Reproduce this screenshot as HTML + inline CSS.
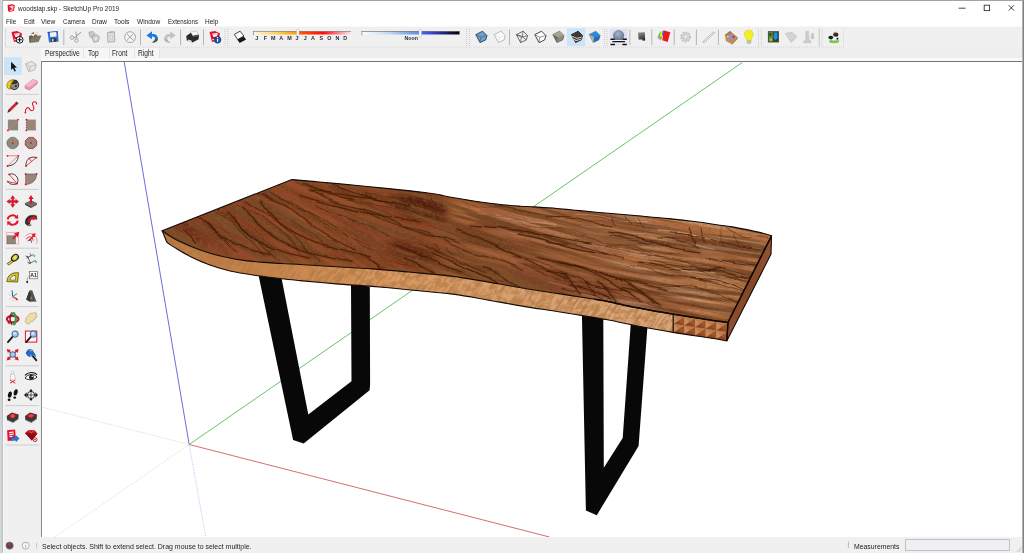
<!DOCTYPE html>
<html lang="en">
<head>
<meta charset="utf-8">
<title>woodslap.skp - SketchUp Pro 2019</title>
<style>
html,body{margin:0;padding:0;}
body{width:1024px;height:553px;overflow:hidden;background:#fff;position:relative;font-family:"Liberation Sans",sans-serif;color:#222;}
.abs{position:absolute;}
#win{position:absolute;left:0;top:0;width:1024px;height:553px;overflow:hidden;background:#fff;}
.t{position:absolute;display:inline-block;white-space:nowrap;font-size:7.7px;line-height:10px;color:#1e1e1e;transform-origin:0 50%;}
#toolbar{left:0;top:26px;width:1024px;height:22px;background:#f0f0f0;border-top:1px solid #f8f8f8;box-sizing:border-box;}
#tabrow{left:0;top:48px;width:1024px;height:13px;background:#eeeeee;}
#tabline{left:41px;top:58px;width:983px;height:3px;background:#fafafa;}
#tabs{left:41px;top:48px;width:119px;height:10px;background:#f6f6f6;}
.tsep{position:absolute;top:49px;width:1px;height:9px;background:#e2e2e2;}
#lefttb{left:0;top:48px;width:41px;height:489px;background:#f0f0f0;}
#vp{left:41px;top:61px;width:981px;height:476px;background:#fff;border-top:1px solid #767676;border-left:1px solid #8a8a8a;box-sizing:border-box;}
#status{left:0;top:537px;width:1024px;height:16px;background:#f0f0f0;}
#mbox{left:905px;top:539px;width:105px;height:12px;box-sizing:border-box;border:1px solid #b4c4d6;background:#f0f0f0;}
svg{position:absolute;left:0;top:0;}
</style>
</head>
<body>
<div id="win">
  <div id="toolbar" class="abs"></div>
  <div id="tabrow" class="abs"></div>
  <div id="tabs" class="abs"></div>
  <div id="tabline" class="abs"></div>
  <div class="tsep" style="left:83px"></div>
  <div class="tsep" style="left:109px"></div>
  <div class="tsep" style="left:134px"></div>
  <div class="tsep" style="left:159px"></div>
  <div id="lefttb" class="abs"></div>
  <div id="vp" class="abs"></div>
  <div id="status" class="abs"></div>
  <div id="mbox" class="abs"></div>
  <span class="t" style="left:18.3px;top:4.0px;transform:scaleX(0.843)">woodslap.skp - SketchUp Pro 2019</span>
  <span class="t" style="left:6.3px;top:17.0px;transform:scaleX(0.823)">File</span>
  <span class="t" style="left:23.6px;top:17.0px;transform:scaleX(0.808)">Edit</span>
  <span class="t" style="left:41.3px;top:17.0px;transform:scaleX(0.865)">View</span>
  <span class="t" style="left:62.6px;top:17.0px;transform:scaleX(0.797)">Camera</span>
  <span class="t" style="left:92px;top:17.0px;transform:scaleX(0.836)">Draw</span>
  <span class="t" style="left:114.2px;top:17.0px;transform:scaleX(0.858)">Tools</span>
  <span class="t" style="left:136.8px;top:17.0px;transform:scaleX(0.848)">Window</span>
  <span class="t" style="left:167.6px;top:17.0px;transform:scaleX(0.798)">Extensions</span>
  <span class="t" style="left:205px;top:17.0px;transform:scaleX(0.847)">Help</span>
  <span class="t" style="left:45.3px;top:47.8px;font-size:8.5px;transform:scaleX(0.781)">Perspective</span>
  <span class="t" style="left:87.6px;top:47.8px;font-size:8.5px;transform:scaleX(0.780)">Top</span>
  <span class="t" style="left:112.3px;top:47.8px;font-size:8.5px;transform:scaleX(0.776)">Front</span>
  <span class="t" style="left:137.9px;top:47.8px;font-size:8.5px;transform:scaleX(0.781)">Right</span>
  <span class="t" style="left:41.6px;top:542.1px;font-size:8.0px;transform:scaleX(0.871)">Select objects. Shift to extend select. Drag mouse to select multiple.</span>
  <span class="t" style="left:854.4px;top:542.1px;font-size:8.0px;transform:scaleX(0.858)">Measurements</span>
<svg id="scene" width="1024" height="553" viewBox="0 0 1024 553">
<defs>
  <clipPath id="vpclip"><rect x="42" y="62" width="980" height="475"/></clipPath>
  <linearGradient id="gTop" gradientUnits="userSpaceOnUse" x1="165" y1="225" x2="770" y2="290">
    <stop offset="0" stop-color="#7e381c"/>
    <stop offset="0.12" stop-color="#914827"/>
    <stop offset="0.3" stop-color="#9a4f29"/>
    <stop offset="0.42" stop-color="#8c4525"/>
    <stop offset="0.55" stop-color="#a5633c"/>
    <stop offset="0.65" stop-color="#ab6a42"/>
    <stop offset="0.8" stop-color="#b36e3e"/>
    <stop offset="1" stop-color="#b47242"/>
  </linearGradient>
  <linearGradient id="gSide" gradientUnits="userSpaceOnUse" x1="165" y1="240" x2="672" y2="325">
    <stop offset="0" stop-color="#b87440"/>
    <stop offset="0.22" stop-color="#c6844a"/>
    <stop offset="0.45" stop-color="#d99a62"/>
    <stop offset="0.7" stop-color="#d8a070"/>
    <stop offset="1" stop-color="#d8a67c"/>
  </linearGradient>
  <linearGradient id="gEnd" gradientUnits="userSpaceOnUse" x1="772" y1="240" x2="727" y2="338"><stop offset="0" stop-color="#935331"/><stop offset="0.5" stop-color="#824727"/><stop offset="1" stop-color="#8e5030"/></linearGradient>
  <filter id="blur6" x="-50%" y="-50%" width="200%" height="200%"><feGaussianBlur stdDeviation="4.5"/></filter>
  <filter id="blur04" x="-5%" y="-5%" width="110%" height="110%"><feGaussianBlur stdDeviation="0.45"/></filter>
  <filter id="wob" x="-5%" y="-5%" width="110%" height="110%"><feTurbulence type="fractalNoise" baseFrequency="0.035 0.07" numOctaves="2" seed="2" result="t"/><feDisplacementMap in="SourceGraphic" in2="t" scale="5" xChannelSelector="R" yChannelSelector="G"/><feGaussianBlur stdDeviation="0.4"/></filter>
  <filter id="blur1" x="-5%" y="-5%" width="110%" height="110%"><feGaussianBlur stdDeviation="0.9"/></filter>
  <filter id="mottle" x="0" y="0" width="100%" height="100%">
    <feTurbulence type="fractalNoise" baseFrequency="0.25 0.5" numOctaves="2" seed="4" result="n"/>
    <feColorMatrix in="n" type="matrix" values="0 0 0 0 0.25  0 0 0 0 0.1  0 0 0 0 0.04  3 0 0 0 -1.35"/>
  </filter>
  <filter id="mottle2" x="0" y="0" width="100%" height="100%">
    <feTurbulence type="fractalNoise" baseFrequency="0.12 0.2" numOctaves="3" seed="9" result="n"/>
    <feColorMatrix in="n" type="matrix" values="0 0 0 0 0.52  0 0 0 0 0.24  0 0 0 0 0.08  6 0 0 0 -2.75"/>
  </filter>
  <filter id="blur3" x="-50%" y="-50%" width="200%" height="200%"><feGaussianBlur stdDeviation="3"/></filter>
  <filter id="fine" x="0" y="0" width="100%" height="100%">
    <feTurbulence type="fractalNoise" baseFrequency="0.009 0.16" numOctaves="4" seed="7" result="n"/>
    <feColorMatrix in="n" type="matrix" values="0 0 0 0 0.2  0 0 0 0 0.07  0 0 0 0 0.02  7 0 0 0 -3.05"/>
  </filter>
  <filter id="fineL" x="0" y="0" width="100%" height="100%">
    <feTurbulence type="fractalNoise" baseFrequency="0.015 0.3" numOctaves="2" seed="21" result="n"/>
    <feColorMatrix in="n" type="matrix" values="0 0 0 0 0.92  0 0 0 0 0.8  0 0 0 0 0.68  0 3.2 0 0 -1.5"/>
  </filter>
  <linearGradient id="lgL" gradientUnits="userSpaceOnUse" x1="330" y1="0" x2="420" y2="0"><stop offset="0" stop-color="#fff"/><stop offset="1" stop-color="#000"/></linearGradient>
  <linearGradient id="lgM" gradientUnits="userSpaceOnUse" x1="330" y1="0" x2="640" y2="0"><stop offset="0" stop-color="#000"/><stop offset="0.29" stop-color="#fff"/><stop offset="0.75" stop-color="#fff"/><stop offset="1" stop-color="#000"/></linearGradient>
  <linearGradient id="lgR" gradientUnits="userSpaceOnUse" x1="560" y1="0" x2="640" y2="0"><stop offset="0" stop-color="#000"/><stop offset="1" stop-color="#fff"/></linearGradient>
  <mask id="mL" maskUnits="userSpaceOnUse" x="0" y="0" width="1024" height="553"><rect width="1024" height="553" fill="url(#lgL)"/></mask>
  <mask id="mM" maskUnits="userSpaceOnUse" x="0" y="0" width="1024" height="553"><rect width="1024" height="553" fill="url(#lgM)"/></mask>
  <mask id="mR" maskUnits="userSpaceOnUse" x="0" y="0" width="1024" height="553"><rect width="1024" height="553" fill="url(#lgR)"/></mask>
  <filter id="sgrain" x="0" y="0" width="100%" height="100%">
    <feTurbulence type="fractalNoise" baseFrequency="0.06 0.4" numOctaves="3" seed="11" result="n"/>
    <feColorMatrix in="n" type="matrix" values="0 0 0 0 0.42  0 0 0 0 0.18  0 0 0 0 0.06  3.2 0 0 0 -1.4"/>
  </filter>
  <path id="pTop" d="M162.2,230.7 L291.8,179.6 C295.9,179.9 306.1,180.8 316.2,181.7 C326.3,182.6 340.2,183.8 352.3,185.0 C364.4,186.2 376.4,187.3 388.5,188.6 C400.6,189.8 416.1,191.4 424.7,192.5 C433.3,193.6 436.1,194.2 440.0,194.9 C443.9,195.6 443.7,196.0 448.1,196.8 C452.5,197.6 460.2,198.9 466.2,199.8 C472.2,200.8 478.2,201.7 484.2,202.5 C490.2,203.3 496.3,204.1 502.3,204.7 C508.3,205.3 515.1,205.8 520.4,206.2 C525.7,206.6 528.0,206.5 534.0,206.9 C540.0,207.3 549.8,207.9 556.6,208.5 C563.4,209.1 568.4,209.6 575.0,210.2 C581.6,210.8 586.7,211.3 596.2,212.2 C605.8,213.0 620.2,214.2 632.3,215.3 C644.3,216.4 657.9,217.5 668.5,218.6 C679.1,219.7 687.6,220.7 696.2,221.8 C704.8,222.9 714.0,224.3 720.0,225.2 C726.0,226.0 725.7,225.7 732.3,226.9 C738.9,228.1 753.0,230.9 759.5,232.4 C766.0,233.9 769.5,235.3 771.5,235.9 L728.0,322.4 C724.8,321.9 717.8,321.1 708.5,319.7 C699.2,318.3 684.3,316.0 672.3,314.0 C660.2,312.0 646.6,309.6 636.2,307.6 C625.8,305.6 616.9,303.3 610.0,301.9 C603.1,300.5 603.3,300.7 594.7,299.3 C586.1,297.9 570.6,295.5 558.5,293.6 C546.4,291.7 534.3,290.0 522.3,288.0 C510.2,286.0 496.6,283.4 486.2,281.6 C475.8,279.8 466.9,278.4 460.0,277.4 C453.1,276.4 453.3,276.3 444.7,275.4 C436.1,274.5 420.6,273.1 408.5,272.0 C396.4,270.9 384.4,269.8 372.3,268.9 C360.2,268.0 348.2,267.4 336.2,266.7 C324.1,266.0 309.1,265.0 300.0,264.5 C290.9,264.0 287.7,263.9 281.6,263.5 C275.5,263.1 269.5,262.9 263.5,262.4 C257.5,261.9 251.4,261.4 245.4,260.6 C239.4,259.8 233.3,258.8 227.3,257.5 C221.3,256.2 215.2,254.8 209.2,253.0 C203.2,251.2 197.2,249.1 191.2,246.6 C185.2,244.1 177.9,240.8 173.1,238.1 C168.3,235.4 164.0,231.9 162.2,230.7 Z"/>
  <path id="pSide" d="M162.2,230.7 C164.0,231.9 168.3,235.4 173.1,238.1 C177.9,240.8 185.2,244.1 191.2,246.6 C197.2,249.1 203.2,251.2 209.2,253.0 C215.2,254.8 221.3,256.2 227.3,257.5 C233.3,258.8 239.4,259.8 245.4,260.6 C251.4,261.4 257.5,261.9 263.5,262.4 C269.5,262.9 275.5,263.1 281.6,263.5 C287.7,263.9 290.9,264.0 300.0,264.5 C309.1,265.0 324.1,266.0 336.2,266.7 C348.2,267.4 360.2,268.0 372.3,268.9 C384.4,269.8 396.4,270.9 408.5,272.0 C420.6,273.1 436.1,274.5 444.7,275.4 C453.3,276.3 453.1,276.4 460.0,277.4 C466.9,278.4 475.8,279.8 486.2,281.6 C496.6,283.4 510.2,286.0 522.3,288.0 C534.3,290.0 546.4,291.7 558.5,293.6 C570.6,295.5 586.1,297.9 594.7,299.3 C603.3,300.7 603.1,300.5 610.0,301.9 C616.9,303.3 625.8,305.6 636.2,307.6 C646.6,309.6 666.3,312.9 672.3,314.0 L673.2,332.4 C667.0,331.3 646.7,327.7 636.2,325.7 C625.7,323.7 616.9,321.6 610.0,320.3 C603.1,319.0 603.3,319.0 594.7,317.6 C586.1,316.2 570.6,313.6 558.5,311.7 C546.4,309.8 534.3,308.1 522.3,306.1 C510.2,304.1 496.6,301.5 486.2,299.7 C475.8,297.9 466.9,296.2 460.0,295.1 C453.1,294.0 453.3,294.2 444.7,293.3 C436.1,292.4 420.6,290.9 408.5,289.7 C396.4,288.5 384.4,287.4 372.3,286.4 C360.2,285.4 348.2,284.9 336.2,283.9 C324.1,282.9 309.1,281.5 300.0,280.6 C290.9,279.7 287.7,279.4 281.6,278.7 C275.5,278.0 269.5,277.3 263.5,276.5 C257.5,275.7 251.4,274.9 245.4,273.8 C239.4,272.8 233.3,271.7 227.3,270.2 C221.3,268.7 215.2,266.9 209.2,264.7 C203.2,262.5 197.2,260.0 191.2,257.0 C185.2,254.0 177.2,249.0 173.1,246.6 C169.0,244.2 167.9,243.0 166.8,242.3 Z"/>
  <clipPath id="cTop"><use href="#pTop"/></clipPath>
  <clipPath id="cSide"><use href="#pSide"/></clipPath>
</defs>
<g clip-path="url(#vpclip)">
  <line x1="124.2" y1="61.9" x2="189.2" y2="444.5" stroke="#5a5ae0" stroke-width="0.9"/>
  <line x1="189.2" y1="444.5" x2="205.8" y2="537" stroke="#a4a4ee" stroke-width="0.8" stroke-dasharray="0.8 1.2"/>
  <line x1="189.2" y1="444.5" x2="742.4" y2="62.4" stroke="#56bc56" stroke-width="0.9"/>
  <line x1="189.2" y1="444.5" x2="55" y2="537" stroke="#aadfaa" stroke-width="0.8" stroke-dasharray="0.8 1.2"/>
  <line x1="189.2" y1="444.5" x2="549.5" y2="537" stroke="#d05c5c" stroke-width="0.9"/>
  <line x1="189.2" y1="444.5" x2="40" y2="406.6" stroke="#efb4b4" stroke-width="0.8" stroke-dasharray="0.8 1.2"/>
  <path d="M351,284 L369.8,286.5 L370.1,384.4 L369.6,390.3 L303.7,443.4 L293.1,439.9 L258.6,275.5 L281.4,277.5 L308.3,414.5 L351.5,381.2 Z" fill="#080808"/>
  <path d="M581.9,314 L603.3,317.5 L603.8,467.8 L622.7,437.9 L630.9,322 L647.5,326 L638.6,445.9 L596.8,515.2 L585.9,510.6 Z" fill="#080808"/>
  <use href="#pTop" fill="url(#gTop)"/>
  <g clip-path="url(#cTop)">
    <g filter="url(#blur6)">
      <ellipse cx="420" cy="207" rx="30" ry="12" fill="#55220e" opacity="0.95" transform="rotate(14 420 207)"/>
      <ellipse cx="467" cy="213" rx="17" ry="7" fill="#c8844a" opacity="0.95" transform="rotate(10 467 213)"/>
      <ellipse cx="416" cy="254" rx="32" ry="10" fill="#5e230c" opacity="0.85" transform="rotate(16 416 254)"/>
      <ellipse cx="455" cy="268" rx="26" ry="5" fill="#b46c34" opacity="0.7" transform="rotate(16 455 268)"/>
      <ellipse cx="335" cy="236" rx="45" ry="9" fill="#a4562c" opacity="0.6" transform="rotate(22 335 236)"/>
      <ellipse cx="300" cy="205" rx="40" ry="7" fill="#9e5228" opacity="0.5" transform="rotate(8 300 205)"/>
      <ellipse cx="215" cy="233" rx="45" ry="8" fill="#74341a" opacity="0.6" transform="rotate(8 215 233)"/>
      <ellipse cx="610" cy="240" rx="120" ry="11" fill="#c08c64" opacity="0.5" transform="rotate(9 610 240)"/>
      <ellipse cx="555" cy="281" rx="75" ry="8" fill="#70321a" opacity="0.65" transform="rotate(12 555 281)"/>
      <ellipse cx="700" cy="285" rx="50" ry="14" fill="#b88656" opacity="0.5" transform="rotate(9 700 285)"/>
      <ellipse cx="640" cy="302" rx="50" ry="6" fill="#6e3820" opacity="0.5" transform="rotate(10 640 302)"/>
    </g>
    <g mask="url(#mL)"><g transform="rotate(30 280 225)"><rect x="60" y="60" width="520" height="360" filter="url(#fine)"/></g></g>
    <g mask="url(#mM)"><g transform="rotate(15 480 245)"><rect x="250" y="80" width="480" height="360" filter="url(#fine)"/></g></g>
    <g mask="url(#mR)"><g transform="rotate(8.5 650 270)"><rect x="440" y="100" width="420" height="340" filter="url(#fine)"/></g>
      <g transform="rotate(8.5 650 270)" opacity="0.3"><rect x="440" y="100" width="420" height="340" filter="url(#fineL)"/></g></g>
    <g fill="none" stroke="#4a1c0a" stroke-linecap="round" filter="url(#blur1)">
<path d="M574.8,224.8 C576.5,225.1 581.5,226.1 584.8,226.5 C588.1,227.0 591.5,227.4 594.8,227.7 C598.1,228.0 601.5,228.2 604.8,228.5 C608.1,228.7 611.5,228.9 614.8,229.2 C618.1,229.5 621.5,229.9 624.8,230.4 C628.1,230.9 631.5,231.5 634.8,232.1 C638.1,232.8 641.5,233.6 644.8,234.3 C648.1,235.1 651.5,235.9 654.8,236.6 C658.1,237.4 661.5,238.1 664.8,238.7 C668.1,239.3 671.5,239.9 674.8,240.4 C678.1,240.8 681.5,241.2 684.8,241.5 C688.1,241.9 691.5,242.0 694.8,242.4 C698.1,242.7 701.5,243.1 704.8,243.5 C708.1,244.0 711.5,244.5 714.8,245.1 C718.1,245.8 721.5,246.5 724.8,247.3 C728.1,248.1 731.5,249.1 734.8,250.0 C738.1,251.0 741.5,252.2 744.8,253.2 C748.1,254.2 751.5,255.2 754.8,256.1 C758.1,257.0 763.1,258.3 764.8,258.7" stroke-width="2.7" opacity="0.16"/>
<path d="M294.6,194.1 C296.2,194.9 301.2,197.2 304.6,198.8 C307.9,200.4 311.2,202.0 314.6,203.6 C317.9,205.2 321.2,206.8 324.6,208.4 C327.9,210.0 331.2,211.5 334.6,213.1 C337.9,214.6 341.2,216.2 344.6,217.7 C347.9,219.2 352.9,221.5 354.6,222.3" stroke-width="2.7" opacity="0.10"/>
<path d="M624.1,216.0 C625.7,216.3 630.7,217.2 634.1,217.9 C637.4,218.6 640.7,219.5 644.1,220.2 C647.4,221.0 650.7,221.7 654.1,222.4 C657.4,223.1 660.7,223.6 664.1,224.1 C667.4,224.6 670.7,225.1 674.1,225.4 C677.4,225.7 680.7,225.9 684.1,226.1 C687.4,226.3 690.7,226.4 694.1,226.6 C697.4,226.7 700.7,226.9 704.1,227.2 C707.4,227.5 710.7,227.9 714.1,228.4 C717.4,228.8 720.7,229.4 724.1,230.1 C727.4,230.8 730.7,231.6 734.1,232.6 C737.4,233.5 742.4,235.4 744.1,235.9" stroke-width="2.0" opacity="0.06"/>
<path d="M244.4,227.8 C246.1,229.2 251.1,233.3 254.4,236.2 C257.7,239.2 261.1,242.4 264.4,245.6 C267.7,248.9 272.7,254.0 274.4,255.7" stroke-width="2.3" opacity="0.22"/>
<path d="M277.2,189.0 C278.9,189.6 283.9,191.4 287.2,192.7 C290.5,193.9 293.9,195.2 297.2,196.6 C300.5,198.0 303.9,199.5 307.2,201.0 C310.5,202.6 313.9,204.2 317.2,206.0 C320.5,207.7 323.9,209.5 327.2,211.3 C330.5,213.1 333.9,215.0 337.2,216.9 C340.5,218.8 343.9,220.7 347.2,222.6 C350.5,224.5 353.9,226.4 357.2,228.2 C360.5,230.0 363.9,231.8 367.2,233.5 C370.5,235.2 373.9,236.8 377.2,238.3 C380.5,239.8 383.9,241.2 387.2,242.5 C390.5,243.9 393.9,245.1 397.2,246.4 C400.5,247.6 403.9,248.8 407.2,250.1 C410.5,251.3 413.9,252.5 417.2,253.7 C420.5,255.0 425.5,256.9 427.2,257.6" stroke-width="2.8" opacity="0.10"/>
<path d="M631.2,230.8 C632.9,231.1 637.9,232.2 641.2,232.9 C644.6,233.6 647.9,234.4 651.2,235.1 C654.6,235.7 657.9,236.3 661.2,236.8 C664.6,237.2 667.9,237.5 671.2,237.9 C674.6,238.2 677.9,238.4 681.2,238.8 C684.6,239.1 687.9,239.5 691.2,240.0 C694.6,240.6 697.9,241.3 701.2,242.1 C704.6,242.8 707.9,243.8 711.2,244.7 C714.6,245.5 717.9,246.4 721.2,247.2 C724.6,247.9 729.6,248.7 731.2,249.0" stroke-width="1.3" opacity="0.10"/>
<path d="M603.9,278.7 C605.5,278.9 610.5,279.2 613.9,279.7 C617.2,280.2 620.5,280.8 623.9,281.8 C627.2,282.8 630.5,284.3 633.9,285.6 C637.2,286.9 640.5,288.5 643.9,289.6 C647.2,290.6 650.5,291.4 653.9,292.0 C657.2,292.6 662.2,292.9 663.9,293.1" stroke-width="1.5" opacity="0.14"/>
<path d="M590.9,254.7 C592.6,255.2 597.6,256.6 600.9,257.3 C604.3,258.1 607.6,258.7 610.9,259.3 C614.3,259.9 617.6,260.6 620.9,261.1 C624.3,261.7 627.6,262.1 630.9,262.7 C634.3,263.2 637.6,263.6 640.9,264.2 C644.3,264.7 647.6,265.2 650.9,265.9 C654.3,266.5 657.6,267.3 660.9,268.1 C664.3,268.9 667.6,269.9 670.9,270.8 C674.3,271.7 679.3,273.2 680.9,273.6" stroke-width="1.9" opacity="0.13"/>
<path d="M158.5,211.5 C160.1,213.1 165.1,217.4 168.5,221.0 C171.8,224.5 176.8,230.9 178.5,232.8" stroke-width="1.6" opacity="0.16"/>
<path d="M678.8,302.9 C680.5,303.2 685.5,304.0 688.8,304.6 C692.1,305.2 695.5,305.8 698.8,306.7 C702.1,307.5 705.5,308.6 708.8,309.6 C712.1,310.6 715.5,311.8 718.8,312.8 C722.1,313.9 725.5,314.9 728.8,315.7 C732.1,316.6 735.5,317.3 738.8,317.9 C742.1,318.5 745.5,319.0 748.8,319.6 C752.1,320.3 755.5,320.9 758.8,321.7 C762.1,322.6 767.1,324.2 768.8,324.7" stroke-width="1.7" opacity="0.17"/>
<path d="M473.1,235.7 C474.7,236.5 479.7,239.0 483.1,240.3 C486.4,241.5 489.7,242.6 493.1,243.4 C496.4,244.3 499.7,244.8 503.1,245.4 C506.4,246.0 509.7,246.3 513.1,247.0 C516.4,247.8 519.7,248.7 523.1,249.8 C526.4,250.9 529.7,252.4 533.1,253.7 C536.4,255.1 539.7,256.7 543.1,257.9 C546.4,259.2 549.7,260.2 553.1,261.0 C556.4,261.8 559.7,262.1 563.1,262.6 C566.4,263.0 569.7,263.2 573.1,263.7 C576.4,264.2 579.7,264.8 583.1,265.7 C586.4,266.6 589.7,267.9 593.1,269.2 C596.4,270.4 599.7,272.1 603.1,273.3 C606.4,274.5 609.7,275.5 613.1,276.4 C616.4,277.2 619.7,277.7 623.1,278.1 C626.4,278.6 629.7,278.6 633.1,279.0 C636.4,279.4 639.7,279.7 643.1,280.4 C646.4,281.2 651.4,282.9 653.1,283.4" stroke-width="1.2" opacity="0.18"/>
<path d="M290.1,220.2 C291.8,221.3 296.8,224.7 300.1,227.0 C303.5,229.4 306.8,231.8 310.1,234.3 C313.5,236.7 316.8,239.2 320.1,241.7 C323.5,244.2 326.8,246.8 330.1,249.3 C333.5,251.9 338.5,255.9 340.1,257.2" stroke-width="2.5" opacity="0.15"/>
<path d="M331.0,238.7 C332.6,239.9 337.6,243.4 341.0,245.8 C344.3,248.2 347.6,250.6 351.0,253.0 C354.3,255.4 357.6,257.8 361.0,260.1 C364.3,262.5 369.3,265.8 371.0,266.9" stroke-width="2.2" opacity="0.19"/>
<path d="M320.5,183.0 C322.2,183.6 327.2,185.6 330.5,186.7 C333.8,187.9 337.2,188.9 340.5,189.8 C343.8,190.7 347.2,191.4 350.5,192.2 C353.8,192.9 357.2,193.5 360.5,194.3 C363.8,195.1 367.2,195.8 370.5,196.7 C373.8,197.6 377.2,198.7 380.5,199.7 C383.8,200.8 388.8,202.6 390.5,203.2" stroke-width="2.3" opacity="0.18"/>
<path d="M372.9,248.5 C374.6,249.4 379.6,252.3 382.9,254.1 C386.2,255.9 389.6,257.6 392.9,259.2 C396.2,260.8 399.6,262.4 402.9,263.9 C406.2,265.4 411.2,267.6 412.9,268.3" stroke-width="1.6" opacity="0.22"/>
<path d="M208.1,192.4 C209.8,193.3 214.8,195.8 218.1,197.7 C221.4,199.5 224.8,201.5 228.1,203.6 C231.4,205.7 234.8,207.9 238.1,210.2 C241.4,212.6 244.8,215.2 248.1,217.8 C251.4,220.4 254.8,223.1 258.1,225.9 C261.4,228.7 264.8,231.6 268.1,234.4 C271.4,237.3 274.8,240.2 278.1,243.1 C281.4,246.0 284.8,249.0 288.1,252.0 C291.4,255.0 296.4,259.7 298.1,261.3" stroke-width="1.3" opacity="0.10"/>
<path d="M483.2,245.5 C484.8,246.3 489.8,248.7 493.2,250.2 C496.5,251.7 499.8,253.3 503.2,254.5 C506.5,255.8 509.8,256.7 513.2,257.5 C516.5,258.3 519.8,258.8 523.2,259.5 C526.5,260.2 531.5,261.2 533.2,261.6" stroke-width="1.9" opacity="0.17"/>
<path d="M630.9,259.1 C632.6,259.5 637.6,260.8 640.9,261.5 C644.3,262.3 647.6,262.9 650.9,263.6 C654.3,264.2 657.6,264.7 660.9,265.3 C664.3,265.8 667.6,266.3 670.9,266.8 C674.3,267.4 677.6,268.0 680.9,268.6 C684.3,269.3 687.6,270.0 690.9,270.8 C694.3,271.6 699.3,272.9 700.9,273.4" stroke-width="1.7" opacity="0.08"/>
<path d="M615.6,273.8 C617.3,274.3 622.3,275.8 625.6,276.9 C629.0,277.9 632.3,279.1 635.6,280.2 C639.0,281.3 642.3,282.3 645.6,283.4 C649.0,284.4 652.3,285.4 655.6,286.4 C659.0,287.3 662.3,288.3 665.6,289.1 C669.0,290.0 672.3,290.8 675.6,291.6 C679.0,292.3 682.3,292.9 685.6,293.6 C689.0,294.2 692.3,294.7 695.6,295.3 C699.0,295.8 702.3,296.4 705.6,296.9 C709.0,297.5 712.3,297.9 715.6,298.5 C719.0,299.1 722.3,299.6 725.6,300.3 C729.0,300.9 732.3,301.6 735.6,302.4 C739.0,303.3 744.0,304.7 745.6,305.1" stroke-width="2.3" opacity="0.13"/>
<path d="M682.0,253.5 C683.7,253.8 688.7,254.5 692.0,255.1 C695.3,255.7 698.7,256.3 702.0,257.0 C705.3,257.8 708.7,258.6 712.0,259.4 C715.3,260.2 718.7,261.0 722.0,261.9 C725.3,262.7 728.7,263.6 732.0,264.5 C735.3,265.4 740.3,266.9 742.0,267.3" stroke-width="2.4" opacity="0.14"/>
<path d="M165.3,173.9 C167.0,174.6 172.0,176.4 175.3,177.8 C178.7,179.2 182.0,180.8 185.3,182.5 C188.7,184.2 192.0,186.1 195.3,188.1 C198.7,190.1 202.0,192.3 205.3,194.5 C208.7,196.7 212.0,199.0 215.3,201.3 C218.7,203.5 222.0,205.9 225.3,208.2 C228.7,210.5 232.0,212.7 235.3,215.0 C238.7,217.3 242.0,219.7 245.3,222.1 C248.7,224.4 252.0,226.7 255.3,229.2 C258.7,231.8 262.0,234.4 265.3,237.2 C268.7,240.0 273.7,244.7 275.3,246.1" stroke-width="2.2" opacity="0.24"/>
<path d="M566.4,269.9 C568.1,270.3 573.1,271.7 576.4,272.5 C579.7,273.4 583.1,274.2 586.4,275.0 C589.7,275.9 593.1,276.6 596.4,277.4 C599.7,278.2 603.1,279.0 606.4,279.8 C609.7,280.7 613.1,281.5 616.4,282.3 C619.7,283.2 623.1,284.2 626.4,285.1 C629.7,286.1 633.1,287.1 636.4,288.1 C639.7,289.0 643.1,289.9 646.4,290.8 C649.7,291.7 653.1,292.6 656.4,293.5 C659.7,294.4 663.1,295.4 666.4,296.2 C669.7,297.1 673.1,298.0 676.4,298.8 C679.7,299.6 683.1,300.4 686.4,301.2 C689.7,302.0 694.7,303.1 696.4,303.5" stroke-width="2.1" opacity="0.12"/>
<path d="M645.1,303.3 C646.7,303.7 651.7,304.9 655.1,305.7 C658.4,306.4 661.7,307.1 665.1,307.9 C668.4,308.6 671.7,309.4 675.1,310.2 C678.4,310.9 681.7,311.7 685.1,312.6 C688.4,313.5 693.4,315.1 695.1,315.6" stroke-width="2.0" opacity="0.10"/>
<path d="M668.5,248.6 C670.2,248.9 675.2,249.6 678.5,250.3 C681.8,250.9 685.2,251.7 688.5,252.5 C691.8,253.4 695.2,254.3 698.5,255.2 C701.8,256.1 705.2,257.2 708.5,258.0 C711.8,258.9 715.2,259.6 718.5,260.3 C721.8,261.0 725.2,261.4 728.5,262.0 C731.8,262.5 735.2,262.9 738.5,263.4 C741.8,264.0 745.2,264.4 748.5,265.0 C751.8,265.6 755.2,266.2 758.5,267.0 C761.8,267.8 766.8,269.6 768.5,270.1" stroke-width="2.9" opacity="0.10"/>
<path d="M510.9,242.7 C512.6,243.0 517.6,243.9 520.9,244.5 C524.2,245.1 527.6,245.6 530.9,246.2 C534.2,246.8 537.6,247.5 540.9,248.3 C544.2,249.0 547.6,249.9 550.9,250.8 C554.2,251.8 557.6,252.9 560.9,253.9 C564.2,255.0 567.6,256.2 570.9,257.4 C574.2,258.5 579.2,260.2 580.9,260.8" stroke-width="2.1" opacity="0.18"/>
<path d="M160.1,176.5 C161.7,177.2 166.7,179.4 170.1,181.0 C173.4,182.6 176.7,184.3 180.1,186.0 C183.4,187.7 186.7,189.5 190.1,191.4 C193.4,193.2 196.7,195.1 200.1,197.1 C203.4,199.1 206.7,201.2 210.1,203.4 C213.4,205.6 216.7,207.8 220.1,210.2 C223.4,212.5 226.7,215.1 230.1,217.7 C233.4,220.3 236.7,223.0 240.1,225.9 C243.4,228.7 246.7,231.7 250.1,234.8 C253.4,237.9 256.7,241.1 260.1,244.4 C263.4,247.6 268.4,252.8 270.1,254.5" stroke-width="1.6" opacity="0.13"/>
<path d="M475.8,222.1 C477.5,222.4 482.5,223.3 485.8,224.0 C489.2,224.6 492.5,225.2 495.8,226.1 C499.2,226.9 502.5,227.9 505.8,228.9 C509.2,229.9 512.5,231.2 515.8,232.2 C519.2,233.3 522.5,234.5 525.8,235.3 C529.2,236.2 532.5,236.9 535.8,237.5 C539.2,238.1 542.5,238.5 545.8,238.9 C549.2,239.3 552.5,239.5 555.8,240.0 C559.2,240.5 564.2,241.5 565.8,241.8" stroke-width="2.7" opacity="0.20"/>
<path d="M437.1,251.0 C438.8,251.8 443.8,254.1 447.1,255.6 C450.5,257.1 453.8,258.5 457.1,259.8 C460.5,261.2 463.8,262.5 467.1,263.8 C470.5,265.0 473.8,266.2 477.1,267.4 C480.5,268.6 483.8,269.7 487.1,271.0 C490.5,272.2 495.5,274.1 497.1,274.7" stroke-width="1.4" opacity="0.27"/>
<path d="M317.9,234.2 C319.6,235.4 324.6,239.2 327.9,241.5 C331.2,243.8 334.6,246.0 337.9,248.2 C341.2,250.3 344.6,252.4 347.9,254.4 C351.2,256.4 354.6,258.3 357.9,260.3 C361.2,262.3 366.2,265.2 367.9,266.2" stroke-width="1.8" opacity="0.25"/>
<path d="M208.9,234.1 C210.6,235.8 215.6,240.6 218.9,244.1 C222.2,247.6 227.2,253.2 228.9,255.0" stroke-width="3.0" opacity="0.18"/>
<path d="M389.9,203.1 C391.6,203.5 396.6,204.7 399.9,205.5 C403.2,206.4 406.6,207.2 409.9,208.1 C413.2,208.9 416.6,209.8 419.9,210.8 C423.2,211.7 426.6,212.8 429.9,213.9 C433.2,214.9 436.6,216.0 439.9,217.3 C443.2,218.5 448.2,220.6 449.9,221.2" stroke-width="2.4" opacity="0.24"/>
<path d="M340.7,187.5 C342.4,187.9 347.4,189.2 350.7,190.0 C354.1,190.8 357.4,191.4 360.7,192.1 C364.1,192.9 367.4,193.5 370.7,194.4 C374.1,195.2 377.4,196.2 380.7,197.2 C384.1,198.2 387.4,199.4 390.7,200.5 C394.1,201.6 399.1,203.2 400.7,203.8" stroke-width="2.3" opacity="0.12"/>
<path d="M536.3,261.3 C537.9,261.7 542.9,262.9 546.3,263.8 C549.6,264.7 552.9,265.5 556.3,266.4 C559.6,267.4 562.9,268.4 566.3,269.4 C569.6,270.4 572.9,271.5 576.3,272.5 C579.6,273.5 582.9,274.6 586.3,275.6 C589.6,276.6 592.9,277.6 596.3,278.4 C599.6,279.3 602.9,280.1 606.3,280.9 C609.6,281.7 612.9,282.4 616.3,283.2 C619.6,283.9 622.9,284.7 626.3,285.5 C629.6,286.3 634.6,287.7 636.3,288.1" stroke-width="2.7" opacity="0.06"/>
<path d="M670.3,310.4 C672.0,310.8 677.0,312.3 680.3,312.9 C683.7,313.6 687.0,314.0 690.3,314.5 C693.7,315.0 697.0,315.3 700.3,316.0 C703.7,316.6 708.7,318.0 710.3,318.4" stroke-width="2.8" opacity="0.15"/>
<path d="M222.0,175.8 C223.7,176.6 228.7,179.0 232.0,180.6 C235.3,182.2 238.7,183.8 242.0,185.4 C245.3,186.9 248.7,188.3 252.0,189.7 C255.3,191.1 258.7,192.4 262.0,193.7 C265.3,195.0 268.7,196.3 272.0,197.7 C275.3,199.2 278.7,200.7 282.0,202.5 C285.3,204.2 288.7,206.2 292.0,208.3 C295.3,210.4 298.7,212.8 302.0,215.1 C305.3,217.5 308.7,220.1 312.0,222.5 C315.3,224.9 318.7,227.3 322.0,229.5 C325.3,231.7 328.7,233.8 332.0,235.7 C335.3,237.7 338.7,239.5 342.0,241.4 C345.3,243.2 348.7,245.0 352.0,246.8 C355.3,248.7 360.3,251.6 362.0,252.6" stroke-width="2.6" opacity="0.23"/>
<path d="M208.0,202.6 C209.7,203.6 214.7,206.5 218.0,208.7 C221.4,210.9 224.7,213.1 228.0,215.5 C231.4,217.9 234.7,220.3 238.0,223.0 C241.4,225.6 244.7,228.5 248.0,231.4 C251.4,234.4 254.7,237.5 258.0,240.7 C261.4,244.0 264.7,247.4 268.0,250.9 C271.4,254.5 276.4,260.1 278.0,261.9" stroke-width="1.6" opacity="0.15"/>
<path d="M529.1,263.7 C530.8,264.3 535.8,266.0 539.1,267.1 C542.5,268.3 545.8,269.5 549.1,270.7 C552.5,271.9 555.8,273.1 559.1,274.3 C562.5,275.4 565.8,276.6 569.1,277.7 C572.5,278.8 575.8,279.8 579.1,280.8 C582.5,281.7 585.8,282.6 589.1,283.4 C592.5,284.3 595.8,285.0 599.1,285.8 C602.5,286.5 607.5,287.6 609.1,287.9" stroke-width="2.1" opacity="0.10"/>
<path d="M672.2,278.7 C673.8,279.1 678.8,280.2 682.2,280.9 C685.5,281.5 688.8,282.1 692.2,282.6 C695.5,283.2 698.8,283.7 702.2,284.2 C705.5,284.7 708.8,285.2 712.2,285.8 C715.5,286.3 718.8,286.9 722.2,287.6 C725.5,288.2 728.8,289.0 732.2,289.8 C735.5,290.7 738.8,291.8 742.2,292.8 C745.5,293.8 748.8,294.9 752.2,296.0 C755.5,297.0 760.5,298.7 762.2,299.2" stroke-width="1.2" opacity="0.13"/>
<path d="M433.9,259.3 C435.6,260.0 440.6,261.9 443.9,263.4 C447.3,264.8 450.6,266.3 453.9,267.9 C457.3,269.5 460.6,271.2 463.9,272.9 C467.3,274.6 472.3,277.2 473.9,278.1" stroke-width="1.3" opacity="0.16"/>
<path d="M459.1,223.4 C460.8,223.9 465.8,225.6 469.1,226.5 C472.4,227.4 475.8,228.1 479.1,228.8 C482.4,229.5 485.8,230.0 489.1,230.7 C492.4,231.4 495.8,232.1 499.1,233.0 C502.4,233.9 505.8,234.9 509.1,236.0 C512.4,237.0 515.8,238.3 519.1,239.5 C522.4,240.7 525.8,241.9 529.1,242.9 C532.4,244.0 535.8,245.0 539.1,245.8 C542.4,246.6 545.8,247.2 549.1,247.7 C552.4,248.3 557.4,248.8 559.1,249.1" stroke-width="2.9" opacity="0.11"/>
<path d="M437.6,207.5 C439.3,208.2 444.3,210.1 447.6,211.4 C450.9,212.6 454.3,213.9 457.6,215.0 C460.9,216.2 464.3,217.4 467.6,218.4 C470.9,219.4 474.3,220.3 477.6,221.1 C480.9,221.9 484.3,222.5 487.6,223.2 C490.9,223.9 494.3,224.5 497.6,225.2 C500.9,225.9 504.3,226.6 507.6,227.4 C510.9,228.2 514.3,229.1 517.6,230.0 C520.9,230.9 524.3,231.8 527.6,232.7 C530.9,233.7 534.3,234.6 537.6,235.4 C540.9,236.2 544.3,237.0 547.6,237.7 C550.9,238.3 554.3,238.8 557.6,239.4 C560.9,239.9 564.3,240.3 567.6,240.8 C570.9,241.3 574.3,241.7 577.6,242.3 C580.9,242.9 584.3,243.6 587.6,244.3 C590.9,245.1 594.3,246.0 597.6,246.9 C600.9,247.7 604.3,248.7 607.6,249.5 C610.9,250.4 614.3,251.2 617.6,251.9 C620.9,252.7 625.9,253.5 627.6,253.8" stroke-width="2.3" opacity="0.19"/>
<path d="M689.6,270.7 C691.3,271.2 696.3,272.6 699.6,273.6 C702.9,274.5 706.3,275.4 709.6,276.2 C712.9,277.1 716.3,277.8 719.6,278.5 C722.9,279.2 726.3,279.8 729.6,280.4 C732.9,281.0 736.3,281.6 739.6,282.2 C742.9,282.8 746.3,283.3 749.6,283.9 C752.9,284.5 756.3,285.0 759.6,285.7 C762.9,286.3 767.9,287.6 769.6,288.0" stroke-width="2.2" opacity="0.14"/>
<path d="M468.0,237.7 C469.7,238.4 474.7,240.5 478.0,241.8 C481.4,243.1 484.7,244.3 488.0,245.4 C491.4,246.4 494.7,247.4 498.0,248.3 C501.4,249.2 504.7,250.0 508.0,250.9 C511.4,251.8 514.7,252.6 518.0,253.6 C521.4,254.6 524.7,255.6 528.0,256.7 C531.4,257.8 534.7,259.0 538.0,260.2 C541.4,261.4 544.7,262.7 548.0,263.8 C551.4,264.8 554.7,265.9 558.0,266.8 C561.4,267.7 564.7,268.4 568.0,269.2 C571.4,269.9 576.4,270.9 578.0,271.2" stroke-width="2.9" opacity="0.25"/>
<path d="M339.7,185.4 C341.4,185.9 346.4,187.5 349.7,188.4 C353.0,189.3 356.4,190.1 359.7,190.8 C363.0,191.5 368.0,192.4 369.7,192.7" stroke-width="2.0" opacity="0.27"/>
<path d="M530.9,280.3 C532.6,281.0 537.6,283.3 540.9,284.6 C544.2,286.0 547.6,287.3 550.9,288.4 C554.2,289.5 557.6,290.4 560.9,291.4 C564.2,292.3 569.2,293.7 570.9,294.1" stroke-width="1.9" opacity="0.13"/>
<path d="M578.7,285.4 C580.4,285.9 585.4,287.2 588.7,288.1 C592.0,289.0 595.4,289.9 598.7,290.8 C602.0,291.8 605.4,292.7 608.7,293.6 C612.0,294.6 615.4,295.7 618.7,296.8 C622.0,297.9 625.4,299.0 628.7,300.1 C632.0,301.2 635.4,302.3 638.7,303.3 C642.0,304.3 645.4,305.3 648.7,306.2 C652.0,307.1 655.4,308.0 658.7,308.9 C662.0,309.7 665.4,310.6 668.7,311.5 C672.0,312.3 677.0,313.5 678.7,313.9" stroke-width="1.5" opacity="0.08"/>
<path d="M603.9,272.4 C605.5,272.8 610.5,273.7 613.9,274.4 C617.2,275.2 620.5,276.1 623.9,277.0 C627.2,277.9 630.5,278.9 633.9,279.9 C637.2,280.9 640.5,281.9 643.9,282.9 C647.2,283.9 650.5,284.9 653.9,285.9 C657.2,286.9 660.5,287.9 663.9,288.8 C667.2,289.7 670.5,290.6 673.9,291.3 C677.2,292.1 680.5,292.8 683.9,293.5 C687.2,294.1 690.5,294.7 693.9,295.3 C697.2,295.9 700.5,296.5 703.9,297.1 C707.2,297.7 710.5,298.3 713.9,299.0 C717.2,299.6 720.5,300.3 723.9,301.1 C727.2,301.8 730.5,302.7 733.9,303.6 C737.2,304.5 742.2,306.1 743.9,306.6" stroke-width="2.8" opacity="0.16"/>
<path d="M270.6,215.6 C272.2,216.8 277.2,220.1 280.6,222.5 C283.9,224.9 287.2,227.5 290.6,230.1 C293.9,232.8 297.2,235.5 300.6,238.4 C303.9,241.3 307.2,244.5 310.6,247.5 C313.9,250.5 318.9,255.1 320.6,256.7" stroke-width="1.6" opacity="0.21"/>
<path d="M673.7,237.0 C675.4,237.3 680.4,238.1 683.7,238.6 C687.0,239.1 690.4,239.4 693.7,239.8 C697.0,240.3 700.4,240.8 703.7,241.4 C707.0,242.0 710.4,242.7 713.7,243.4 C717.0,244.2 720.4,245.0 723.7,245.7 C727.0,246.5 730.4,247.2 733.7,247.8 C737.0,248.5 740.4,249.2 743.7,249.9 C747.0,250.5 750.4,251.0 753.7,251.8 C757.0,252.5 762.0,253.9 763.7,254.4" stroke-width="2.8" opacity="0.11"/>
<path d="M605.4,224.0 C607.1,224.3 612.1,225.3 615.4,225.9 C618.7,226.5 622.1,227.2 625.4,227.7 C628.7,228.2 632.1,228.6 635.4,228.9 C638.7,229.3 642.1,229.4 645.4,229.7 C648.7,230.0 652.1,230.3 655.4,230.7 C658.7,231.1 662.1,231.6 665.4,232.3 C668.7,232.9 672.1,233.7 675.4,234.5 C678.7,235.2 682.1,236.0 685.4,236.6 C688.7,237.2 692.1,237.6 695.4,238.1 C698.7,238.6 703.7,239.1 705.4,239.4" stroke-width="1.5" opacity="0.18"/>
<path d="M311.6,205.3 C313.3,206.1 318.3,208.6 321.6,210.2 C324.9,211.8 328.3,213.3 331.6,214.8 C334.9,216.3 338.3,217.8 341.6,219.2 C344.9,220.7 348.3,222.1 351.6,223.6 C354.9,225.1 358.3,226.5 361.6,228.0 C364.9,229.5 368.3,230.9 371.6,232.5 C374.9,234.0 378.3,235.5 381.6,237.1 C384.9,238.6 389.9,240.9 391.6,241.7" stroke-width="1.4" opacity="0.15"/>
<path d="M399.3,245.0 C401.0,245.8 406.0,248.2 409.3,249.9 C412.6,251.7 416.0,253.5 419.3,255.2 C422.6,257.0 426.0,258.8 429.3,260.4 C432.6,262.1 436.0,263.7 439.3,265.2 C442.6,266.8 446.0,268.2 449.3,269.6 C452.6,271.0 456.0,272.2 459.3,273.6 C462.6,274.9 467.6,276.8 469.3,277.4" stroke-width="2.5" opacity="0.25"/>
<path d="M269.5,206.4 C271.2,207.7 276.2,211.4 279.5,214.0 C282.9,216.6 286.2,219.6 289.5,222.0 C292.9,224.5 296.2,226.6 299.5,228.7 C302.9,230.9 306.2,232.6 309.5,234.7 C312.9,236.9 316.2,239.0 319.5,241.6 C322.9,244.1 326.2,247.2 329.5,250.2 C332.9,253.2 337.9,258.0 339.5,259.6" stroke-width="2.9" opacity="0.13"/>
<path d="M523.6,264.4 C525.3,264.9 530.3,266.6 533.6,267.6 C537.0,268.6 540.3,269.5 543.6,270.4 C547.0,271.2 550.3,272.0 553.6,272.7 C557.0,273.5 560.3,274.2 563.6,274.9 C567.0,275.7 570.3,276.4 573.6,277.2 C577.0,278.0 580.3,278.9 583.6,279.8 C587.0,280.8 590.3,281.7 593.6,282.8 C597.0,283.9 600.3,285.1 603.6,286.2 C607.0,287.4 610.3,288.5 613.6,289.7 C617.0,290.9 620.3,292.2 623.6,293.4 C627.0,294.6 632.0,296.3 633.6,296.8" stroke-width="2.2" opacity="0.14"/>
<path d="M709.4,292.8 C711.1,293.3 716.1,294.6 719.4,295.6 C722.7,296.5 726.1,297.5 729.4,298.4 C732.7,299.4 736.1,300.4 739.4,301.3 C742.7,302.2 746.1,303.2 749.4,304.0 C752.7,304.9 756.1,305.7 759.4,306.5 C762.7,307.3 767.7,308.5 769.4,308.9" stroke-width="2.5" opacity="0.17"/>
<path d="M437.8,223.3 C439.5,224.1 444.5,226.4 447.8,227.9 C451.1,229.3 454.5,230.8 457.8,232.1 C461.1,233.5 464.5,234.8 467.8,236.0 C471.1,237.1 474.5,238.1 477.8,239.0 C481.1,240.0 484.5,240.7 487.8,241.6 C491.1,242.4 494.5,243.1 497.8,244.0 C501.1,244.8 504.5,245.6 507.8,246.6 C511.1,247.6 514.5,248.7 517.8,249.9 C521.1,251.0 524.5,252.3 527.8,253.5 C531.1,254.7 534.5,256.0 537.8,257.2 C541.1,258.4 544.5,259.5 547.8,260.5 C551.1,261.5 554.5,262.4 557.8,263.2 C561.1,263.9 564.5,264.6 567.8,265.2 C571.1,265.8 574.5,266.3 577.8,266.9 C581.1,267.4 584.5,268.0 587.8,268.7 C591.1,269.4 594.5,270.3 597.8,271.2 C601.1,272.1 604.5,273.2 607.8,274.3 C611.1,275.4 614.5,276.7 617.8,277.8 C621.1,279.0 626.1,280.7 627.8,281.3" stroke-width="1.7" opacity="0.21"/>
<path d="M672.8,250.3 C674.5,250.6 679.5,251.1 682.8,251.6 C686.1,252.2 689.5,252.7 692.8,253.4 C696.1,254.1 699.5,255.0 702.8,255.8 C706.1,256.7 709.5,257.7 712.8,258.6 C716.1,259.4 719.5,260.4 722.8,261.2 C726.1,262.0 729.5,262.7 732.8,263.4 C736.1,264.1 739.5,264.8 742.8,265.5 C746.1,266.1 749.5,266.6 752.8,267.2 C756.1,267.8 761.1,268.7 762.8,269.1" stroke-width="3.0" opacity="0.06"/>
<path d="M433.4,204.5 C435.1,205.1 440.1,206.9 443.4,208.0 C446.8,209.1 450.1,210.3 453.4,211.2 C456.8,212.1 460.1,212.8 463.4,213.5 C466.8,214.2 470.1,214.8 473.4,215.5 C476.8,216.1 480.1,216.7 483.4,217.4 C486.8,218.1 490.1,218.7 493.4,219.5 C496.8,220.3 500.1,221.2 503.4,222.1 C506.8,223.0 510.1,223.9 513.4,224.9 C516.8,225.9 520.1,226.9 523.4,227.9 C526.8,228.8 530.1,229.7 533.4,230.5 C536.8,231.3 540.1,232.0 543.4,232.7 C546.8,233.3 551.8,234.0 553.4,234.3" stroke-width="2.4" opacity="0.16"/>
<path d="M207.8,172.7 C209.5,173.4 214.5,175.2 217.8,176.4 C221.1,177.7 224.5,179.0 227.8,180.3 C231.1,181.6 234.5,182.8 237.8,184.2 C241.1,185.5 244.5,186.8 247.8,188.2 C251.1,189.6 254.5,191.0 257.8,192.5 C261.1,194.0 266.1,196.4 267.8,197.1" stroke-width="2.3" opacity="0.26"/>
<path d="M696.9,305.9 C698.6,306.4 703.6,308.1 706.9,309.1 C710.2,310.1 713.6,310.9 716.9,311.7 C720.2,312.5 723.6,313.1 726.9,313.7 C730.2,314.4 733.6,314.9 736.9,315.5 C740.2,316.0 743.6,316.5 746.9,317.1 C750.2,317.6 753.6,318.1 756.9,318.8 C760.2,319.4 765.2,320.5 766.9,320.9" stroke-width="2.1" opacity="0.17"/>
<path d="M297.7,181.6 C299.4,182.2 304.4,184.1 307.7,185.2 C311.0,186.3 314.4,187.4 317.7,188.4 C321.0,189.4 324.4,190.4 327.7,191.4 C331.0,192.3 334.4,193.2 337.7,194.2 C341.0,195.2 344.4,196.1 347.7,197.1 C351.0,198.2 354.4,199.3 357.7,200.4 C361.0,201.5 364.4,202.8 367.7,204.0 C371.0,205.2 374.4,206.5 377.7,207.8 C381.0,209.1 386.0,210.9 387.7,211.6" stroke-width="2.1" opacity="0.28"/>
<path d="M640.6,270.4 C642.2,270.8 647.2,272.0 650.6,272.7 C653.9,273.4 657.2,274.0 660.6,274.6 C663.9,275.1 667.2,275.6 670.6,276.1 C673.9,276.7 677.2,277.1 680.6,277.7 C683.9,278.3 687.2,278.9 690.6,279.6 C693.9,280.3 698.9,281.6 700.6,282.0" stroke-width="2.3" opacity="0.11"/>
<path d="M733.1,308.0 C734.8,308.5 739.8,309.9 743.1,310.9 C746.4,311.8 749.8,312.8 753.1,313.8 C756.4,314.7 761.4,316.1 763.1,316.6" stroke-width="2.1" opacity="0.06"/>
<path d="M719.8,292.2 C721.4,292.5 726.4,293.5 729.8,294.1 C733.1,294.7 736.4,295.4 739.8,296.0 C743.1,296.6 746.4,297.2 749.8,297.9 C753.1,298.5 756.4,299.1 759.8,299.8 C763.1,300.5 768.1,301.8 769.8,302.2" stroke-width="2.0" opacity="0.17"/>
<path d="M460.3,239.2 C462.0,239.8 467.0,241.4 470.3,242.5 C473.7,243.5 477.0,244.6 480.3,245.6 C483.7,246.7 487.0,247.7 490.3,248.8 C493.7,249.9 497.0,251.0 500.3,252.1 C503.7,253.2 507.0,254.3 510.3,255.5 C513.7,256.7 518.7,258.5 520.3,259.1" stroke-width="1.6" opacity="0.25"/>
<path d="M701.1,234.9 C702.8,235.3 707.8,236.5 711.1,237.4 C714.5,238.3 717.8,239.4 721.1,240.1 C724.5,240.9 727.8,241.4 731.1,241.9 C734.5,242.4 737.8,242.7 741.1,243.2 C744.5,243.7 749.5,244.6 751.1,244.9" stroke-width="2.0" opacity="0.17"/>
<path d="M562.9,215.0 C564.6,215.1 569.6,215.5 572.9,215.9 C576.2,216.2 579.6,216.5 582.9,217.0 C586.2,217.4 589.6,217.9 592.9,218.4 C596.2,219.0 599.6,219.7 602.9,220.3 C606.2,220.9 609.6,221.6 612.9,222.2 C616.2,222.8 619.6,223.4 622.9,223.8 C626.2,224.3 629.6,224.7 632.9,225.0 C636.2,225.4 639.6,225.6 642.9,225.8 C646.2,226.1 649.6,226.3 652.9,226.6 C656.2,226.9 659.6,227.2 662.9,227.6 C666.2,228.1 669.6,228.7 672.9,229.3 C676.2,229.9 679.6,230.7 682.9,231.5 C686.2,232.2 689.6,233.0 692.9,233.7 C696.2,234.3 699.6,235.0 702.9,235.6 C706.2,236.2 709.6,236.6 712.9,237.1 C716.2,237.5 719.6,237.8 722.9,238.2 C726.2,238.6 729.6,238.9 732.9,239.5 C736.2,240.0 741.2,241.3 742.9,241.7" stroke-width="1.6" opacity="0.11"/>
<path d="M325.0,227.1 C326.6,227.9 331.6,230.6 335.0,232.3 C338.3,234.0 341.6,235.7 345.0,237.4 C348.3,239.2 351.6,241.0 355.0,242.8 C358.3,244.7 361.6,246.6 365.0,248.5 C368.3,250.5 371.6,252.6 375.0,254.6 C378.3,256.7 381.6,258.8 385.0,260.9 C388.3,262.9 393.3,266.0 395.0,267.0" stroke-width="2.0" opacity="0.19"/>
<path d="M172.8,171.3 C174.5,171.6 179.5,172.5 182.8,173.5 C186.2,174.5 189.5,175.5 192.8,177.0 C196.2,178.5 199.5,180.4 202.8,182.4 C206.2,184.3 209.5,186.6 212.8,188.6 C216.2,190.6 219.5,192.5 222.8,194.2 C226.2,195.9 229.5,197.2 232.8,198.7 C236.2,200.2 239.5,201.5 242.8,203.2 C246.2,205.0 249.5,207.0 252.8,209.4 C256.2,211.8 259.5,214.7 262.8,217.5 C266.2,220.2 269.5,223.3 272.8,226.0 C276.2,228.7 279.5,231.2 282.8,233.6 C286.2,236.1 289.5,238.1 292.8,240.5 C296.2,242.9 299.5,245.2 302.8,248.0 C306.2,250.9 311.2,256.0 312.8,257.6" stroke-width="1.7" opacity="0.28"/>
<path d="M350.6,220.7 C352.3,221.4 357.3,223.7 360.6,225.0 C363.9,226.4 367.3,227.7 370.6,228.9 C373.9,230.2 377.3,231.4 380.6,232.7 C383.9,233.9 387.3,235.1 390.6,236.4 C393.9,237.7 397.3,239.1 400.6,240.5 C403.9,242.0 408.9,244.3 410.6,245.0" stroke-width="1.5" opacity="0.26"/>
<path d="M469.9,227.2 C471.6,227.8 476.6,229.3 479.9,230.7 C483.3,232.1 486.6,234.1 489.9,235.6 C493.3,237.0 496.6,238.5 499.9,239.4 C503.3,240.3 506.6,240.6 509.9,241.0 C513.3,241.4 516.6,241.4 519.9,242.1 C523.3,242.7 526.6,243.5 529.9,244.7 C533.3,245.9 538.3,248.3 539.9,249.0" stroke-width="1.8" opacity="0.14"/>
<path d="M264.2,185.5 C265.9,186.3 270.9,188.8 274.2,190.5 C277.5,192.1 280.9,193.8 284.2,195.4 C287.5,197.0 290.9,198.6 294.2,200.2 C297.5,201.7 300.9,203.2 304.2,204.7 C307.5,206.3 310.9,207.8 314.2,209.3 C317.5,210.8 320.9,212.3 324.2,213.8 C327.5,215.4 330.9,216.9 334.2,218.6 C337.5,220.2 340.9,221.9 344.2,223.7 C347.5,225.4 350.9,227.3 354.2,229.1 C357.5,231.0 360.9,232.9 364.2,234.8 C367.5,236.7 370.9,238.6 374.2,240.5 C377.5,242.3 380.9,244.2 384.2,245.9 C387.5,247.6 390.9,249.3 394.2,250.8 C397.5,252.4 400.9,253.9 404.2,255.3 C407.5,256.8 412.5,258.7 414.2,259.4" stroke-width="1.4" opacity="0.21"/>
<path d="M208.5,172.6 C210.2,173.1 215.2,174.7 218.5,175.5 C221.9,176.4 225.2,176.7 228.5,177.6 C231.9,178.4 235.2,179.4 238.5,180.8 C241.9,182.3 245.2,184.4 248.5,186.4 C251.9,188.3 255.2,190.7 258.5,192.5 C261.9,194.3 265.2,195.7 268.5,197.1 C271.9,198.4 275.2,199.2 278.5,200.5 C281.9,201.9 285.2,203.2 288.5,205.1 C291.9,207.1 295.2,209.6 298.5,212.0 C301.9,214.5 306.9,218.6 308.5,219.9" stroke-width="1.3" opacity="0.20"/>
<path d="M160.0,200.8 C161.6,202.3 166.6,206.4 170.0,209.5 C173.3,212.7 176.6,216.0 180.0,219.4 C183.3,222.9 186.6,226.5 190.0,230.1 C193.3,233.7 198.3,239.3 200.0,241.1" stroke-width="2.8" opacity="0.23"/>
<path d="M605.6,291.1 C607.3,291.4 612.3,292.3 615.6,292.9 C618.9,293.5 622.3,294.0 625.6,294.6 C628.9,295.3 632.3,296.0 635.6,296.8 C638.9,297.7 642.3,298.6 645.6,299.6 C648.9,300.7 652.3,302.1 655.6,303.4 C658.9,304.6 662.3,306.1 665.6,307.4 C668.9,308.7 672.3,310.0 675.6,311.0 C678.9,312.1 682.3,312.9 685.6,313.6 C688.9,314.3 692.3,314.8 695.6,315.3 C698.9,315.8 702.3,316.1 705.6,316.6 C708.9,317.1 712.3,317.5 715.6,318.1 C718.9,318.8 723.9,320.2 725.6,320.6" stroke-width="1.9" opacity="0.15"/>
<path d="M330.7,187.7 C332.4,188.3 337.4,190.0 340.7,191.3 C344.0,192.5 347.4,193.9 350.7,195.2 C354.0,196.5 357.4,197.9 360.7,199.2 C364.0,200.5 367.4,201.8 370.7,203.1 C374.0,204.3 377.4,205.5 380.7,206.7 C384.0,207.8 387.4,208.8 390.7,209.8 C394.0,210.7 397.4,211.7 400.7,212.5 C404.0,213.4 409.0,214.5 410.7,215.0" stroke-width="2.0" opacity="0.15"/>
<path d="M182.6,211.8 C184.3,213.4 189.3,217.9 192.6,221.3 C195.9,224.8 199.3,228.5 202.6,232.4 C205.9,236.3 210.9,242.8 212.6,244.8" stroke-width="1.4" opacity="0.20"/>
<path d="M555.7,211.6 C557.4,211.8 562.4,212.4 565.7,212.7 C569.0,213.0 572.4,213.3 575.7,213.5 C579.0,213.8 582.4,214.0 585.7,214.3 C589.0,214.6 592.4,214.8 595.7,215.1 C599.0,215.4 602.4,215.7 605.7,216.0 C609.0,216.4 612.4,216.7 615.7,217.1 C619.0,217.6 624.0,218.3 625.7,218.6" stroke-width="1.6" opacity="0.13"/>
<path d="M153.9,201.1 C155.6,202.0 160.6,204.0 163.9,206.6 C167.2,209.1 170.6,212.9 173.9,216.2 C177.2,219.4 180.6,222.4 183.9,225.9 C187.2,229.4 190.6,233.3 193.9,237.3 C197.2,241.3 202.2,247.8 203.9,249.9" stroke-width="1.7" opacity="0.14"/>
<path d="M646.0,271.2 C647.7,271.6 652.7,272.7 656.0,273.4 C659.4,274.0 662.7,274.6 666.0,275.1 C669.4,275.6 672.7,276.0 676.0,276.5 C679.4,277.0 682.7,277.4 686.0,277.8 C689.4,278.3 692.7,278.8 696.0,279.5 C699.4,280.1 702.7,280.9 706.0,281.7 C709.4,282.5 712.7,283.4 716.0,284.3 C719.4,285.2 722.7,286.2 726.0,287.3 C729.4,288.3 732.7,289.4 736.0,290.4 C739.4,291.5 742.7,292.6 746.0,293.5 C749.4,294.5 754.4,295.7 756.0,296.2" stroke-width="2.8" opacity="0.13"/>
<path d="M262.6,177.9 C264.3,178.6 269.3,180.3 272.6,181.8 C275.9,183.2 279.3,185.0 282.6,186.6 C285.9,188.3 289.3,190.2 292.6,191.8 C295.9,193.4 300.9,195.7 302.6,196.4" stroke-width="1.4" opacity="0.25"/>
<path d="M249.9,210.4 C251.5,211.5 256.5,214.8 259.9,217.0 C263.2,219.1 266.5,221.2 269.9,223.4 C273.2,225.6 276.5,227.8 279.9,230.1 C283.2,232.4 286.5,234.7 289.9,237.3 C293.2,239.8 296.5,242.5 299.9,245.4 C303.2,248.3 306.5,251.6 309.9,254.8 C313.2,258.0 318.2,263.1 319.9,264.8" stroke-width="2.0" opacity="0.16"/>
<path d="M299.9,210.8 C301.5,211.8 306.5,214.8 309.9,216.9 C313.2,219.0 316.5,221.2 319.9,223.5 C323.2,225.8 326.5,228.2 329.9,230.5 C333.2,232.9 336.5,235.3 339.9,237.7 C343.2,240.0 346.5,242.3 349.9,244.5 C353.2,246.7 356.5,248.9 359.9,250.9 C363.2,252.8 366.5,254.7 369.9,256.5 C373.2,258.3 376.5,259.9 379.9,261.5 C383.2,263.1 388.2,265.2 389.9,266.0" stroke-width="2.4" opacity="0.21"/>
<path d="M707.5,316.2 C709.2,316.7 714.2,318.0 717.5,318.8 C720.8,319.5 725.8,320.6 727.5,320.9" stroke-width="2.6" opacity="0.11"/>
<path d="M644.5,293.0 C646.2,293.3 651.2,294.2 654.5,295.0 C657.8,295.8 661.2,296.7 664.5,297.7 C667.8,298.7 671.2,299.9 674.5,301.0 C677.8,302.1 681.2,303.2 684.5,304.2 C687.8,305.2 691.2,306.1 694.5,306.9 C697.8,307.7 701.2,308.4 704.5,309.0 C707.8,309.6 711.2,310.0 714.5,310.6 C717.8,311.3 721.2,311.8 724.5,312.6 C727.8,313.4 731.2,314.4 734.5,315.4 C737.8,316.4 741.2,317.6 744.5,318.7 C747.8,319.8 751.2,320.9 754.5,321.9 C757.8,322.9 762.8,324.0 764.5,324.4" stroke-width="2.3" opacity="0.15"/>
<path d="M510.3,271.9 C512.0,272.6 517.0,274.6 520.3,275.8 C523.6,277.0 527.0,278.1 530.3,279.2 C533.6,280.4 537.0,281.4 540.3,282.5 C543.6,283.5 547.0,284.6 550.3,285.6 C553.6,286.7 557.0,287.8 560.3,288.9 C563.6,290.0 567.0,291.1 570.3,292.3 C573.6,293.4 578.6,295.2 580.3,295.7" stroke-width="2.5" opacity="0.16"/>
<path d="M637.8,242.1 C639.5,242.3 644.5,243.1 647.8,243.4 C651.1,243.7 654.5,243.9 657.8,244.2 C661.1,244.5 664.5,244.8 667.8,245.4 C671.1,246.0 674.5,246.8 677.8,247.6 C681.1,248.4 684.5,249.4 687.8,250.2 C691.1,251.1 694.5,251.9 697.8,252.6 C701.1,253.2 704.5,253.7 707.8,254.2 C711.1,254.6 714.5,254.9 717.8,255.3 C721.1,255.7 724.5,256.1 727.8,256.7 C731.1,257.4 734.5,258.3 737.8,259.3 C741.1,260.3 744.5,261.5 747.8,262.5 C751.1,263.5 754.5,264.5 757.8,265.4 C761.1,266.3 766.1,267.5 767.8,267.9" stroke-width="2.3" opacity="0.17"/>
<path d="M625.6,249.1 C627.3,249.4 632.3,250.6 635.6,251.3 C639.0,252.0 642.3,252.7 645.6,253.3 C649.0,254.0 652.3,254.6 655.6,255.1 C659.0,255.7 662.3,256.2 665.6,256.7 C669.0,257.3 672.3,257.8 675.6,258.3 C679.0,258.9 682.3,259.4 685.6,260.0 C689.0,260.6 692.3,261.2 695.6,261.9 C699.0,262.6 702.3,263.5 705.6,264.3 C709.0,265.1 712.3,265.9 715.6,266.7 C719.0,267.5 722.3,268.2 725.6,269.0 C729.0,269.8 732.3,270.5 735.6,271.3 C739.0,272.0 742.3,272.8 745.6,273.5 C749.0,274.3 752.3,274.9 755.6,275.6 C759.0,276.4 764.0,277.6 765.6,278.0" stroke-width="1.9" opacity="0.17"/>
<path d="M732.0,313.4 C733.7,313.7 738.7,314.4 742.0,315.2 C745.3,316.0 748.7,316.9 752.0,317.9 C755.3,319.0 760.3,320.9 762.0,321.5" stroke-width="1.6" opacity="0.15"/>
<path d="M302.3,199.8 C304.0,200.7 309.0,203.1 312.3,204.8 C315.7,206.6 319.0,208.4 322.3,210.2 C325.7,212.0 329.0,213.9 332.3,215.7 C335.7,217.6 339.0,219.5 342.3,221.3 C345.7,223.1 349.0,225.0 352.3,226.8 C355.7,228.6 359.0,230.3 362.3,232.0 C365.7,233.7 370.7,236.0 372.3,236.8" stroke-width="1.5" opacity="0.18"/>
<path d="M637.3,291.4 C638.9,291.8 643.9,293.0 647.3,293.8 C650.6,294.7 653.9,295.6 657.3,296.5 C660.6,297.5 663.9,298.5 667.3,299.6 C670.6,300.6 673.9,301.7 677.3,302.8 C680.6,303.8 683.9,304.9 687.3,305.9 C690.6,307.0 693.9,308.0 697.3,309.0 C700.6,309.9 703.9,310.9 707.3,311.8 C710.6,312.6 713.9,313.4 717.3,314.1 C720.6,314.8 723.9,315.4 727.3,316.1 C730.6,316.7 733.9,317.4 737.3,318.0 C740.6,318.6 743.9,319.2 747.3,319.9 C750.6,320.6 753.9,321.2 757.3,322.0 C760.6,322.7 765.6,323.9 767.3,324.3" stroke-width="1.7" opacity="0.18"/>
<path d="M396.0,206.2 C397.7,206.6 402.7,207.9 406.0,208.7 C409.4,209.6 412.7,210.4 416.0,211.3 C419.4,212.2 422.7,213.1 426.0,214.0 C429.4,215.0 432.7,216.1 436.0,217.2 C439.4,218.4 442.7,219.6 446.0,220.8 C449.4,222.0 452.7,223.2 456.0,224.4 C459.4,225.6 462.7,226.8 466.0,228.0 C469.4,229.1 472.7,230.3 476.0,231.4 C479.4,232.5 482.7,233.6 486.0,234.7 C489.4,235.7 492.7,236.7 496.0,237.7 C499.4,238.7 502.7,239.6 506.0,240.5 C509.4,241.4 512.7,242.2 516.0,243.0 C519.4,243.9 522.7,244.6 526.0,245.4 C529.4,246.1 532.7,246.8 536.0,247.6 C539.4,248.4 542.7,249.2 546.0,250.0 C549.4,250.8 552.7,251.6 556.0,252.4 C559.4,253.3 564.4,254.6 566.0,255.1" stroke-width="2.1" opacity="0.23"/>
<path d="M360.8,188.6 C362.5,189.0 367.5,190.2 370.8,190.9 C374.1,191.6 377.5,192.2 380.8,192.8 C384.1,193.4 387.5,194.0 390.8,194.8 C394.1,195.5 397.5,196.4 400.8,197.3 C404.1,198.2 407.5,199.3 410.8,200.3 C414.1,201.3 417.5,202.3 420.8,203.2 C424.1,204.1 427.5,205.0 430.8,205.9 C434.1,206.7 439.1,207.8 440.8,208.2" stroke-width="2.0" opacity="0.19"/>
<path d="M533.9,209.1 C535.6,209.4 540.6,210.0 543.9,210.4 C547.2,210.9 550.6,211.3 553.9,211.8 C557.2,212.3 560.6,212.9 563.9,213.5 C567.2,214.0 570.6,214.6 573.9,215.1 C577.2,215.7 580.6,216.2 583.9,216.8 C587.2,217.3 590.6,217.8 593.9,218.3 C597.2,218.8 600.6,219.2 603.9,219.6 C607.2,220.1 610.6,220.4 613.9,220.8 C617.2,221.1 620.6,221.5 623.9,221.9 C627.2,222.2 630.6,222.6 633.9,222.9 C637.2,223.3 640.6,223.7 643.9,224.1 C647.2,224.5 650.6,224.9 653.9,225.3 C657.2,225.8 660.6,226.2 663.9,226.7 C667.2,227.2 670.6,227.8 673.9,228.3 C677.2,228.9 682.2,229.8 683.9,230.1" stroke-width="1.5" opacity="0.07"/>
<path d="M177.6,213.5 C179.3,215.2 184.3,220.3 187.6,223.7 C191.0,227.1 194.3,230.4 197.6,233.9 C201.0,237.4 206.0,242.8 207.6,244.6" stroke-width="1.2" opacity="0.26"/>
<path d="M246.6,195.3 C248.3,196.4 253.3,199.3 256.6,201.5 C260.0,203.7 263.3,206.2 266.6,208.6 C270.0,211.0 273.3,213.5 276.6,215.9 C280.0,218.2 283.3,220.6 286.6,222.8 C290.0,225.1 293.3,227.2 296.6,229.4 C300.0,231.6 303.3,233.7 306.6,235.9 C310.0,238.2 313.3,240.5 316.6,242.9 C320.0,245.4 323.3,248.0 326.6,250.8 C330.0,253.5 335.0,258.0 336.6,259.5" stroke-width="2.3" opacity="0.10"/>
<path d="M733.5,248.4 C735.2,248.8 740.2,250.0 743.5,250.7 C746.9,251.5 750.2,252.1 753.5,252.9 C756.9,253.6 761.9,254.8 763.5,255.2" stroke-width="2.4" opacity="0.11"/>
<path d="M189.3,187.8 C190.9,188.7 195.9,191.4 199.3,193.4 C202.6,195.3 205.9,197.3 209.3,199.3 C212.6,201.3 215.9,203.2 219.3,205.4 C222.6,207.5 225.9,209.8 229.3,212.2 C232.6,214.6 235.9,217.0 239.3,219.7 C242.6,222.3 245.9,225.1 249.3,228.0 C252.6,230.8 255.9,233.8 259.3,236.9 C262.6,239.9 265.9,243.1 269.3,246.3 C272.6,249.5 277.6,254.4 279.3,256.0" stroke-width="2.0" opacity="0.16"/>
<path d="M616.9,235.2 C618.5,235.5 623.5,236.4 626.9,237.0 C630.2,237.6 633.5,238.2 636.9,238.9 C640.2,239.5 643.5,240.1 646.9,240.8 C650.2,241.4 653.5,242.1 656.9,242.7 C660.2,243.4 663.5,244.0 666.9,244.6 C670.2,245.3 673.5,245.9 676.9,246.5 C680.2,247.2 683.5,247.7 686.9,248.3 C690.2,248.9 693.5,249.4 696.9,249.9 C700.2,250.5 705.2,251.3 706.9,251.6" stroke-width="3.0" opacity="0.07"/>
<path d="M479.7,221.4 C481.4,221.8 486.4,223.1 489.7,224.2 C493.1,225.3 496.4,226.8 499.7,228.0 C503.1,229.2 506.4,230.5 509.7,231.3 C513.1,232.2 516.4,232.8 519.7,233.2 C523.1,233.7 526.4,233.6 529.7,234.1 C533.1,234.5 536.4,234.9 539.7,235.7 C543.1,236.4 546.4,237.6 549.7,238.7 C553.1,239.8 556.4,241.1 559.7,242.1 C563.1,243.0 566.4,243.8 569.7,244.3 C573.1,244.9 576.4,244.9 579.7,245.3 C583.1,245.6 586.4,245.7 589.7,246.3 C593.1,246.9 598.1,248.3 599.7,248.7" stroke-width="2.8" opacity="0.12"/>
<path d="M404.4,227.4 C406.1,228.0 411.1,229.6 414.4,230.7 C417.7,231.9 421.1,232.9 424.4,234.1 C427.7,235.3 431.1,236.6 434.4,237.9 C437.7,239.1 441.1,240.4 444.4,241.8 C447.7,243.1 451.1,244.6 454.4,246.0 C457.7,247.3 461.1,248.7 464.4,250.1 C467.7,251.5 471.1,252.9 474.4,254.3 C477.7,255.6 481.1,257.0 484.4,258.3 C487.7,259.7 491.1,261.0 494.4,262.3 C497.7,263.6 502.7,265.5 504.4,266.1" stroke-width="1.9" opacity="0.12"/>
<path d="M226.8,174.6 C228.4,175.3 233.4,177.1 236.8,178.5 C240.1,179.8 243.4,181.2 246.8,182.7 C250.1,184.1 253.4,185.6 256.8,187.2 C260.1,188.7 263.4,190.3 266.8,191.9 C270.1,193.5 273.4,195.1 276.8,196.7 C280.1,198.4 283.4,200.0 286.8,201.8 C290.1,203.5 293.4,205.2 296.8,206.9 C300.1,208.7 303.4,210.6 306.8,212.4 C310.1,214.3 313.4,216.2 316.8,218.1 C320.1,220.0 323.4,222.0 326.8,223.9 C330.1,225.9 335.1,228.9 336.8,229.9" stroke-width="1.9" opacity="0.29"/>
<path d="M660.9,244.9 C662.6,244.8 667.6,244.4 670.9,244.7 C674.2,245.0 677.6,245.8 680.9,246.8 C684.2,247.8 687.6,249.6 690.9,250.7 C694.2,251.9 697.6,253.1 700.9,253.7 C704.2,254.2 707.6,254.1 710.9,254.2 C714.2,254.3 717.6,253.8 720.9,254.2 C724.2,254.5 727.6,255.2 730.9,256.2 C734.2,257.3 737.6,259.3 740.9,260.7 C744.2,262.0 747.6,263.4 750.9,264.2 C754.2,265.0 757.6,265.0 760.9,265.4 C764.2,265.7 769.2,266.2 770.9,266.3" stroke-width="2.5" opacity="0.18"/>
<path d="M208.3,192.3 C210.0,193.1 215.0,195.3 218.3,197.3 C221.6,199.4 225.0,202.0 228.3,204.6 C231.6,207.2 235.0,210.3 238.3,213.1 C241.6,215.8 245.0,218.7 248.3,221.2 C251.6,223.7 255.0,225.8 258.3,228.0 C261.6,230.2 266.6,233.4 268.3,234.5" stroke-width="2.4" opacity="0.20"/>
<path d="M569.3,213.5 C571.0,213.7 576.0,214.2 579.3,214.5 C582.7,214.9 586.0,215.2 589.3,215.6 C592.7,216.0 596.0,216.3 599.3,216.7 C602.7,217.1 606.0,217.5 609.3,217.9 C612.7,218.3 616.0,218.8 619.3,219.3 C622.7,219.7 626.0,220.3 629.3,220.8 C632.7,221.4 636.0,221.9 639.3,222.5 C642.7,223.1 646.0,223.7 649.3,224.3 C652.7,224.8 656.0,225.4 659.3,225.9 C662.7,226.5 666.0,227.0 669.3,227.5 C672.7,228.0 676.0,228.6 679.3,229.1 C682.7,229.6 686.0,230.0 689.3,230.5 C692.7,230.9 696.0,231.3 699.3,231.7 C702.7,232.2 707.7,232.8 709.3,233.1" stroke-width="2.2" opacity="0.17"/>
<path d="M684.6,247.0 C686.3,247.2 691.3,247.9 694.6,248.2 C697.9,248.6 701.3,248.9 704.6,249.2 C707.9,249.6 711.3,249.9 714.6,250.5 C717.9,251.0 721.3,251.6 724.6,252.3 C727.9,253.1 731.3,254.1 734.6,255.1 C737.9,256.1 741.3,257.3 744.6,258.4 C747.9,259.4 751.3,260.4 754.6,261.2 C757.9,262.1 762.9,263.2 764.6,263.7" stroke-width="2.3" opacity="0.18"/>
<path d="M312.2,184.5 C313.9,184.9 318.9,186.1 322.2,186.8 C325.5,187.5 328.9,188.0 332.2,188.7 C335.5,189.5 338.9,190.4 342.2,191.5 C345.5,192.7 348.9,194.1 352.2,195.6 C355.5,197.0 358.9,198.8 362.2,200.2 C365.5,201.6 370.5,203.4 372.2,204.1" stroke-width="2.4" opacity="0.26"/>
<path d="M659.6,259.5 C661.3,259.7 666.3,260.1 669.6,260.6 C673.0,261.1 676.3,261.7 679.6,262.4 C683.0,263.2 686.3,264.2 689.6,265.1 C693.0,266.1 696.3,267.2 699.6,268.1 C703.0,269.0 706.3,269.8 709.6,270.4 C713.0,271.1 716.3,271.4 719.6,271.8 C723.0,272.3 728.0,272.8 729.6,273.0" stroke-width="1.3" opacity="0.12"/>
<path d="M544.2,237.8 C545.9,237.9 550.9,238.2 554.2,238.7 C557.6,239.2 560.9,239.8 564.2,240.6 C567.6,241.5 570.9,242.6 574.2,243.7 C577.6,244.8 580.9,246.2 584.2,247.3 C587.6,248.4 590.9,249.5 594.2,250.3 C597.6,251.1 600.9,251.6 604.2,252.0 C607.6,252.4 610.9,252.4 614.2,252.6 C617.6,252.8 620.9,252.9 624.2,253.2 C627.6,253.6 630.9,254.1 634.2,254.8 C637.6,255.5 640.9,256.5 644.2,257.5 C647.6,258.5 650.9,259.9 654.2,261.0 C657.6,262.1 660.9,263.3 664.2,264.1 C667.6,265.0 670.9,265.7 674.2,266.1 C677.6,266.6 682.6,266.8 684.2,267.0" stroke-width="2.4" opacity="0.10"/>
<path d="M330.9,204.3 C332.6,205.1 337.6,207.5 340.9,209.0 C344.3,210.6 347.6,212.2 350.9,213.8 C354.3,215.4 357.6,217.0 360.9,218.5 C364.3,220.0 367.6,221.4 370.9,222.8 C374.3,224.2 377.6,225.6 380.9,226.8 C384.3,228.1 387.6,229.3 390.9,230.4 C394.3,231.6 397.6,232.8 400.9,233.9 C404.3,235.1 407.6,236.2 410.9,237.3 C414.3,238.5 417.6,239.6 420.9,240.8 C424.3,241.9 427.6,243.2 430.9,244.4 C434.3,245.7 437.6,247.0 440.9,248.3 C444.3,249.7 447.6,251.2 450.9,252.7 C454.3,254.2 457.6,255.6 460.9,257.1 C464.3,258.6 467.6,260.2 470.9,261.8 C474.3,263.3 477.6,264.9 480.9,266.4 C484.3,267.9 489.3,270.1 490.9,270.8" stroke-width="1.9" opacity="0.18"/>
<path d="M506.3,238.1 C508.0,238.6 513.0,240.0 516.3,240.9 C519.6,241.9 523.0,243.0 526.3,244.0 C529.6,245.0 533.0,246.0 536.3,246.9 C539.6,247.8 543.0,248.7 546.3,249.4 C549.6,250.2 553.0,250.8 556.3,251.4 C559.6,252.1 563.0,252.7 566.3,253.3 C569.6,254.0 573.0,254.7 576.3,255.5 C579.6,256.4 583.0,257.3 586.3,258.2 C589.6,259.2 593.0,260.2 596.3,261.1 C599.6,262.0 603.0,262.9 606.3,263.7 C609.6,264.5 613.0,265.1 616.3,265.7 C619.6,266.4 623.0,266.9 626.3,267.5 C629.6,268.1 633.0,268.7 636.3,269.3 C639.6,270.0 643.0,270.7 646.3,271.5 C649.6,272.3 653.0,273.3 656.3,274.2 C659.6,275.1 663.0,276.1 666.3,277.0 C669.6,277.9 674.6,279.0 676.3,279.4" stroke-width="2.9" opacity="0.17"/>
<path d="M176.3,213.7 C178.0,215.4 183.0,220.5 186.3,224.2 C189.6,227.9 193.0,231.7 196.3,235.6 C199.6,239.6 204.6,245.7 206.3,247.8" stroke-width="2.4" opacity="0.12"/>
<path d="M739.0,265.0 C740.6,265.2 745.6,266.2 749.0,266.7 C752.3,267.2 755.6,267.6 759.0,268.2 C762.3,268.8 767.3,270.1 769.0,270.4" stroke-width="1.6" opacity="0.08"/>
<path d="M346.2,244.7 C347.8,245.9 352.8,249.4 356.2,251.7 C359.5,254.0 362.8,256.2 366.2,258.3 C369.5,260.4 372.8,262.3 376.2,264.2 C379.5,266.0 384.5,268.4 386.2,269.2" stroke-width="2.8" opacity="0.25"/>
<path d="M343.8,228.2 C345.5,229.0 350.5,231.4 353.8,233.1 C357.2,234.7 360.5,236.3 363.8,237.9 C367.2,239.6 370.5,241.2 373.8,242.9 C377.2,244.7 380.5,246.5 383.8,248.2 C387.2,249.9 390.5,251.6 393.8,253.3 C397.2,254.9 400.5,256.5 403.8,258.1 C407.2,259.6 410.5,261.0 413.8,262.5 C417.2,263.9 420.5,265.3 423.8,266.7 C427.2,268.1 432.2,270.4 433.8,271.1" stroke-width="3.0" opacity="0.15"/>
<path d="M529.9,279.9 C531.6,280.6 536.6,282.7 539.9,283.9 C543.2,285.2 546.6,286.4 549.9,287.5 C553.2,288.6 556.6,289.5 559.9,290.5 C563.2,291.4 566.6,292.2 569.9,293.1 C573.2,293.9 578.2,295.1 579.9,295.5" stroke-width="2.6" opacity="0.12"/>
<path d="M567.3,256.8 C569.0,257.3 574.0,258.8 577.3,259.8 C580.6,260.9 584.0,261.9 587.3,263.0 C590.6,264.0 594.0,265.0 597.3,266.0 C600.6,266.9 604.0,267.9 607.3,268.7 C610.6,269.6 614.0,270.4 617.3,271.2 C620.6,272.0 624.0,272.7 627.3,273.4 C630.6,274.1 634.0,274.8 637.3,275.4 C640.6,275.9 644.0,276.4 647.3,276.9 C650.6,277.4 654.0,277.9 657.3,278.4 C660.6,279.0 664.0,279.5 667.3,280.1 C670.6,280.8 674.0,281.4 677.3,282.2 C680.6,282.9 684.0,283.7 687.3,284.6 C690.6,285.4 694.0,286.3 697.3,287.3 C700.6,288.3 704.0,289.4 707.3,290.4 C710.6,291.4 715.6,292.9 717.3,293.5" stroke-width="2.2" opacity="0.17"/>
<path d="M555.3,280.7 C557.0,281.2 562.0,282.9 565.3,284.1 C568.7,285.3 572.0,286.5 575.3,287.8 C578.7,289.0 582.0,290.2 585.3,291.4 C588.7,292.6 592.0,293.8 595.3,294.9 C598.7,296.1 602.0,297.2 605.3,298.2 C608.7,299.2 613.7,300.6 615.3,301.1" stroke-width="2.4" opacity="0.18"/>
<path d="M338.0,226.9 C339.7,227.8 344.7,230.4 348.0,232.3 C351.3,234.1 354.7,236.2 358.0,238.2 C361.3,240.2 364.7,242.3 368.0,244.3 C371.3,246.2 374.7,248.2 378.0,249.9 C381.3,251.6 384.7,253.0 388.0,254.4 C391.3,255.9 394.7,257.1 398.0,258.5 C401.3,259.9 404.7,261.2 408.0,262.7 C411.3,264.2 416.3,266.8 418.0,267.6" stroke-width="2.1" opacity="0.30"/>
<path d="M384.5,202.6 C386.2,203.0 391.2,204.1 394.5,204.8 C397.8,205.5 401.2,206.0 404.5,206.8 C407.8,207.6 411.2,208.5 414.5,209.6 C417.8,210.6 421.2,211.9 424.5,213.1 C427.8,214.3 431.2,215.7 434.5,216.8 C437.8,217.9 441.2,218.8 444.5,219.8 C447.8,220.7 451.2,221.4 454.5,222.4 C457.8,223.3 461.2,224.2 464.5,225.3 C467.8,226.5 471.2,227.8 474.5,229.1 C477.8,230.4 481.2,231.8 484.5,232.9 C487.8,234.1 491.2,235.0 494.5,235.9 C497.8,236.7 501.2,237.3 504.5,238.0 C507.8,238.7 511.2,239.3 514.5,240.2 C517.8,241.1 521.2,242.2 524.5,243.2 C527.8,244.2 532.8,245.9 534.5,246.4" stroke-width="1.9" opacity="0.22"/>
<path d="M607.7,235.7 C609.3,236.1 614.3,237.4 617.7,237.9 C621.0,238.3 624.3,238.4 627.7,238.5 C631.0,238.6 634.3,238.4 637.7,238.6 C641.0,238.8 644.3,239.1 647.7,239.8 C651.0,240.5 654.3,241.7 657.7,242.7 C661.0,243.7 664.3,245.0 667.7,245.8 C671.0,246.7 674.3,247.4 677.7,247.8 C681.0,248.2 684.3,248.0 687.7,248.2 C691.0,248.3 694.3,248.1 697.7,248.5 C701.0,248.9 704.3,249.7 707.7,250.6 C711.0,251.5 714.3,252.9 717.7,254.0 C721.0,255.1 724.3,256.4 727.7,257.3 C731.0,258.1 734.3,258.7 737.7,259.2 C741.0,259.6 744.3,259.6 747.7,259.9 C751.0,260.3 754.3,260.4 757.7,261.2 C761.0,261.9 766.0,264.0 767.7,264.5" stroke-width="1.9" opacity="0.14"/>
<path d="M213.0,173.5 C214.6,174.0 219.6,175.2 223.0,176.6 C226.3,178.0 229.6,180.0 233.0,181.9 C236.3,183.8 239.6,186.1 243.0,187.8 C246.3,189.5 249.6,191.0 253.0,192.3 C256.3,193.6 259.6,194.4 263.0,195.6 C266.3,196.9 269.6,198.0 273.0,199.7 C276.3,201.4 281.3,205.0 283.0,206.0" stroke-width="1.8" opacity="0.23"/>
<path d="M301.8,244.4 C303.4,245.9 308.4,250.5 311.8,253.4 C315.1,256.3 320.1,260.6 321.8,262.0" stroke-width="2.9" opacity="0.24"/>
<path d="M442.9,265.2 C444.5,265.9 449.5,268.1 452.9,269.6 C456.2,271.1 461.2,273.4 462.9,274.2" stroke-width="1.6" opacity="0.11"/>
<path d="M214.6,185.9 C216.2,186.8 221.2,189.7 224.6,191.6 C227.9,193.4 231.2,195.2 234.6,196.9 C237.9,198.6 241.2,200.3 244.6,201.9 C247.9,203.6 251.2,205.1 254.6,206.8 C257.9,208.6 261.2,210.3 264.6,212.3 C267.9,214.2 272.9,217.6 274.6,218.6" stroke-width="2.5" opacity="0.12"/>
<path d="M456.4,214.7 C458.0,215.3 463.0,217.1 466.4,218.3 C469.7,219.5 473.0,220.8 476.4,221.9 C479.7,223.0 483.0,224.2 486.4,225.2 C489.7,226.2 493.0,227.1 496.4,227.9 C499.7,228.8 503.0,229.5 506.4,230.1 C509.7,230.8 513.0,231.3 516.4,231.9 C519.7,232.4 523.0,232.9 526.4,233.4 C529.7,233.9 533.0,234.3 536.4,234.9 C539.7,235.5 543.0,236.2 546.4,236.9 C549.7,237.7 553.0,238.5 556.4,239.4 C559.7,240.2 563.0,241.2 566.4,242.2 C569.7,243.2 573.0,244.2 576.4,245.1 C579.7,246.1 583.0,247.0 586.4,247.8 C589.7,248.6 594.7,249.7 596.4,250.0" stroke-width="2.1" opacity="0.20"/>
<path d="M270.6,179.1 C272.3,179.9 277.3,182.1 280.6,183.8 C284.0,185.4 287.3,187.2 290.6,188.8 C294.0,190.4 297.3,191.9 300.6,193.2 C304.0,194.6 307.3,195.7 310.6,196.9 C314.0,198.0 317.3,199.0 320.6,200.2 C324.0,201.5 329.0,203.6 330.6,204.3" stroke-width="2.6" opacity="0.18"/>
<path d="M733.3,284.0 C735.0,284.3 740.0,285.6 743.3,286.2 C746.6,286.9 750.0,287.5 753.3,288.1 C756.6,288.7 761.6,289.6 763.3,289.9" stroke-width="2.7" opacity="0.12"/>
<path d="M703.9,311.2 C705.5,311.6 710.5,312.9 713.9,313.8 C717.2,314.8 720.5,315.7 723.9,316.7 C727.2,317.7 730.5,318.8 733.9,319.8 C737.2,320.9 742.2,322.5 743.9,323.1" stroke-width="2.4" opacity="0.06"/>
<path d="M545.9,266.4 C547.6,267.0 552.6,268.6 555.9,269.8 C559.2,270.9 562.6,272.0 565.9,273.1 C569.2,274.1 572.6,275.1 575.9,276.0 C579.2,277.0 582.6,277.8 585.9,278.6 C589.2,279.4 592.6,280.1 595.9,280.9 C599.2,281.7 602.6,282.4 605.9,283.2 C609.2,284.0 612.6,284.8 615.9,285.7 C619.2,286.7 622.6,287.7 625.9,288.8 C629.2,289.8 632.6,291.0 635.9,292.1 C639.2,293.1 642.6,294.1 645.9,295.0 C649.2,296.0 654.2,297.3 655.9,297.7" stroke-width="1.9" opacity="0.07"/>
<path d="M503.3,220.8 C505.0,221.2 510.0,222.4 513.3,223.1 C516.6,223.9 520.0,224.7 523.3,225.3 C526.6,226.0 530.0,226.6 533.3,227.2 C536.6,227.8 540.0,228.4 543.3,229.0 C546.6,229.6 550.0,230.1 553.3,230.7 C556.6,231.2 560.0,231.8 563.3,232.3 C566.6,232.9 570.0,233.5 573.3,234.0 C576.6,234.6 580.0,235.2 583.3,235.8 C586.6,236.4 590.0,237.0 593.3,237.6 C596.6,238.3 600.0,238.9 603.3,239.5 C606.6,240.2 610.0,240.8 613.3,241.4 C616.6,242.1 620.0,242.8 623.3,243.5 C626.6,244.2 630.0,244.9 633.3,245.5 C636.6,246.1 640.0,246.7 643.3,247.3 C646.6,247.9 650.0,248.4 653.3,249.0 C656.6,249.5 660.0,250.0 663.3,250.5 C666.6,251.0 670.0,251.5 673.3,252.0 C676.6,252.6 680.0,253.1 683.3,253.6 C686.6,254.2 691.6,255.1 693.3,255.4" stroke-width="1.8" opacity="0.11"/>
<path d="M261.0,201.0 C263.3,203.8 270.0,213.0 275.0,218.0 C280.0,223.0 285.5,227.5 291.0,231.0 C296.5,234.5 302.5,236.7 308.0,239.0 C313.5,241.3 317.5,242.8 324.0,245.0 C330.5,247.2 339.3,250.0 347.0,252.0 C354.7,254.0 366.2,256.2 370.0,257.0" stroke-width="3.2" opacity="0.3"/>
<path d="M243.0,206.0 C245.5,209.0 252.5,218.7 258.0,224.0 C263.5,229.3 269.0,233.8 276.0,238.0 C283.0,242.2 291.0,245.8 300.0,249.0 C309.0,252.2 321.3,255.0 330.0,257.0 C338.7,259.0 348.3,260.3 352.0,261.0" stroke-width="3.2" opacity="0.3"/>
<path d="M228.0,212.0 C230.3,214.8 236.3,223.8 242.0,229.0 C247.7,234.2 254.8,239.2 262.0,243.0 C269.2,246.8 277.0,249.5 285.0,252.0 C293.0,254.5 305.8,257.0 310.0,258.0" stroke-width="3.2" opacity="0.3"/>
<path d="M205.0,222.0 C207.8,224.3 215.3,231.7 222.0,236.0 C228.7,240.3 237.0,244.8 245.0,248.0 C253.0,251.2 265.8,253.8 270.0,255.0" stroke-width="3.2" opacity="0.3"/>
<path d="M300.0,196.0 C305.0,197.3 319.7,201.3 330.0,204.0 C340.3,206.7 351.2,209.7 362.0,212.0 C372.8,214.3 385.3,216.3 395.0,218.0 C404.7,219.7 415.8,221.3 420.0,222.0" stroke-width="3.2" opacity="0.3"/>
<path d="M310.0,190.0 C315.8,190.8 333.3,193.3 345.0,195.0 C356.7,196.7 369.2,198.2 380.0,200.0 C390.8,201.8 405.0,205.0 410.0,206.0" stroke-width="3.2" opacity="0.3"/>
<path d="M457.0,229.0 C460.8,230.5 472.0,234.5 480.0,238.0 C488.0,241.5 496.7,246.0 505.0,250.0 C513.3,254.0 522.5,258.5 530.0,262.0 C537.5,265.5 543.8,268.2 550.0,271.0 C556.2,273.8 564.2,277.7 567.0,279.0" stroke-width="3.2" opacity="0.3"/>
<path d="M470.0,225.0 C475.0,225.5 490.0,226.8 500.0,228.0 C510.0,229.2 520.0,230.3 530.0,232.0 C540.0,233.7 550.0,236.2 560.0,238.0 C570.0,239.8 585.0,242.2 590.0,243.0" stroke-width="3.2" opacity="0.3"/>
<path d="M395.0,243.0 C397.5,244.2 404.5,247.5 410.0,250.0 C415.5,252.5 422.2,255.3 428.0,258.0 C433.8,260.7 439.3,263.7 445.0,266.0 C450.7,268.3 459.2,271.0 462.0,272.0" stroke-width="3.2" opacity="0.3"/>
<path d="M560.0,262.0 C564.2,263.3 576.7,266.8 585.0,270.0 C593.3,273.2 602.8,277.3 610.0,281.0 C617.2,284.7 623.0,288.7 628.0,292.0 C633.0,295.3 638.0,299.5 640.0,301.0" stroke-width="3.2" opacity="0.3"/>
<path d="M600.0,272.0 C604.2,273.7 617.0,278.0 625.0,282.0 C633.0,286.0 642.2,292.0 648.0,296.0 C653.8,300.0 658.0,304.3 660.0,306.0" stroke-width="3.2" opacity="0.3"/>
<path d="M570.0,285.0 C573.3,285.8 583.0,287.8 590.0,290.0 C597.0,292.2 608.3,296.7 612.0,298.0" stroke-width="3.2" opacity="0.3"/>
<path d="M561.0,272.0 C562.2,273.0 565.8,275.7 568.0,278.0 C570.2,280.3 572.0,283.3 574.0,286.0 C576.0,288.7 579.0,292.7 580.0,294.0" stroke-width="3.2" opacity="0.3"/>
<path d="M597.0,281.0 C598.5,282.0 603.5,284.8 606.0,287.0 C608.5,289.2 610.2,291.7 612.0,294.0 C613.8,296.3 616.2,299.8 617.0,301.0" stroke-width="3.2" opacity="0.3"/>
<path d="M622.0,287.0 C624.0,287.5 630.0,288.5 634.0,290.0 C638.0,291.5 642.7,293.8 646.0,296.0 C649.3,298.2 652.7,301.8 654.0,303.0" stroke-width="3.2" opacity="0.3"/>
<path d="M585.0,283.0 C586.2,284.2 590.2,287.7 592.0,290.0 C593.8,292.3 595.3,295.8 596.0,297.0" stroke-width="3.2" opacity="0.3"/>
<path d="M640.0,262.0 C645.0,263.0 660.0,266.7 670.0,268.0 C680.0,269.3 690.8,270.0 700.0,270.0 C709.2,270.0 720.8,268.3 725.0,268.0" stroke-width="3.2" opacity="0.3"/>
<path d="M610.0,232.0 C615.0,233.0 630.0,235.5 640.0,238.0 C650.0,240.5 660.0,244.7 670.0,247.0 C680.0,249.3 695.0,251.2 700.0,252.0" stroke-width="3.2" opacity="0.3"/>
    </g>
    <rect x="150" y="170" width="640" height="180" filter="url(#mottle)" opacity="0.5"/>
    <g fill="none" stroke="#ecd0b0" stroke-linecap="round" filter="url(#blur04)">
<path d="M607.6,217.5 C608.6,217.6 611.6,218.0 613.6,218.2 C615.6,218.4 617.6,218.6 619.6,218.7 C621.6,218.9 623.6,219.0 625.6,219.0 C627.6,219.1 629.6,219.1 631.6,219.2 C633.6,219.2 635.6,219.3 637.6,219.3 C639.6,219.3 642.6,219.4 643.6,219.4" stroke-width="0.6" opacity="0.16"/>
<path d="M631.6,259.4 C632.6,259.6 635.6,260.1 637.6,260.4 C639.6,260.7 641.6,260.8 643.6,261.0 C645.6,261.2 647.6,261.4 649.6,261.6 C651.6,261.8 653.6,262.1 655.6,262.4 C657.6,262.7 659.6,263.1 661.6,263.6 C663.6,264.1 665.6,264.6 667.6,265.2 C669.6,265.8 671.6,266.4 673.6,267.1 C675.6,267.7 677.6,268.3 679.6,268.9 C681.6,269.4 683.6,270.0 685.6,270.4 C687.6,270.9 689.6,271.3 691.6,271.6 C693.6,271.9 695.6,272.1 697.6,272.4 C699.6,272.6 701.6,272.8 703.6,273.1 C705.6,273.3 707.6,273.6 709.6,273.9 C711.6,274.2 713.6,274.5 715.6,274.9 C717.6,275.3 719.6,275.8 721.6,276.4 C723.6,276.9 725.6,277.5 727.6,278.1 C729.6,278.8 731.6,279.4 733.6,280.1 C735.6,280.8 738.6,281.7 739.6,282.1" stroke-width="0.8" opacity="0.24"/>
<path d="M614.4,278.3 C615.4,278.6 618.4,279.5 620.4,280.1 C622.4,280.7 624.4,281.3 626.4,281.9 C628.4,282.6 630.4,283.2 632.4,283.8 C634.4,284.5 636.4,285.1 638.4,285.7 C640.4,286.3 642.4,286.9 644.4,287.5 C646.4,288.1 648.4,288.6 650.4,289.2 C652.4,289.7 654.4,290.3 656.4,290.8 C658.4,291.3 660.4,291.8 662.4,292.3 C664.4,292.8 666.4,293.3 668.4,293.7 C670.4,294.2 672.4,294.6 674.4,295.0 C676.4,295.4 678.4,295.8 680.4,296.2 C682.4,296.6 684.4,296.9 686.4,297.3 C688.4,297.7 690.4,298.0 692.4,298.4 C694.4,298.8 696.4,299.2 698.4,299.6 C700.4,300.0 702.4,300.5 704.4,300.9 C706.4,301.4 709.4,302.1 710.4,302.3" stroke-width="0.6" opacity="0.34"/>
<path d="M582.2,225.8 C583.2,225.9 586.2,226.6 588.2,226.8 C590.2,227.0 592.2,227.0 594.2,227.1 C596.2,227.2 598.2,227.1 600.2,227.1 C602.2,227.2 604.2,227.2 606.2,227.5 C608.2,227.7 610.2,228.1 612.2,228.6 C614.2,229.1 616.2,229.7 618.2,230.3 C620.2,230.9 622.2,231.5 624.2,232.0 C626.2,232.5 628.2,232.9 630.2,233.1 C632.2,233.4 634.2,233.4 636.2,233.5 C638.2,233.5 640.2,233.4 642.2,233.5 C644.2,233.5 646.2,233.5 648.2,233.7 C650.2,233.9 652.2,234.3 654.2,234.8 C656.2,235.2 658.2,235.9 660.2,236.5 C662.2,237.0 664.2,237.7 666.2,238.3 C668.2,238.8 670.2,239.3 672.2,239.6 C674.2,239.9 676.2,240.0 678.2,240.1 C680.2,240.2 683.2,240.2 684.2,240.2" stroke-width="0.6" opacity="0.38"/>
<path d="M548.8,282.0 C549.8,282.2 552.8,282.9 554.8,283.4 C556.8,283.8 558.8,284.3 560.8,284.8 C562.8,285.3 564.8,285.8 566.8,286.4 C568.8,287.0 570.8,287.6 572.8,288.3 C574.8,289.0 576.8,289.7 578.8,290.4 C580.8,291.2 582.8,292.0 584.8,292.8 C586.8,293.6 588.8,294.4 590.8,295.2 C592.8,296.1 595.8,297.3 596.8,297.7" stroke-width="0.6" opacity="0.39"/>
<path d="M575.4,214.4 C576.4,214.4 579.4,214.4 581.4,214.5 C583.4,214.5 585.4,214.5 587.4,214.6 C589.4,214.7 591.4,214.8 593.4,215.0 C595.4,215.2 597.4,215.5 599.4,215.9 C601.4,216.3 603.4,216.8 605.4,217.2 C607.4,217.7 609.4,218.3 611.4,218.7 C613.4,219.2 615.4,219.7 617.4,220.1 C619.4,220.5 621.4,220.9 623.4,221.1 C625.4,221.3 627.4,221.4 629.4,221.5 C631.4,221.6 633.4,221.5 635.4,221.5 C637.4,221.5 639.4,221.4 641.4,221.5 C643.4,221.5 646.4,221.7 647.4,221.7" stroke-width="1.0" opacity="0.35"/>
<path d="M640.9,262.9 C641.9,263.0 644.9,263.3 646.9,263.6 C648.9,263.9 650.9,264.1 652.9,264.4 C654.9,264.6 656.9,264.9 658.9,265.2 C660.9,265.5 662.9,265.8 664.9,266.2 C666.9,266.6 668.9,267.0 670.9,267.4 C672.9,267.9 674.9,268.3 676.9,268.8 C678.9,269.3 680.9,269.8 682.9,270.4 C684.9,270.9 686.9,271.5 688.9,272.0 C690.9,272.6 692.9,273.2 694.9,273.8 C696.9,274.4 698.9,275.0 700.9,275.6 C702.9,276.2 704.9,276.7 706.9,277.3 C708.9,277.8 711.9,278.6 712.9,278.8" stroke-width="0.6" opacity="0.31"/>
<path d="M693.6,257.8 C694.6,257.9 697.6,258.4 699.6,258.7 C701.6,259.0 703.6,259.2 705.6,259.4 C707.6,259.6 709.6,259.8 711.6,260.0 C713.6,260.2 715.6,260.3 717.6,260.5 C719.6,260.8 721.6,261.0 723.6,261.2 C725.6,261.5 727.6,261.8 729.6,262.2 C731.6,262.6 733.6,263.0 735.6,263.6 C737.6,264.1 739.6,264.7 741.6,265.3 C743.6,266.0 745.6,266.6 747.6,267.3 C749.6,268.0 751.6,268.7 753.6,269.4 C755.6,270.1 757.6,270.7 759.6,271.5 C761.6,272.2 764.6,273.3 765.6,273.6" stroke-width="0.6" opacity="0.16"/>
<path d="M686.6,276.9 C687.6,277.3 690.6,278.4 692.6,279.1 C694.6,279.8 696.6,280.6 698.6,281.2 C700.6,281.9 702.6,282.5 704.6,283.1 C706.6,283.6 708.6,284.0 710.6,284.4 C712.6,284.7 714.6,285.0 716.6,285.2 C718.6,285.4 720.6,285.5 722.6,285.7 C724.6,285.8 726.6,285.9 728.6,286.1 C730.6,286.2 732.6,286.4 734.6,286.7 C736.6,286.9 738.6,287.3 740.6,287.7 C742.6,288.1 744.6,288.6 746.6,289.1 C748.6,289.7 750.6,290.4 752.6,291.1 C754.6,291.8 756.6,292.5 758.6,293.3 C760.6,294.1 762.6,295.1 764.6,295.9 C766.6,296.7 769.6,297.9 770.6,298.3" stroke-width="0.6" opacity="0.23"/>
<path d="M670.5,227.1 C671.5,227.3 674.5,228.0 676.5,228.4 C678.5,228.9 680.5,229.4 682.5,229.8 C684.5,230.3 686.5,230.7 688.5,231.2 C690.5,231.6 692.5,232.1 694.5,232.5 C696.5,233.0 698.5,233.4 700.5,233.9 C702.5,234.3 704.5,234.8 706.5,235.2 C708.5,235.6 710.5,235.9 712.5,236.3 C714.5,236.6 716.5,237.0 718.5,237.3 C720.5,237.6 722.5,237.8 724.5,238.1 C726.5,238.4 728.5,238.5 730.5,238.8 C732.5,239.1 734.5,239.4 736.5,239.7 C738.5,240.0 740.5,240.3 742.5,240.6 C744.5,240.9 746.5,241.2 748.5,241.6 C750.5,241.9 752.5,242.2 754.5,242.6 C756.5,243.0 758.5,243.3 760.5,243.8 C762.5,244.3 765.5,245.2 766.5,245.5" stroke-width="0.8" opacity="0.29"/>
<path d="M495.7,214.9 C496.7,215.2 499.7,216.3 501.7,216.9 C503.7,217.5 505.7,218.1 507.7,218.6 C509.7,219.2 511.7,219.7 513.7,220.1 C515.7,220.6 517.7,221.0 519.7,221.3 C521.7,221.6 523.7,221.8 525.7,221.9 C527.7,222.1 529.7,222.2 531.7,222.3 C533.7,222.4 535.7,222.5 537.7,222.6 C539.7,222.8 541.7,222.9 543.7,223.0 C545.7,223.2 547.7,223.4 549.7,223.7 C551.7,224.0 554.7,224.5 555.7,224.7" stroke-width="1.4" opacity="0.26"/>
<path d="M680.2,270.4 C681.2,270.5 684.2,270.9 686.2,271.1 C688.2,271.3 690.2,271.4 692.2,271.6 C694.2,271.7 696.2,271.9 698.2,272.1 C700.2,272.3 702.2,272.6 704.2,272.9 C706.2,273.3 708.2,273.7 710.2,274.2 C712.2,274.6 714.2,275.2 716.2,275.8 C718.2,276.4 720.2,277.1 722.2,277.8 C724.2,278.5 727.2,279.5 728.2,279.9" stroke-width="1.0" opacity="0.22"/>
<path d="M498.0,227.7 C499.0,228.1 502.0,229.5 504.0,230.3 C506.0,231.1 508.0,231.8 510.0,232.4 C512.0,232.9 514.0,233.4 516.0,233.7 C518.0,234.0 520.0,234.1 522.0,234.2 C524.0,234.3 526.0,234.2 528.0,234.4 C530.0,234.5 532.0,234.7 534.0,235.0 C536.0,235.4 538.0,236.0 540.0,236.6 C542.0,237.3 544.0,238.1 546.0,238.9 C548.0,239.7 550.0,240.6 552.0,241.2 C554.0,241.9 556.0,242.6 558.0,243.0 C560.0,243.4 562.0,243.7 564.0,243.9 C566.0,244.1 568.0,244.1 570.0,244.2 C572.0,244.2 574.0,244.2 576.0,244.4 C578.0,244.6 580.0,244.9 582.0,245.3 C584.0,245.8 586.0,246.4 588.0,247.1 C590.0,247.8 593.0,249.1 594.0,249.5" stroke-width="0.6" opacity="0.34"/>
<path d="M684.6,242.2 C685.6,242.4 688.6,243.1 690.6,243.6 C692.6,244.1 694.6,244.6 696.6,245.1 C698.6,245.6 700.6,246.1 702.6,246.7 C704.6,247.2 706.6,247.7 708.6,248.2 C710.6,248.7 713.6,249.4 714.6,249.7" stroke-width="1.4" opacity="0.28"/>
<path d="M589.1,255.9 C590.1,256.1 593.1,256.6 595.1,257.0 C597.1,257.4 599.1,257.8 601.1,258.3 C603.1,258.7 605.1,259.2 607.1,259.7 C609.1,260.2 611.1,260.8 613.1,261.4 C615.1,262.0 617.1,262.6 619.1,263.2 C621.1,263.8 623.1,264.4 625.1,264.9 C627.1,265.4 629.1,265.9 631.1,266.3 C633.1,266.8 635.1,267.1 637.1,267.5 C639.1,267.8 641.1,268.0 643.1,268.3 C645.1,268.6 647.1,268.8 649.1,269.1 C651.1,269.4 653.1,269.7 655.1,270.0 C657.1,270.3 659.1,270.7 661.1,271.2 C663.1,271.6 665.1,272.1 667.1,272.6 C669.1,273.1 671.1,273.8 673.1,274.3 C675.1,274.9 677.1,275.6 679.1,276.1 C681.1,276.7 683.1,277.3 685.1,277.9 C687.1,278.4 689.1,278.9 691.1,279.3 C693.1,279.8 696.1,280.4 697.1,280.6" stroke-width="1.0" opacity="0.21"/>
<path d="M478.5,213.4 C479.5,213.6 482.5,214.5 484.5,214.9 C486.5,215.4 488.5,215.6 490.5,215.9 C492.5,216.2 494.5,216.3 496.5,216.6 C498.5,216.8 500.5,217.0 502.5,217.3 C504.5,217.6 506.5,217.8 508.5,218.2 C510.5,218.6 512.5,219.0 514.5,219.6 C516.5,220.1 518.5,220.8 520.5,221.4 C522.5,221.9 524.5,222.6 526.5,223.1 C528.5,223.7 530.5,224.2 532.5,224.7 C534.5,225.1 536.5,225.5 538.5,225.8 C540.5,226.1 542.5,226.3 544.5,226.5 C546.5,226.6 548.5,226.7 550.5,226.8 C552.5,226.9 555.5,227.0 556.5,227.1" stroke-width="0.6" opacity="0.34"/>
<path d="M663.3,283.9 C664.3,284.2 667.3,285.1 669.3,285.7 C671.3,286.3 673.3,286.9 675.3,287.5 C677.3,288.1 679.3,288.7 681.3,289.2 C683.3,289.8 685.3,290.3 687.3,290.8 C689.3,291.4 692.3,292.1 693.3,292.3" stroke-width="1.0" opacity="0.21"/>
<path d="M601.0,244.7 C602.0,245.0 605.0,245.6 607.0,246.1 C609.0,246.6 611.0,247.1 613.0,247.7 C615.0,248.3 617.0,248.9 619.0,249.5 C621.0,250.2 623.0,250.8 625.0,251.4 C627.0,252.0 629.0,252.6 631.0,253.1 C633.0,253.7 635.0,254.2 637.0,254.7 C639.0,255.1 641.0,255.5 643.0,255.9 C645.0,256.2 647.0,256.5 649.0,256.8 C651.0,257.0 653.0,257.2 655.0,257.4 C657.0,257.6 659.0,257.7 661.0,257.9 C663.0,258.0 665.0,258.1 667.0,258.3 C669.0,258.5 671.0,258.6 673.0,258.8 C675.0,259.0 677.0,259.3 679.0,259.5 C681.0,259.8 683.0,260.1 685.0,260.5 C687.0,260.9 689.0,261.3 691.0,261.8 C693.0,262.3 695.0,262.8 697.0,263.4 C699.0,264.0 701.0,264.6 703.0,265.3 C705.0,265.9 708.0,266.9 709.0,267.3" stroke-width="0.6" opacity="0.15"/>
<path d="M658.3,229.7 C659.3,229.8 662.3,230.1 664.3,230.3 C666.3,230.5 668.3,230.7 670.3,231.0 C672.3,231.2 674.3,231.5 676.3,231.9 C678.3,232.2 680.3,232.5 682.3,232.9 C684.3,233.3 686.3,233.6 688.3,234.0 C690.3,234.4 692.3,234.8 694.3,235.3 C696.3,235.7 698.3,236.2 700.3,236.7 C702.3,237.2 704.3,237.7 706.3,238.1 C708.3,238.6 710.3,239.1 712.3,239.6 C714.3,240.0 717.3,240.7 718.3,240.9" stroke-width="1.4" opacity="0.37"/>
<path d="M698.6,294.7 C699.6,294.9 702.6,295.5 704.6,295.9 C706.6,296.3 708.6,296.7 710.6,297.1 C712.6,297.6 714.6,298.0 716.6,298.5 C718.6,299.0 720.6,299.6 722.6,300.1 C724.6,300.7 726.6,301.3 728.6,301.9 C730.6,302.5 732.6,303.2 734.6,303.8 C736.6,304.5 738.6,305.2 740.6,305.9 C742.6,306.6 744.6,307.3 746.6,308.0 C748.6,308.7 750.6,309.4 752.6,310.0 C754.6,310.7 756.6,311.3 758.6,312.0 C760.6,312.6 762.6,313.2 764.6,313.8 C766.6,314.4 769.6,315.2 770.6,315.5" stroke-width="0.6" opacity="0.26"/>
<path d="M698.0,242.1 C699.0,242.4 702.0,243.1 704.0,243.5 C706.0,244.0 708.0,244.4 710.0,244.8 C712.0,245.3 714.0,245.7 716.0,246.1 C718.0,246.5 720.0,246.9 722.0,247.3 C724.0,247.7 726.0,248.1 728.0,248.5 C730.0,248.9 732.0,249.2 734.0,249.6 C736.0,250.0 738.0,250.5 740.0,250.9 C742.0,251.3 744.0,251.8 746.0,252.2 C748.0,252.6 751.0,253.2 752.0,253.4" stroke-width="0.6" opacity="0.22"/>
<path d="M733.6,272.6 C734.6,272.9 737.6,273.8 739.6,274.4 C741.6,275.0 743.6,275.5 745.6,276.0 C747.6,276.5 749.6,277.0 751.6,277.4 C753.6,277.8 755.6,278.2 757.6,278.6 C759.6,279.0 762.6,279.6 763.6,279.9" stroke-width="0.6" opacity="0.30"/>
<path d="M739.6,315.9 C740.6,316.2 743.6,316.8 745.6,317.2 C747.6,317.6 749.6,317.9 751.6,318.3 C753.6,318.6 755.6,318.9 757.6,319.2 C759.6,319.5 761.6,319.9 763.6,320.2 C765.6,320.5 768.6,321.1 769.6,321.2" stroke-width="0.6" opacity="0.39"/>
<path d="M749.7,298.5 C750.7,298.9 753.7,299.9 755.7,300.6 C757.7,301.3 759.7,302.1 761.7,302.7 C763.7,303.4 766.7,304.3 767.7,304.6" stroke-width="0.6" opacity="0.32"/>
<path d="M552.9,237.5 C553.9,237.5 556.9,237.7 558.9,237.8 C560.9,238.0 562.9,238.2 564.9,238.5 C566.9,238.8 568.9,239.3 570.9,239.8 C572.9,240.3 574.9,241.1 576.9,241.7 C578.9,242.4 580.9,243.2 582.9,243.8 C584.9,244.4 586.9,245.0 588.9,245.4 C590.9,245.9 592.9,246.1 594.9,246.3 C596.9,246.5 598.9,246.5 600.9,246.6 C602.9,246.7 604.9,246.7 606.9,246.9 C608.9,247.1 610.9,247.3 612.9,247.8 C614.9,248.2 616.9,248.8 618.9,249.5 C620.9,250.1 622.9,250.9 624.9,251.6 C626.9,252.2 628.9,252.9 630.9,253.4 C632.9,253.9 634.9,254.3 636.9,254.6 C638.9,254.8 640.9,254.8 642.9,254.9 C644.9,255.0 646.9,255.0 648.9,255.1 C650.9,255.3 653.9,255.7 654.9,255.8" stroke-width="0.8" opacity="0.23"/>
    </g>
    <g fill="none" stroke="#3e1808" stroke-linecap="round" filter="url(#wob)">
<path d="M523.2,264.5 C524.2,265.0 527.2,266.3 529.2,267.3 C531.2,268.2 533.2,269.2 535.2,270.1 C537.2,271.0 539.2,271.9 541.2,272.8 C543.2,273.7 545.2,274.5 547.2,275.3 C549.2,276.1 551.2,276.8 553.2,277.5 C555.2,278.2 557.2,278.8 559.2,279.4 C561.2,279.9 563.2,280.4 565.2,280.8 C567.2,281.3 569.2,281.7 571.2,282.0 C573.2,282.4 575.2,282.7 577.2,283.0 C579.2,283.2 581.2,283.5 583.2,283.8 C585.2,284.0 587.2,284.3 589.2,284.6 C591.2,284.9 593.2,285.2 595.2,285.6 C597.2,285.9 599.2,286.4 601.2,286.8 C603.2,287.3 605.2,287.7 607.2,288.2 C609.2,288.8 611.2,289.5 613.2,290.2 C615.2,290.9 617.2,291.7 619.2,292.5 C621.2,293.4 623.2,294.3 625.2,295.2 C627.2,296.1 629.2,297.0 631.2,298.0 C633.2,298.9 635.2,299.9 637.2,300.7 C639.2,301.6 641.2,302.4 643.2,303.1 C645.2,303.9 647.2,304.7 649.2,305.3 C651.2,306.0 653.2,306.6 655.2,307.2 C657.2,307.7 660.2,308.4 661.2,308.6" stroke-width="0.6" opacity="0.72"/>
<path d="M611.2,235.7 C612.2,235.9 615.2,236.5 617.2,237.0 C619.2,237.5 621.2,238.0 623.2,238.4 C625.2,238.9 627.2,239.4 629.2,239.8 C631.2,240.2 633.2,240.7 635.2,241.0 C637.2,241.4 639.2,241.7 641.2,242.0 C643.2,242.3 645.2,242.5 647.2,242.8 C649.2,243.0 652.2,243.2 653.2,243.3" stroke-width="1.3" opacity="0.57"/>
<path d="M495.0,205.4 C496.0,205.7 499.0,206.3 501.0,206.7 C503.0,207.1 505.0,207.5 507.0,207.9 C509.0,208.3 511.0,208.7 513.0,209.1 C515.0,209.5 517.0,210.0 519.0,210.4 C521.0,210.8 523.0,211.1 525.0,211.5 C527.0,211.9 529.0,212.2 531.0,212.6 C533.0,212.9 535.0,213.3 537.0,213.6 C539.0,214.0 541.0,214.3 543.0,214.7 C545.0,215.0 547.0,215.3 549.0,215.6 C551.0,215.9 553.0,216.1 555.0,216.4 C557.0,216.7 560.0,217.1 561.0,217.2" stroke-width="0.8" opacity="0.68"/>
<path d="M206.4,200.3 C207.4,201.0 210.4,203.1 212.4,204.6 C214.4,206.0 216.4,207.5 218.4,209.0 C220.4,210.5 222.4,212.1 224.4,213.7 C226.4,215.3 228.4,216.9 230.4,218.5 C232.4,220.1 234.4,221.7 236.4,223.3 C238.4,224.9 240.4,226.6 242.4,228.3 C244.4,230.0 246.4,231.7 248.4,233.4 C250.4,235.1 252.4,236.8 254.4,238.6 C256.4,240.4 258.4,242.2 260.4,244.0 C262.4,245.8 264.4,247.7 266.4,249.6 C268.4,251.5 270.4,253.4 272.4,255.3 C274.4,257.3 277.4,260.4 278.4,261.4" stroke-width="0.8" opacity="0.78"/>
<path d="M403.6,258.9 C404.6,259.3 407.6,260.5 409.6,261.4 C411.6,262.3 413.6,263.2 415.6,264.1 C417.6,265.0 419.6,266.0 421.6,266.9 C423.6,267.9 425.6,268.9 427.6,269.9 C429.6,270.9 432.6,272.5 433.6,273.0" stroke-width="1.6" opacity="0.64"/>
<path d="M461.3,200.5 C462.3,200.8 465.3,202.0 467.3,202.6 C469.3,203.2 471.3,203.8 473.3,204.3 C475.3,204.8 477.3,205.2 479.3,205.6 C481.3,205.9 483.3,206.2 485.3,206.4 C487.3,206.7 489.3,206.8 491.3,206.9 C493.3,207.1 495.3,207.2 497.3,207.4 C499.3,207.6 502.3,208.0 503.3,208.1" stroke-width="0.8" opacity="0.33"/>
<path d="M725.7,227.6 C726.7,228.0 729.7,229.0 731.7,230.0 C733.7,231.0 735.7,232.5 737.7,233.5 C739.7,234.5 741.7,235.6 743.7,236.2 C745.7,236.8 747.7,236.9 749.7,237.0 C751.7,237.0 753.7,236.5 755.7,236.3 C757.7,236.2 759.7,235.8 761.7,236.0 C763.7,236.2 766.7,237.4 767.7,237.6" stroke-width="1.0" opacity="0.49"/>
<path d="M648.7,260.0 C649.7,260.2 652.7,261.0 654.7,261.5 C656.7,262.0 658.7,262.5 660.7,262.9 C662.7,263.3 664.7,263.7 666.7,264.1 C668.7,264.5 670.7,264.8 672.7,265.1 C674.7,265.5 676.7,265.7 678.7,266.0 C680.7,266.2 682.7,266.5 684.7,266.7 C686.7,266.9 688.7,267.1 690.7,267.3 C692.7,267.5 694.7,267.6 696.7,267.9 C698.7,268.1 700.7,268.3 702.7,268.6 C704.7,268.8 706.7,269.1 708.7,269.4 C710.7,269.7 712.7,270.0 714.7,270.3 C716.7,270.6 718.7,271.0 720.7,271.4 C722.7,271.8 724.7,272.2 726.7,272.7 C728.7,273.2 730.7,273.7 732.7,274.2 C734.7,274.8 736.7,275.5 738.7,276.1 C740.7,276.8 742.7,277.5 744.7,278.1 C746.7,278.8 748.7,279.5 750.7,280.2 C752.7,280.9 754.7,281.6 756.7,282.3 C758.7,283.0 760.7,283.7 762.7,284.4 C764.7,285.2 767.7,286.2 768.7,286.6" stroke-width="0.8" opacity="0.76"/>
<path d="M706.7,257.8 C707.7,258.0 710.7,258.9 712.7,259.4 C714.7,259.9 716.7,260.3 718.7,260.8 C720.7,261.2 722.7,261.6 724.7,261.9 C726.7,262.3 728.7,262.5 730.7,262.9 C732.7,263.2 734.7,263.5 736.7,263.8 C738.7,264.1 740.7,264.4 742.7,264.6 C744.7,264.9 746.7,265.2 748.7,265.4 C750.7,265.7 752.7,266.0 754.7,266.3 C756.7,266.6 758.7,266.9 760.7,267.3 C762.7,267.7 765.7,268.5 766.7,268.7" stroke-width="1.0" opacity="0.73"/>
<path d="M360.5,255.3 C361.5,255.9 364.5,257.9 366.5,259.0 C368.5,260.2 370.5,261.2 372.5,262.2 C374.5,263.3 376.5,264.2 378.5,265.2 C380.5,266.1 383.5,267.4 384.5,267.9" stroke-width="0.6" opacity="0.61"/>
<path d="M579.7,236.6 C580.7,236.6 583.7,236.6 585.7,236.9 C587.7,237.2 589.7,237.8 591.7,238.4 C593.7,239.1 595.7,240.1 597.7,240.9 C599.7,241.8 601.7,242.8 603.7,243.5 C605.7,244.2 607.7,244.8 609.7,245.2 C611.7,245.6 613.7,245.7 615.7,245.7 C617.7,245.7 619.7,245.4 621.7,245.3 C623.7,245.2 625.7,244.9 627.7,244.9 C629.7,244.9 631.7,245.1 633.7,245.5 C635.7,245.9 637.7,246.5 639.7,247.3 C641.7,248.1 643.7,249.1 645.7,250.0 C647.7,250.8 649.7,251.8 651.7,252.5 C653.7,253.2 655.7,253.7 657.7,254.0 C659.7,254.2 661.7,254.2 663.7,254.1 C665.7,254.0 667.7,253.7 669.7,253.5 C671.7,253.4 673.7,253.2 675.7,253.3 C677.7,253.4 680.7,254.0 681.7,254.2" stroke-width="1.3" opacity="0.32"/>
<path d="M590.8,241.6 C591.8,242.0 594.8,243.3 596.8,244.0 C598.8,244.7 600.8,245.4 602.8,245.9 C604.8,246.4 606.8,246.6 608.8,246.8 C610.8,246.9 612.8,246.9 614.8,246.9 C616.8,246.8 618.8,246.6 620.8,246.6 C622.8,246.6 624.8,246.5 626.8,246.7 C628.8,246.9 630.8,247.2 632.8,247.7 C634.8,248.2 636.8,248.9 638.8,249.6 C640.8,250.4 642.8,251.3 644.8,252.1 C646.8,252.9 648.8,253.8 650.8,254.4 C652.8,255.1 654.8,255.6 656.8,256.0 C658.8,256.3 661.8,256.4 662.8,256.5" stroke-width="0.6" opacity="0.70"/>
<path d="M695.2,278.5 C696.2,278.7 699.2,279.3 701.2,279.8 C703.2,280.2 705.2,280.7 707.2,281.2 C709.2,281.7 711.2,282.2 713.2,282.8 C715.2,283.3 717.2,283.9 719.2,284.5 C721.2,285.0 723.2,285.6 725.2,286.3 C727.2,286.9 729.2,287.5 731.2,288.1 C733.2,288.8 735.2,289.5 737.2,290.1 C739.2,290.8 741.2,291.5 743.2,292.1 C745.2,292.8 747.2,293.4 749.2,294.0 C751.2,294.6 754.2,295.4 755.2,295.7" stroke-width="1.0" opacity="0.54"/>
<path d="M332.3,185.0 C333.3,185.4 336.3,186.5 338.3,187.2 C340.3,187.9 342.3,188.7 344.3,189.4 C346.3,190.1 348.3,190.8 350.3,191.5 C352.3,192.1 354.3,192.8 356.3,193.5 C358.3,194.1 360.3,194.7 362.3,195.4 C364.3,196.0 366.3,196.5 368.3,197.1 C370.3,197.6 372.3,198.2 374.3,198.7 C376.3,199.2 378.3,199.6 380.3,200.1 C382.3,200.5 385.3,201.2 386.3,201.4" stroke-width="1.3" opacity="0.73"/>
<path d="M268.6,191.8 C269.6,192.4 272.6,194.2 274.6,195.3 C276.6,196.4 278.6,197.5 280.6,198.6 C282.6,199.6 284.6,200.6 286.6,201.6 C288.6,202.6 290.6,203.6 292.6,204.5 C294.6,205.4 296.6,206.3 298.6,207.2 C300.6,208.1 302.6,209.0 304.6,209.9 C306.6,210.8 308.6,211.7 310.6,212.7 C312.6,213.7 314.6,214.7 316.6,215.7 C318.6,216.8 320.6,217.9 322.6,219.1 C324.6,220.2 326.6,221.4 328.6,222.7 C330.6,224.0 332.6,225.3 334.6,226.7 C336.6,228.0 338.6,229.4 340.6,230.8 C342.6,232.2 344.6,233.6 346.6,235.0 C348.6,236.4 350.6,237.8 352.6,239.1 C354.6,240.4 356.6,241.6 358.6,242.8 C360.6,244.0 362.6,245.2 364.6,246.2 C366.6,247.3 369.6,248.6 370.6,249.1" stroke-width="1.0" opacity="0.65"/>
<path d="M546.8,270.3 C547.8,270.4 550.8,270.7 552.8,271.0 C554.8,271.3 556.8,271.6 558.8,272.0 C560.8,272.4 562.8,273.0 564.8,273.6 C566.8,274.3 568.8,275.0 570.8,275.9 C572.8,276.7 574.8,277.7 576.8,278.6 C578.8,279.6 580.8,280.6 582.8,281.5 C584.8,282.4 586.8,283.3 588.8,284.1 C590.8,284.8 592.8,285.5 594.8,286.0 C596.8,286.6 598.8,287.0 600.8,287.3 C602.8,287.6 604.8,287.7 606.8,287.8 C608.8,288.0 610.8,288.0 612.8,288.2 C614.8,288.4 616.8,288.6 618.8,288.9 C620.8,289.3 622.8,289.7 624.8,290.2 C626.8,290.7 629.8,291.8 630.8,292.2" stroke-width="1.0" opacity="0.78"/>
<path d="M363.7,254.6 C364.7,255.4 367.7,257.8 369.7,259.5 C371.7,261.2 373.7,262.9 375.7,264.5 C377.7,266.1 380.7,268.1 381.7,268.8" stroke-width="1.3" opacity="0.79"/>
<path d="M715.0,273.4 C716.0,273.6 719.0,274.4 721.0,274.9 C723.0,275.5 725.0,276.0 727.0,276.5 C729.0,277.0 731.0,277.5 733.0,278.1 C735.0,278.6 737.0,279.2 739.0,279.7 C741.0,280.3 743.0,280.8 745.0,281.3 C747.0,281.8 749.0,282.3 751.0,282.8 C753.0,283.3 755.0,283.7 757.0,284.1 C759.0,284.6 761.0,285.1 763.0,285.5 C765.0,286.0 768.0,286.7 769.0,287.0" stroke-width="1.3" opacity="0.44"/>
<path d="M210.3,207.5 C211.3,208.1 214.3,210.0 216.3,211.4 C218.3,212.8 220.3,214.2 222.3,215.7 C224.3,217.2 226.3,218.8 228.3,220.4 C230.3,222.0 232.3,223.5 234.3,225.2 C236.3,227.0 238.3,228.7 240.3,230.6 C242.3,232.5 244.3,234.4 246.3,236.4 C248.3,238.4 250.3,240.3 252.3,242.4 C254.3,244.4 256.3,246.6 258.3,248.8 C260.3,251.0 263.3,254.4 264.3,255.5" stroke-width="1.3" opacity="0.45"/>
<path d="M483.1,267.6 C484.1,267.8 487.1,268.4 489.1,269.1 C491.1,269.8 493.1,270.7 495.1,271.7 C497.1,272.7 499.1,273.9 501.1,275.2 C503.1,276.5 505.1,277.9 507.1,279.3 C509.1,280.6 511.1,282.0 513.1,283.2 C515.1,284.4 518.1,285.9 519.1,286.4" stroke-width="1.6" opacity="0.63"/>
<path d="M290.9,219.2 C291.9,219.8 294.9,221.9 296.9,223.3 C298.9,224.6 300.9,226.0 302.9,227.5 C304.9,228.9 306.9,230.3 308.9,231.7 C310.9,233.1 312.9,234.5 314.9,235.9 C316.9,237.4 318.9,238.8 320.9,240.3 C322.9,241.7 324.9,243.2 326.9,244.6 C328.9,246.1 330.9,247.6 332.9,249.1 C334.9,250.6 336.9,252.1 338.9,253.7 C340.9,255.2 342.9,256.7 344.9,258.2 C346.9,259.8 349.9,262.1 350.9,262.8" stroke-width="0.6" opacity="0.75"/>
<path d="M546.0,216.7 C547.0,216.7 550.0,216.8 552.0,216.8 C554.0,216.8 556.0,216.7 558.0,216.6 C560.0,216.6 562.0,216.6 564.0,216.6 C566.0,216.7 568.0,216.8 570.0,217.0 C572.0,217.2 574.0,217.4 576.0,217.8 C578.0,218.2 580.0,218.7 582.0,219.2 C584.0,219.7 586.0,220.4 588.0,221.0 C590.0,221.6 592.0,222.3 594.0,223.0 C596.0,223.6 598.0,224.2 600.0,224.8 C602.0,225.3 604.0,225.8 606.0,226.2 C608.0,226.5 611.0,226.8 612.0,227.0" stroke-width="1.0" opacity="0.73"/>
<path d="M663.2,284.3 C664.2,284.4 667.2,284.9 669.2,285.1 C671.2,285.3 673.2,285.4 675.2,285.4 C677.2,285.5 679.2,285.5 681.2,285.6 C683.2,285.7 685.2,285.7 687.2,285.8 C689.2,285.9 691.2,286.0 693.2,286.3 C695.2,286.5 697.2,286.8 699.2,287.3 C701.2,287.7 703.2,288.2 705.2,288.8 C707.2,289.4 709.2,290.1 711.2,290.9 C713.2,291.6 715.2,292.4 717.2,293.3 C719.2,294.1 721.2,295.0 723.2,295.9 C725.2,296.7 727.2,297.6 729.2,298.4 C731.2,299.2 733.2,300.0 735.2,300.8 C737.2,301.5 739.2,302.1 741.2,302.7 C743.2,303.2 745.2,303.7 747.2,304.0 C749.2,304.4 751.2,304.7 753.2,304.9 C755.2,305.1 757.2,305.2 759.2,305.4 C761.2,305.5 764.2,305.7 765.2,305.8" stroke-width="1.0" opacity="0.57"/>
<path d="M360.1,208.6 C361.1,209.1 364.1,210.5 366.1,211.5 C368.1,212.5 370.1,213.6 372.1,214.6 C374.1,215.7 376.1,216.8 378.1,217.8 C380.1,218.8 382.1,219.9 384.1,220.8 C386.1,221.7 388.1,222.5 390.1,223.3 C392.1,224.0 394.1,224.7 396.1,225.3 C398.1,225.8 400.1,226.3 402.1,226.8 C404.1,227.2 406.1,227.5 408.1,227.9 C410.1,228.3 412.1,228.6 414.1,229.0 C416.1,229.3 418.1,229.7 420.1,230.2 C422.1,230.6 424.1,231.2 426.1,231.8 C428.1,232.4 430.1,233.2 432.1,234.0 C434.1,234.9 436.1,235.8 438.1,236.8 C440.1,237.8 442.1,238.9 444.1,240.0 C446.1,241.1 448.1,242.3 450.1,243.4 C452.1,244.5 454.1,245.6 456.1,246.6 C458.1,247.6 460.1,248.6 462.1,249.5 C464.1,250.4 466.1,251.2 468.1,251.9 C470.1,252.6 472.1,253.2 474.1,253.8 C476.1,254.4 478.1,254.8 480.1,255.3 C482.1,255.7 484.1,256.1 486.1,256.5 C488.1,257.0 490.1,257.4 492.1,257.9 C494.1,258.4 496.1,258.9 498.1,259.6 C500.1,260.2 502.1,260.9 504.1,261.7 C506.1,262.5 508.1,263.3 510.1,264.3 C512.1,265.2 514.1,266.2 516.1,267.3 C518.1,268.3 521.1,269.9 522.1,270.5" stroke-width="1.6" opacity="0.48"/>
<path d="M246.7,201.4 C247.7,201.9 250.7,203.4 252.7,204.5 C254.7,205.6 256.7,206.8 258.7,208.0 C260.7,209.3 262.7,210.6 264.7,212.0 C266.7,213.3 268.7,214.8 270.7,216.3 C272.7,217.8 274.7,219.3 276.7,221.0 C278.7,222.6 280.7,224.3 282.7,226.0 C284.7,227.8 286.7,229.6 288.7,231.4 C290.7,233.3 292.7,235.2 294.7,237.1 C296.7,239.0 298.7,240.9 300.7,242.9 C302.7,244.9 304.7,246.9 306.7,248.9 C308.7,250.8 310.7,252.8 312.7,254.7 C314.7,256.6 317.7,259.4 318.7,260.4" stroke-width="1.0" opacity="0.71"/>
<path d="M545.5,241.9 C546.5,242.0 549.5,242.4 551.5,242.5 C553.5,242.7 555.5,242.8 557.5,242.9 C559.5,243.0 561.5,243.0 563.5,243.1 C565.5,243.2 567.5,243.3 569.5,243.5 C571.5,243.7 573.5,243.9 575.5,244.2 C577.5,244.5 579.5,244.8 581.5,245.3 C583.5,245.7 585.5,246.2 587.5,246.8 C589.5,247.4 591.5,248.1 593.5,248.8 C595.5,249.5 597.5,250.2 599.5,251.0 C601.5,251.7 603.5,252.5 605.5,253.3 C607.5,254.0 609.5,254.7 611.5,255.4 C613.5,256.0 615.5,256.7 617.5,257.3 C619.5,257.8 622.5,258.5 623.5,258.7" stroke-width="1.6" opacity="0.49"/>
<path d="M690.4,278.7 C691.4,278.7 694.4,278.7 696.4,278.7 C698.4,278.7 700.4,278.7 702.4,278.8 C704.4,278.8 706.4,278.9 708.4,279.1 C710.4,279.2 712.4,279.5 714.4,279.8 C716.4,280.1 718.4,280.6 720.4,281.1 C722.4,281.7 724.4,282.4 726.4,283.1 C728.4,283.8 730.4,284.6 732.4,285.5 C734.4,286.4 736.4,287.4 738.4,288.3 C740.4,289.2 742.4,290.2 744.4,291.0 C746.4,291.9 748.4,292.7 750.4,293.4 C752.4,294.1 754.4,294.7 756.4,295.2 C758.4,295.7 761.4,296.3 762.4,296.5" stroke-width="1.0" opacity="0.77"/>
<path d="M341.8,253.7 C342.8,254.5 345.8,256.7 347.8,258.2 C349.8,259.7 351.8,261.1 353.8,262.6 C355.8,264.0 358.8,266.1 359.8,266.8" stroke-width="0.8" opacity="0.45"/>
<path d="M614.5,284.9 C615.5,285.3 618.5,286.7 620.5,287.6 C622.5,288.4 624.5,289.3 626.5,290.1 C628.5,290.9 630.5,291.7 632.5,292.3 C634.5,292.9 636.5,293.4 638.5,293.8 C640.5,294.2 642.5,294.4 644.5,294.6 C646.5,294.9 649.5,295.1 650.5,295.2" stroke-width="0.6" opacity="0.42"/>
<path d="M535.8,257.0 C536.8,257.2 539.8,258.0 541.8,258.5 C543.8,259.0 545.8,259.5 547.8,260.0 C549.8,260.5 551.8,260.9 553.8,261.4 C555.8,261.8 557.8,262.3 559.8,262.8 C561.8,263.2 563.8,263.7 565.8,264.2 C567.8,264.6 569.8,265.1 571.8,265.6 C573.8,266.1 575.8,266.6 577.8,267.1 C579.8,267.6 581.8,268.1 583.8,268.6 C585.8,269.1 587.8,269.7 589.8,270.2 C591.8,270.7 593.8,271.3 595.8,271.9 C597.8,272.4 599.8,273.0 601.8,273.6 C603.8,274.1 605.8,274.6 607.8,275.2 C609.8,275.7 611.8,276.3 613.8,276.9 C615.8,277.5 617.8,278.1 619.8,278.7 C621.8,279.3 623.8,279.8 625.8,280.4 C627.8,280.9 629.8,281.5 631.8,282.0 C633.8,282.5 635.8,283.1 637.8,283.5 C639.8,284.0 641.8,284.4 643.8,284.8 C645.8,285.2 647.8,285.6 649.8,286.0 C651.8,286.4 653.8,286.8 655.8,287.2 C657.8,287.6 659.8,288.0 661.8,288.4 C663.8,288.8 666.8,289.4 667.8,289.6" stroke-width="1.6" opacity="0.65"/>
<path d="M517.8,263.0 C518.8,263.4 521.8,264.5 523.8,265.3 C525.8,266.0 527.8,266.8 529.8,267.6 C531.8,268.3 533.8,269.1 535.8,269.9 C537.8,270.7 539.8,271.5 541.8,272.3 C543.8,273.1 545.8,273.8 547.8,274.6 C549.8,275.3 551.8,276.0 553.8,276.7 C555.8,277.4 558.8,278.3 559.8,278.6" stroke-width="0.8" opacity="0.32"/>
<path d="M310.1,190.3 C311.1,190.9 314.1,192.6 316.1,193.6 C318.1,194.7 320.1,195.8 322.1,196.8 C324.1,197.7 326.1,198.7 328.1,199.5 C330.1,200.3 332.1,201.1 334.1,201.8 C336.1,202.5 338.1,203.1 340.1,203.6 C342.1,204.2 344.1,204.6 346.1,205.1 C348.1,205.6 350.1,206.0 352.1,206.4 C354.1,206.8 356.1,207.3 358.1,207.7 C360.1,208.2 362.1,208.7 364.1,209.3 C366.1,209.8 368.1,210.4 370.1,211.1 C372.1,211.8 374.1,212.6 376.1,213.4 C378.1,214.2 380.1,215.1 382.1,216.0 C384.1,216.9 386.1,217.9 388.1,218.8 C390.1,219.8 392.1,220.9 394.1,221.9 C396.1,222.9 398.1,223.9 400.1,224.9 C402.1,225.8 404.1,226.8 406.1,227.6 C408.1,228.5 410.1,229.3 412.1,230.0 C414.1,230.7 416.1,231.4 418.1,232.0 C420.1,232.5 422.1,233.0 424.1,233.5 C426.1,234.0 428.1,234.4 430.1,234.9 C432.1,235.3 434.1,235.7 436.1,236.1 C438.1,236.5 440.1,236.9 442.1,237.4 C444.1,238.0 446.1,238.6 448.1,239.2 C450.1,239.8 452.1,240.5 454.1,241.2 C456.1,241.9 458.1,242.7 460.1,243.6 C462.1,244.5 465.1,246.0 466.1,246.5" stroke-width="1.3" opacity="0.60"/>
<path d="M561.2,288.0 C562.2,288.2 565.2,288.8 567.2,289.2 C569.2,289.6 571.2,290.0 573.2,290.4 C575.2,290.9 577.2,291.3 579.2,291.8 C581.2,292.2 583.2,292.7 585.2,293.2 C587.2,293.8 589.2,294.3 591.2,294.9 C593.2,295.5 595.2,296.2 597.2,296.9 C599.2,297.6 602.2,298.8 603.2,299.1" stroke-width="0.8" opacity="0.75"/>
<path d="M432.4,253.1 C433.4,253.5 436.4,254.7 438.4,255.5 C440.4,256.3 442.4,257.1 444.4,258.0 C446.4,258.9 448.4,259.8 450.4,260.7 C452.4,261.5 454.4,262.4 456.4,263.3 C458.4,264.2 460.4,265.1 462.4,266.0 C464.4,266.9 466.4,267.9 468.4,268.9 C470.4,269.8 472.4,270.7 474.4,271.7 C476.4,272.6 478.4,273.6 480.4,274.5 C482.4,275.4 484.4,276.3 486.4,277.3 C488.4,278.2 490.4,279.2 492.4,280.1 C494.4,281.0 497.4,282.4 498.4,282.9" stroke-width="1.3" opacity="0.76"/>
<path d="M247.0,188.6 C248.0,189.1 251.0,190.7 253.0,191.7 C255.0,192.6 257.0,193.5 259.0,194.4 C261.0,195.2 263.0,196.0 265.0,196.8 C267.0,197.6 269.0,198.3 271.0,199.1 C273.0,199.9 275.0,200.7 277.0,201.6 C279.0,202.5 281.0,203.4 283.0,204.5 C285.0,205.5 287.0,206.7 289.0,208.0 C291.0,209.2 293.0,210.6 295.0,212.0 C297.0,213.4 299.0,215.0 301.0,216.5 C303.0,218.1 305.0,219.8 307.0,221.3 C309.0,222.9 311.0,224.5 313.0,226.0 C315.0,227.5 317.0,228.9 319.0,230.3 C321.0,231.7 323.0,233.0 325.0,234.2 C327.0,235.4 329.0,236.5 331.0,237.7 C333.0,238.8 335.0,239.8 337.0,240.9 C339.0,241.9 341.0,243.0 343.0,244.1 C345.0,245.2 347.0,246.3 349.0,247.5 C351.0,248.7 354.0,250.6 355.0,251.2" stroke-width="1.6" opacity="0.57"/>
<path d="M192.9,211.2 C193.9,212.1 196.9,214.9 198.9,216.8 C200.9,218.7 202.9,220.7 204.9,222.7 C206.9,224.6 208.9,226.6 210.9,228.4 C212.9,230.3 214.9,232.0 216.9,233.9 C218.9,235.8 220.9,237.6 222.9,239.6 C224.9,241.7 226.9,243.8 228.9,245.9 C230.9,248.1 233.9,251.6 234.9,252.7" stroke-width="1.0" opacity="0.66"/>
<path d="M727.7,319.9 C728.7,320.2 731.7,320.9 733.7,321.4 C735.7,321.9 738.7,322.7 739.7,322.9" stroke-width="0.6" opacity="0.66"/>
<path d="M296.4,181.3 C297.4,181.7 300.4,182.9 302.4,183.6 C304.4,184.4 306.4,185.2 308.4,186.0 C310.4,186.8 312.4,187.5 314.4,188.3 C316.4,189.0 318.4,189.7 320.4,190.4 C322.4,191.1 324.4,191.8 326.4,192.5 C328.4,193.2 330.4,193.8 332.4,194.4 C334.4,195.1 336.4,195.7 338.4,196.3 C340.4,196.9 342.4,197.5 344.4,198.2 C346.4,198.8 348.4,199.4 350.4,200.0 C352.4,200.7 354.4,201.3 356.4,202.0 C358.4,202.6 360.4,203.3 362.4,204.0 C364.4,204.7 366.4,205.4 368.4,206.1 C370.4,206.8 372.4,207.6 374.4,208.3 C376.4,209.0 378.4,209.8 380.4,210.5 C382.4,211.2 384.4,211.9 386.4,212.7 C388.4,213.4 390.4,214.1 392.4,214.8 C394.4,215.5 397.4,216.6 398.4,216.9" stroke-width="0.8" opacity="0.33"/>
<path d="M287.6,200.4 C288.6,200.8 291.6,201.9 293.6,202.8 C295.6,203.7 297.6,204.7 299.6,205.9 C301.6,207.1 303.6,208.4 305.6,209.9 C307.6,211.3 309.6,212.8 311.6,214.4 C313.6,215.9 315.6,217.6 317.6,219.2 C319.6,220.7 321.6,222.3 323.6,223.7 C325.6,225.1 327.6,226.5 329.6,227.7 C331.6,228.9 333.6,230.0 335.6,231.0 C337.6,231.9 339.6,232.8 341.6,233.6 C343.6,234.4 345.6,235.1 347.6,235.9 C349.6,236.7 351.6,237.5 353.6,238.4 C355.6,239.2 357.6,240.2 359.6,241.2 C361.6,242.3 363.6,243.4 365.6,244.6 C367.6,245.9 369.6,247.2 371.6,248.6 C373.6,250.0 375.6,251.5 377.6,252.9 C379.6,254.2 381.6,255.7 383.6,256.9 C385.6,258.2 387.6,259.4 389.6,260.5 C391.6,261.6 393.6,262.6 395.6,263.5 C397.6,264.4 399.6,265.1 401.6,265.8 C403.6,266.5 406.6,267.4 407.6,267.7" stroke-width="0.6" opacity="0.67"/>
<path d="M670.1,232.9 C671.1,232.9 674.1,233.2 676.1,233.3 C678.1,233.5 680.1,233.6 682.1,233.9 C684.1,234.1 686.1,234.3 688.1,234.5 C690.1,234.8 692.1,235.1 694.1,235.4 C696.1,235.8 698.1,236.2 700.1,236.6 C702.1,237.1 704.1,237.6 706.1,238.1 C708.1,238.6 710.1,239.2 712.1,239.7 C714.1,240.2 716.1,240.8 718.1,241.3 C720.1,241.8 722.1,242.4 724.1,242.9 C726.1,243.4 728.1,243.8 730.1,244.3 C732.1,244.8 734.1,245.3 736.1,245.7 C738.1,246.2 740.1,246.6 742.1,247.0 C744.1,247.5 746.1,247.8 748.1,248.2 C750.1,248.5 752.1,248.8 754.1,249.1 C756.1,249.4 758.1,249.7 760.1,250.1 C762.1,250.4 765.1,251.2 766.1,251.4" stroke-width="1.0" opacity="0.76"/>
<path d="M304.5,182.6 C305.5,183.1 308.5,184.6 310.5,185.7 C312.5,186.8 314.5,187.9 316.5,188.9 C318.5,189.9 320.5,190.9 322.5,191.8 C324.5,192.7 326.5,193.5 328.5,194.2 C330.5,194.9 332.5,195.4 334.5,195.9 C336.5,196.4 338.5,196.8 340.5,197.2 C342.5,197.5 344.5,197.8 346.5,198.2 C348.5,198.6 351.5,199.2 352.5,199.5" stroke-width="1.6" opacity="0.61"/>
<path d="M316.4,204.6 C317.4,205.1 320.4,206.9 322.4,207.9 C324.4,208.9 326.4,209.9 328.4,210.8 C330.4,211.7 332.4,212.6 334.4,213.3 C336.4,214.1 338.4,214.8 340.4,215.5 C342.4,216.2 344.4,216.8 346.4,217.4 C348.4,218.1 350.4,218.7 352.4,219.3 C354.4,220.0 356.4,220.7 358.4,221.4 C360.4,222.1 362.4,222.9 364.4,223.7 C366.4,224.6 368.4,225.4 370.4,226.4 C372.4,227.3 374.4,228.3 376.4,229.4 C378.4,230.4 380.4,231.5 382.4,232.6 C384.4,233.7 387.4,235.4 388.4,235.9" stroke-width="0.8" opacity="0.73"/>
<path d="M425.7,224.0 C426.7,224.3 429.7,225.2 431.7,225.9 C433.7,226.5 435.7,227.2 437.7,227.9 C439.7,228.6 441.7,229.3 443.7,230.1 C445.7,230.9 447.7,231.8 449.7,232.6 C451.7,233.4 453.7,234.2 455.7,235.0 C457.7,235.7 459.7,236.5 461.7,237.3 C463.7,238.1 465.7,238.9 467.7,239.6 C469.7,240.3 471.7,241.1 473.7,241.7 C475.7,242.4 478.7,243.4 479.7,243.7" stroke-width="0.6" opacity="0.35"/>
<path d="M236.8,203.6 C237.8,204.1 240.8,205.6 242.8,206.6 C244.8,207.6 246.8,208.6 248.8,209.5 C250.8,210.5 252.8,211.4 254.8,212.4 C256.8,213.5 258.8,214.5 260.8,215.7 C262.8,216.9 264.8,218.1 266.8,219.5 C268.8,220.9 270.8,222.3 272.8,223.9 C274.8,225.5 276.8,227.3 278.8,229.1 C280.8,230.9 282.8,232.8 284.8,234.8 C286.8,236.8 288.8,238.9 290.8,241.0 C292.8,243.1 294.8,245.2 296.8,247.3 C298.8,249.5 301.8,252.6 302.8,253.7" stroke-width="1.6" opacity="0.31"/>
<path d="M581.9,219.4 C582.9,219.6 585.9,220.1 587.9,220.3 C589.9,220.5 591.9,220.7 593.9,220.7 C595.9,220.8 597.9,220.8 599.9,220.8 C601.9,220.8 603.9,220.8 605.9,220.7 C607.9,220.6 609.9,220.5 611.9,220.4 C613.9,220.4 615.9,220.3 617.9,220.3 C619.9,220.3 621.9,220.3 623.9,220.4 C625.9,220.4 627.9,220.6 629.9,220.8 C631.9,221.0 634.9,221.5 635.9,221.7" stroke-width="0.6" opacity="0.34"/>
<path d="M689.1,265.7 C690.1,266.0 693.1,267.0 695.1,267.7 C697.1,268.5 699.1,269.4 701.1,270.2 C703.1,271.0 705.1,271.8 707.1,272.6 C709.1,273.3 711.1,274.0 713.1,274.6 C715.1,275.2 717.1,275.7 719.1,276.1 C721.1,276.5 723.1,276.7 725.1,276.9 C727.1,277.1 729.1,277.2 731.1,277.3 C733.1,277.4 735.1,277.5 737.1,277.6 C739.1,277.7 741.1,277.8 743.1,278.0 C745.1,278.2 747.1,278.4 749.1,278.8 C751.1,279.1 754.1,279.9 755.1,280.1" stroke-width="1.0" opacity="0.47"/>
<path d="M517.9,234.0 C518.9,234.2 521.9,234.8 523.9,235.2 C525.9,235.7 527.9,236.1 529.9,236.5 C531.9,236.9 533.9,237.4 535.9,237.8 C537.9,238.3 539.9,238.8 541.9,239.3 C543.9,239.8 545.9,240.3 547.9,240.8 C549.9,241.3 551.9,241.9 553.9,242.4 C555.9,242.9 557.9,243.4 559.9,244.0 C561.9,244.5 563.9,245.0 565.9,245.5 C567.9,246.1 569.9,246.6 571.9,247.1 C573.9,247.5 575.9,248.0 577.9,248.5 C579.9,248.9 581.9,249.4 583.9,249.8 C585.9,250.2 587.9,250.6 589.9,251.0 C591.9,251.4 593.9,251.7 595.9,252.1 C597.9,252.4 599.9,252.8 601.9,253.1 C603.9,253.4 606.9,253.8 607.9,253.9" stroke-width="1.3" opacity="0.78"/>
<path d="M365.4,193.5 C366.4,193.7 369.4,194.3 371.4,194.6 C373.4,194.9 375.4,195.2 377.4,195.5 C379.4,195.8 381.4,196.0 383.4,196.3 C385.4,196.5 387.4,196.7 389.4,197.0 C391.4,197.2 393.4,197.5 395.4,197.8 C397.4,198.1 399.4,198.4 401.4,198.7 C403.4,199.1 405.4,199.5 407.4,199.9 C409.4,200.3 411.4,200.7 413.4,201.2 C415.4,201.7 417.4,202.3 419.4,202.9 C421.4,203.5 423.4,204.1 425.4,204.8 C427.4,205.5 429.4,206.3 431.4,207.1 C433.4,207.9 435.4,208.7 437.4,209.5 C439.4,210.4 442.4,211.8 443.4,212.2" stroke-width="1.3" opacity="0.35"/>
<path d="M183.5,228.8 C184.5,230.0 187.5,233.4 189.5,235.8 C191.5,238.3 194.5,242.1 195.5,243.3" stroke-width="1.3" opacity="0.72"/>
<path d="M254.7,228.7 C255.7,229.7 258.7,232.7 260.7,234.7 C262.7,236.6 264.7,238.6 266.7,240.4 C268.7,242.3 270.7,244.1 272.7,245.9 C274.7,247.6 276.7,249.3 278.7,251.0 C280.7,252.7 282.7,254.4 284.7,256.1 C286.7,257.9 289.7,260.6 290.7,261.5" stroke-width="0.6" opacity="0.40"/>
<path d="M344.3,196.3 C345.3,196.7 348.3,197.9 350.3,198.6 C352.3,199.3 354.3,199.9 356.3,200.5 C358.3,201.1 360.3,201.6 362.3,202.1 C364.3,202.6 366.3,203.1 368.3,203.5 C370.3,203.9 372.3,204.3 374.3,204.7 C376.3,205.0 378.3,205.4 380.3,205.7 C382.3,206.1 384.3,206.4 386.3,206.8 C388.3,207.2 390.3,207.6 392.3,208.1 C394.3,208.5 396.3,209.0 398.3,209.6 C400.3,210.1 402.3,210.7 404.3,211.4 C406.3,212.0 408.3,212.7 410.3,213.4 C412.3,214.2 415.3,215.3 416.3,215.7" stroke-width="0.8" opacity="0.39"/>
<path d="M425.5,246.3 C426.5,246.7 429.5,248.0 431.5,248.8 C433.5,249.7 435.5,250.5 437.5,251.4 C439.5,252.3 441.5,253.2 443.5,254.1 C445.5,255.0 447.5,255.9 449.5,256.8 C451.5,257.7 453.5,258.6 455.5,259.5 C457.5,260.4 459.5,261.3 461.5,262.2 C463.5,263.0 465.5,264.0 467.5,264.8 C469.5,265.7 471.5,266.6 473.5,267.4 C475.5,268.3 477.5,269.1 479.5,270.0 C481.5,270.8 484.5,272.0 485.5,272.4" stroke-width="1.6" opacity="0.48"/>
<path d="M396.4,207.4 C397.4,207.6 400.4,208.0 402.4,208.5 C404.4,208.9 406.4,209.5 408.4,210.1 C410.4,210.7 412.4,211.5 414.4,212.3 C416.4,213.1 418.4,214.0 420.4,214.8 C422.4,215.6 424.4,216.5 426.4,217.2 C428.4,217.9 430.4,218.7 432.4,219.3 C434.4,219.9 436.4,220.3 438.4,220.7 C440.4,221.2 443.4,221.9 444.4,222.1" stroke-width="0.8" opacity="0.60"/>
<path d="M657.6,237.8 C658.6,237.9 661.6,238.0 663.6,238.1 C665.6,238.3 667.6,238.5 669.6,238.8 C671.6,239.0 673.6,239.4 675.6,239.8 C677.6,240.3 679.6,240.8 681.6,241.3 C683.6,241.8 685.6,242.4 687.6,243.0 C689.6,243.6 691.6,244.3 693.6,244.9 C695.6,245.5 698.6,246.5 699.6,246.8" stroke-width="1.3" opacity="0.56"/>
<path d="M483.8,215.5 C484.8,215.6 487.8,215.7 489.8,215.8 C491.8,215.9 493.8,215.9 495.8,216.1 C497.8,216.3 499.8,216.5 501.8,216.8 C503.8,217.1 505.8,217.5 507.8,218.0 C509.8,218.5 511.8,219.1 513.8,219.8 C515.8,220.5 517.8,221.4 519.8,222.2 C521.8,222.9 523.8,223.7 525.8,224.4 C527.8,225.0 529.8,225.7 531.8,226.2 C533.8,226.7 535.8,227.1 537.8,227.4 C539.8,227.6 541.8,227.8 543.8,227.8 C545.8,227.9 547.8,227.8 549.8,227.8 C551.8,227.7 553.8,227.6 555.8,227.6 C557.8,227.6 559.8,227.6 561.8,227.8 C563.8,228.0 565.8,228.3 567.8,228.8 C569.8,229.2 571.8,229.8 573.8,230.5 C575.8,231.1 577.8,231.9 579.8,232.7 C581.8,233.5 584.8,234.7 585.8,235.1" stroke-width="0.8" opacity="0.36"/>
<path d="M200.3,209.8 C201.3,210.5 204.3,212.8 206.3,214.3 C208.3,215.9 210.3,217.4 212.3,219.0 C214.3,220.6 216.3,222.2 218.3,223.9 C220.3,225.6 222.3,227.4 224.3,229.3 C226.3,231.2 228.3,233.2 230.3,235.3 C232.3,237.3 234.3,239.4 236.3,241.6 C238.3,243.8 241.3,247.2 242.3,248.4" stroke-width="0.6" opacity="0.34"/>
<path d="M607.4,246.6 C608.4,246.9 611.4,247.5 613.4,248.0 C615.4,248.4 617.4,248.9 619.4,249.4 C621.4,249.8 623.4,250.3 625.4,250.7 C627.4,251.1 629.4,251.4 631.4,251.8 C633.4,252.1 635.4,252.5 637.4,252.8 C639.4,253.1 641.4,253.3 643.4,253.6 C645.4,253.9 647.4,254.2 649.4,254.5 C651.4,254.8 653.4,255.1 655.4,255.4 C657.4,255.8 659.4,256.1 661.4,256.5 C663.4,256.9 665.4,257.4 667.4,257.8 C669.4,258.3 671.4,258.8 673.4,259.3 C675.4,259.8 677.4,260.3 679.4,260.7 C681.4,261.2 683.4,261.7 685.4,262.1 C687.4,262.5 689.4,262.9 691.4,263.3 C693.4,263.7 695.4,264.0 697.4,264.4 C699.4,264.7 701.4,265.1 703.4,265.4 C705.4,265.8 707.4,266.1 709.4,266.4 C711.4,266.8 713.4,267.1 715.4,267.4 C717.4,267.8 719.4,268.2 721.4,268.6 C723.4,269.0 725.4,269.4 727.4,269.9 C729.4,270.4 731.4,270.9 733.4,271.4 C735.4,271.9 737.4,272.6 739.4,273.1 C741.4,273.7 744.4,274.5 745.4,274.8" stroke-width="0.8" opacity="0.59"/>
<path d="M419.3,243.7 C420.3,244.1 423.3,245.2 425.3,246.0 C427.3,246.9 429.3,247.8 431.3,248.8 C433.3,249.7 435.3,250.7 437.3,251.8 C439.3,252.8 441.3,253.9 443.3,255.0 C445.3,256.2 447.3,257.4 449.3,258.5 C451.3,259.7 453.3,260.8 455.3,262.0 C457.3,263.1 459.3,264.2 461.3,265.2 C463.3,266.3 465.3,267.4 467.3,268.4 C469.3,269.4 471.3,270.3 473.3,271.2 C475.3,272.1 477.3,272.9 479.3,273.7 C481.3,274.4 483.3,275.1 485.3,275.8 C487.3,276.5 489.3,277.1 491.3,277.8 C493.3,278.4 495.3,279.0 497.3,279.6 C499.3,280.2 501.3,280.8 503.3,281.4 C505.3,282.0 507.3,282.6 509.3,283.2 C511.3,283.9 514.3,285.0 515.3,285.3" stroke-width="1.0" opacity="0.35"/>
<path d="M628.0,265.3 C629.0,265.4 632.0,265.6 634.0,265.9 C636.0,266.1 638.0,266.4 640.0,266.8 C642.0,267.2 644.0,267.7 646.0,268.3 C648.0,268.9 650.0,269.6 652.0,270.3 C654.0,271.0 656.0,271.7 658.0,272.4 C660.0,273.1 662.0,273.7 664.0,274.2 C666.0,274.7 668.0,275.2 670.0,275.5 C672.0,275.8 674.0,276.0 676.0,276.2 C678.0,276.4 680.0,276.4 682.0,276.6 C684.0,276.8 686.0,276.9 688.0,277.2 C690.0,277.6 692.0,277.9 694.0,278.5 C696.0,279.0 698.0,279.6 700.0,280.3 C702.0,281.0 705.0,282.2 706.0,282.6" stroke-width="1.0" opacity="0.44"/>
<path d="M201.5,217.6 C202.5,218.5 205.5,221.4 207.5,223.3 C209.5,225.2 211.5,226.9 213.5,228.8 C215.5,230.6 217.5,232.4 219.5,234.3 C221.5,236.2 223.5,238.2 225.5,240.2 C227.5,242.3 229.5,244.3 231.5,246.5 C233.5,248.8 236.5,252.3 237.5,253.4" stroke-width="1.0" opacity="0.52"/>
<path d="M513.4,256.5 C514.4,256.6 517.4,257.2 519.4,257.5 C521.4,257.8 523.4,258.0 525.4,258.4 C527.4,258.7 529.4,259.0 531.4,259.4 C533.4,259.9 535.4,260.4 537.4,261.0 C539.4,261.5 541.4,262.2 543.4,263.0 C545.4,263.7 547.4,264.6 549.4,265.4 C551.4,266.3 553.4,267.2 555.4,268.1 C557.4,269.0 559.4,270.0 561.4,270.9 C563.4,271.7 566.4,273.0 567.4,273.4" stroke-width="1.0" opacity="0.46"/>
<path d="M691.1,264.5 C692.1,264.8 695.1,265.6 697.1,266.2 C699.1,266.8 701.1,267.5 703.1,268.1 C705.1,268.7 707.1,269.3 709.1,269.9 C711.1,270.4 713.1,271.0 715.1,271.5 C717.1,272.0 719.1,272.4 721.1,272.9 C723.1,273.3 725.1,273.7 727.1,274.1 C729.1,274.4 731.1,274.8 733.1,275.1 C735.1,275.5 737.1,275.8 739.1,276.2 C741.1,276.5 743.1,276.8 745.1,277.1 C747.1,277.4 749.1,277.7 751.1,278.0 C753.1,278.3 755.1,278.5 757.1,278.9 C759.1,279.3 761.1,279.7 763.1,280.1 C765.1,280.6 768.1,281.3 769.1,281.6" stroke-width="1.6" opacity="0.54"/>
<path d="M261.0,201.0 C263.3,203.8 270.0,213.0 275.0,218.0 C280.0,223.0 285.5,227.5 291.0,231.0 C296.5,234.5 302.5,236.7 308.0,239.0 C313.5,241.3 317.5,242.8 324.0,245.0 C330.5,247.2 339.3,250.0 347.0,252.0 C354.7,254.0 366.2,256.2 370.0,257.0" stroke-width="1.2" opacity="0.8"/>
<path d="M243.0,206.0 C245.5,209.0 252.5,218.7 258.0,224.0 C263.5,229.3 269.0,233.8 276.0,238.0 C283.0,242.2 291.0,245.8 300.0,249.0 C309.0,252.2 321.3,255.0 330.0,257.0 C338.7,259.0 348.3,260.3 352.0,261.0" stroke-width="1.2" opacity="0.8"/>
<path d="M228.0,212.0 C230.3,214.8 236.3,223.8 242.0,229.0 C247.7,234.2 254.8,239.2 262.0,243.0 C269.2,246.8 277.0,249.5 285.0,252.0 C293.0,254.5 305.8,257.0 310.0,258.0" stroke-width="1.2" opacity="0.8"/>
<path d="M205.0,222.0 C207.8,224.3 215.3,231.7 222.0,236.0 C228.7,240.3 237.0,244.8 245.0,248.0 C253.0,251.2 265.8,253.8 270.0,255.0" stroke-width="1.2" opacity="0.8"/>
<path d="M300.0,196.0 C305.0,197.3 319.7,201.3 330.0,204.0 C340.3,206.7 351.2,209.7 362.0,212.0 C372.8,214.3 385.3,216.3 395.0,218.0 C404.7,219.7 415.8,221.3 420.0,222.0" stroke-width="1.2" opacity="0.8"/>
<path d="M310.0,190.0 C315.8,190.8 333.3,193.3 345.0,195.0 C356.7,196.7 369.2,198.2 380.0,200.0 C390.8,201.8 405.0,205.0 410.0,206.0" stroke-width="1.2" opacity="0.8"/>
<path d="M457.0,229.0 C460.8,230.5 472.0,234.5 480.0,238.0 C488.0,241.5 496.7,246.0 505.0,250.0 C513.3,254.0 522.5,258.5 530.0,262.0 C537.5,265.5 543.8,268.2 550.0,271.0 C556.2,273.8 564.2,277.7 567.0,279.0" stroke-width="1.2" opacity="0.8"/>
<path d="M470.0,225.0 C475.0,225.5 490.0,226.8 500.0,228.0 C510.0,229.2 520.0,230.3 530.0,232.0 C540.0,233.7 550.0,236.2 560.0,238.0 C570.0,239.8 585.0,242.2 590.0,243.0" stroke-width="1.2" opacity="0.8"/>
<path d="M395.0,243.0 C397.5,244.2 404.5,247.5 410.0,250.0 C415.5,252.5 422.2,255.3 428.0,258.0 C433.8,260.7 439.3,263.7 445.0,266.0 C450.7,268.3 459.2,271.0 462.0,272.0" stroke-width="1.2" opacity="0.8"/>
<path d="M560.0,262.0 C564.2,263.3 576.7,266.8 585.0,270.0 C593.3,273.2 602.8,277.3 610.0,281.0 C617.2,284.7 623.0,288.7 628.0,292.0 C633.0,295.3 638.0,299.5 640.0,301.0" stroke-width="1.2" opacity="0.8"/>
<path d="M600.0,272.0 C604.2,273.7 617.0,278.0 625.0,282.0 C633.0,286.0 642.2,292.0 648.0,296.0 C653.8,300.0 658.0,304.3 660.0,306.0" stroke-width="1.2" opacity="0.8"/>
<path d="M570.0,285.0 C573.3,285.8 583.0,287.8 590.0,290.0 C597.0,292.2 608.3,296.7 612.0,298.0" stroke-width="1.2" opacity="0.8"/>
<path d="M561.0,272.0 C562.2,273.0 565.8,275.7 568.0,278.0 C570.2,280.3 572.0,283.3 574.0,286.0 C576.0,288.7 579.0,292.7 580.0,294.0" stroke-width="1.2" opacity="0.8"/>
<path d="M597.0,281.0 C598.5,282.0 603.5,284.8 606.0,287.0 C608.5,289.2 610.2,291.7 612.0,294.0 C613.8,296.3 616.2,299.8 617.0,301.0" stroke-width="1.2" opacity="0.8"/>
<path d="M622.0,287.0 C624.0,287.5 630.0,288.5 634.0,290.0 C638.0,291.5 642.7,293.8 646.0,296.0 C649.3,298.2 652.7,301.8 654.0,303.0" stroke-width="1.2" opacity="0.8"/>
<path d="M585.0,283.0 C586.2,284.2 590.2,287.7 592.0,290.0 C593.8,292.3 595.3,295.8 596.0,297.0" stroke-width="1.2" opacity="0.8"/>
<path d="M640.0,262.0 C645.0,263.0 660.0,266.7 670.0,268.0 C680.0,269.3 690.8,270.0 700.0,270.0 C709.2,270.0 720.8,268.3 725.0,268.0" stroke-width="1.2" opacity="0.8"/>
<path d="M610.0,232.0 C615.0,233.0 630.0,235.5 640.0,238.0 C650.0,240.5 660.0,244.7 670.0,247.0 C680.0,249.3 695.0,251.2 700.0,252.0" stroke-width="1.2" opacity="0.8"/>
<path d="M402.7,197.4 q1.7,5.8 4.3,11.6" stroke-width="0.8" opacity="0.56"/>
<path d="M410.5,197.4 q1.7,5.0 5.7,10.0" stroke-width="1.2" opacity="0.52"/>
<path d="M421.0,198.5 q1.7,4.5 3.7,9.1" stroke-width="1.2" opacity="0.36"/>
<path d="M431.2,198.4 q0.7,4.3 6.9,8.6" stroke-width="1.2" opacity="0.52"/>
<path d="M440.2,201.9 q0.5,6.5 4.8,12.9" stroke-width="0.7" opacity="0.43"/>
<path d="M435.6,245.1 q0.4,3.0 4.3,6.0" stroke-width="0.8" opacity="0.69"/>
<path d="M446.2,248.0 q0.4,3.3 6.7,6.7" stroke-width="1.2" opacity="0.39"/>
<path d="M456.3,249.3 q1.8,2.7 6.7,5.5" stroke-width="1.0" opacity="0.36"/>
<path d="M610.6,215.2 q0.3,5.2 4.5,10.4" stroke-width="1.2" opacity="0.41"/>
<path d="M625.1,216.6 q0.4,3.4 5.6,6.8" stroke-width="1.0" opacity="0.58"/>
<path d="M637.6,218.4 q1.0,4.7 6.2,9.3" stroke-width="0.7" opacity="0.69"/>
<path d="M689.3,227.6 q1.6,8.4 6.9,16.8" stroke-width="1.2" opacity="0.69"/>
<path d="M701.9,228.2 q0.7,7.3 3.2,14.6" stroke-width="1.0" opacity="0.65"/>
<path d="M719.4,231.6 q1.6,7.8 3.9,15.7" stroke-width="0.8" opacity="0.41"/>
<path d="M734.0,233.4 q0.4,6.9 5.6,13.8" stroke-width="1.3" opacity="0.37"/>
    </g>
  </g>
  <use href="#pSide" fill="url(#gSide)"/>
  <g clip-path="url(#cSide)"><rect x="150" y="220" width="540" height="125" filter="url(#mottle2)" opacity="0.8"/><g transform="rotate(-55 420 280)"><rect x="100" y="-20" width="640" height="600" filter="url(#sgrain)" opacity="0.75"/></g></g>
  <path d="M672.3,314.0 C678.3,314.9 699.2,318.3 708.5,319.7 C717.8,321.1 724.8,321.9 728.0,322.4 L726.8,340.9 C723.8,340.4 717.4,339.2 708.5,337.8 C699.6,336.4 679.1,333.3 673.2,332.4 Z" fill="#b4703e"/>
  <g><path d="M673.6,315.3 L684.3,317.0 L678.9,320.4 Z" fill="#bd7a4c"/><path d="M673.6,315.3 L673.6,323.9 L678.9,320.4 Z" fill="#c98a5c"/><path d="M684.3,317.0 L684.3,325.5 L678.9,320.4 Z" fill="#9c542c"/><path d="M673.6,323.9 L684.3,325.5 L678.9,320.4 Z" fill="#8c4824"/><path d="M673.6,323.9 L684.3,325.5 L678.9,329.0 Z" fill="#bd7a4c"/><path d="M673.6,323.9 L673.6,332.5 L678.9,329.0 Z" fill="#c98a5c"/><path d="M684.3,325.5 L684.3,334.1 L678.9,329.0 Z" fill="#9c542c"/><path d="M673.6,332.5 L684.3,334.1 L678.9,329.0 Z" fill="#8c4824"/><path d="M684.3,317.0 L695.0,318.7 L689.6,322.1 Z" fill="#bd7a4c"/><path d="M684.3,317.0 L684.3,325.5 L689.6,322.1 Z" fill="#c98a5c"/><path d="M695.0,318.7 L695.0,327.2 L689.6,322.1 Z" fill="#9c542c"/><path d="M684.3,325.5 L695.0,327.2 L689.6,322.1 Z" fill="#8c4824"/><path d="M684.3,325.5 L695.0,327.2 L689.6,330.6 Z" fill="#bd7a4c"/><path d="M684.3,325.5 L684.3,334.1 L689.6,330.6 Z" fill="#c98a5c"/><path d="M695.0,327.2 L695.0,335.7 L689.6,330.6 Z" fill="#9c542c"/><path d="M684.3,334.1 L695.0,335.7 L689.6,330.6 Z" fill="#8c4824"/><path d="M695.0,318.7 L705.6,320.3 L700.3,323.8 Z" fill="#bd7a4c"/><path d="M695.0,318.7 L695.0,327.2 L700.3,323.8 Z" fill="#c98a5c"/><path d="M705.6,320.3 L705.6,328.8 L700.3,323.8 Z" fill="#9c542c"/><path d="M695.0,327.2 L705.6,328.8 L700.3,323.8 Z" fill="#8c4824"/><path d="M695.0,327.2 L705.6,328.8 L700.3,332.3 Z" fill="#bd7a4c"/><path d="M695.0,327.2 L695.0,335.7 L700.3,332.3 Z" fill="#c98a5c"/><path d="M705.6,328.8 L705.6,337.4 L700.3,332.3 Z" fill="#9c542c"/><path d="M695.0,335.7 L705.6,337.4 L700.3,332.3 Z" fill="#8c4824"/><path d="M705.6,320.3 L716.3,321.9 L711.0,325.4 Z" fill="#bd7a4c"/><path d="M705.6,320.3 L705.6,328.8 L711.0,325.4 Z" fill="#c98a5c"/><path d="M716.3,321.9 L716.3,330.5 L711.0,325.4 Z" fill="#9c542c"/><path d="M705.6,328.8 L716.3,330.5 L711.0,325.4 Z" fill="#8c4824"/><path d="M705.6,328.8 L716.3,330.5 L711.0,333.9 Z" fill="#bd7a4c"/><path d="M705.6,328.8 L705.6,337.4 L711.0,333.9 Z" fill="#c98a5c"/><path d="M716.3,330.5 L716.3,339.1 L711.0,333.9 Z" fill="#9c542c"/><path d="M705.6,337.4 L716.3,339.1 L711.0,333.9 Z" fill="#8c4824"/><path d="M716.3,321.9 L727.0,323.4 L721.7,327.0 Z" fill="#bd7a4c"/><path d="M716.3,321.9 L716.3,330.5 L721.7,327.0 Z" fill="#c98a5c"/><path d="M727.0,323.4 L727.0,332.1 L721.7,327.0 Z" fill="#9c542c"/><path d="M716.3,330.5 L727.0,332.1 L721.7,327.0 Z" fill="#8c4824"/><path d="M716.3,330.5 L727.0,332.1 L721.7,335.7 Z" fill="#bd7a4c"/><path d="M716.3,330.5 L716.3,339.1 L721.7,335.7 Z" fill="#c98a5c"/><path d="M727.0,332.1 L727.0,340.9 L721.7,335.7 Z" fill="#9c542c"/><path d="M716.3,339.1 L727.0,340.9 L721.7,335.7 Z" fill="#8c4824"/></g>
  <path d="M673.2,314.2 L673.2,332.4" stroke="#1a0c04" stroke-width="1.2"/>
  <path d="M771.5,235.9 L771.0,254.2 L726.8,340.9 L728.0,322.4 Z" fill="url(#gEnd)"/>
  <use href="#pTop" fill="none" stroke="#140a04" stroke-width="1.1"/>
  <path d="M166.8,242.3 C167.9,243.0 169.0,244.2 173.1,246.6 C177.2,249.0 185.2,254.0 191.2,257.0 C197.2,260.0 203.2,262.5 209.2,264.7 C215.2,266.9 221.3,268.7 227.3,270.2 C233.3,271.7 239.4,272.8 245.4,273.8 C251.4,274.9 257.5,275.7 263.5,276.5 C269.5,277.3 275.5,278.0 281.6,278.7 C287.7,279.4 290.9,279.7 300.0,280.6 C309.1,281.5 324.1,282.9 336.2,283.9 C348.2,284.9 360.2,285.4 372.3,286.4 C384.4,287.4 396.4,288.5 408.5,289.7 C420.6,290.9 436.1,292.4 444.7,293.3 C453.3,294.2 453.1,294.0 460.0,295.1 C466.9,296.2 475.8,297.9 486.2,299.7 C496.6,301.5 510.2,304.1 522.3,306.1 C534.3,308.1 546.4,309.8 558.5,311.7 C570.6,313.6 586.1,316.2 594.7,317.6 C603.3,319.0 603.1,319.0 610.0,320.3 C616.9,321.6 625.7,323.7 636.2,325.7 C646.7,327.7 661.2,330.4 673.2,332.4 C685.2,334.4 699.6,336.4 708.5,337.8 C717.4,339.2 723.8,340.4 726.8,340.9 L771.0,254.2 L771.5,235.9 M726.8,340.9 L728.0,322.4 M162.2,230.7 L166.8,242.3" fill="none" stroke="#140a04" stroke-width="1.1"/>
  <path d="M594.7,299.3 C603.3,300.7 603.1,300.5 610.0,301.9  C616.9,303.3 625.8,305.6 636.2,307.6  C646.6,309.6 660.2,312.0 672.3,314.0  C684.3,316.0 699.2,318.3 708.5,319.7  C717.8,321.1 724.8,321.9 728.0,322.4 L771.5,235.9 M728,322.4 L726.8,340.9" fill="none" stroke="#140a04" stroke-width="1.5" stroke-linejoin="round"/>
</g>
</svg>
<svg id="icons" width="1024" height="553" viewBox="0 0 1024 553">
<line x1="5.5" y1="29" x2="5.5" y2="46" stroke="#c9c9c9" stroke-width="1" stroke-dasharray="1 1"/>
<g transform="translate(11 31)"><path d="M0.5,1 L6,0 L11,2.5 L9.5,9.5 L3,11 Z" fill="#e2132b"/><path d="M3,3.2 L8,2.6 L7.8,4 L4.6,4.4 L4.8,5.4 L7.6,5 L7.2,8.2 L3.4,8.8" fill="none" stroke="#fff" stroke-width="1.1"/><circle cx="8.6" cy="8.8" r="3.4" fill="#fff" stroke="#111" stroke-width="1"/><path d="M8.6,6.6 V11 M6.4,8.8 H10.8" stroke="#111" stroke-width="1.1"/></g>
<g transform="translate(29 31)"><path d="M2,2.5 L8.5,1.5 L9.5,8 L3,9 Z" fill="#f4f4f4" stroke="#bbb" stroke-width="0.4"/><path d="M2.2,2.6 L4.5,1 L5,3.2 Z" fill="#1f8a3a"/><circle cx="6.6" cy="5" r="1.7" fill="#d83a4a"/><path d="M0,5 L3,4.4 L4,5.6 L12.5,4.4 L9.6,11 L0.6,12 Z" fill="#7c7a66"/><path d="M0,5 L0.6,12 L2.2,6.6 L12.5,4.4 L4,5.6 L3,4.4Z" fill="#5e5c4c"/></g>
<g transform="translate(47.4 31)"><path d="M0.2,1 L10.4,0.2 L11.2,10.6 L1.6,11.4 Z" fill="#2f6fd0"/><path d="M0.2,1 L10.4,0.2 L10.5,1.4 L0.4,2.2Z" fill="#1d4fa6"/><path d="M2.4,1.4 L8.8,0.9 L9.2,5.6 L2.8,6.1 Z" fill="#f4f6fa"/><path d="M3.6,7.6 L8.8,7.2 L9.1,10.7 L3.9,11.1 Z" fill="#3a3a3a"/><rect x="4.6" y="8" width="1.5" height="2.5" fill="#d8d8d8" transform="rotate(-4 5 9)"/></g>
<line x1="63.8" y1="29.5" x2="63.8" y2="45" stroke="#b4b4b4" stroke-width="1"/>
<g transform="translate(69.6 31)"><path d="M11.5,1.2 L4.6,7 M6.2,0.6 L7.4,7.6" stroke="#a8a8a8" stroke-width="1.1" fill="none"/><circle cx="2.4" cy="6.6" r="1.7" fill="none" stroke="#a0a0a0" stroke-width="1"/><circle cx="6.8" cy="9.6" r="1.7" fill="none" stroke="#a0a0a0" stroke-width="1"/></g>
<g transform="translate(87.8 31)"><path d="M1,1.2 L5,0.4 L7,2.4 L6,6 L2.4,6.4 Z" fill="#c9c9c9" stroke="#a4a4a4" stroke-width="0.8"/><path d="M5,4.6 L9.6,3.8 L11.6,6 L10.4,10.4 L6,11.2 L4.6,8 Z" fill="#cfcfcf" stroke="#a0a0a0" stroke-width="0.8"/><path d="M6.4,6.6 L9.6,6.2 L9.2,9 L6.8,9.3Z" fill="#e6e6e6"/></g>
<g transform="translate(107 31)"><path d="M0.6,1.6 L7.4,0.8 L7.8,10.6 L0.9,11.2 Z" fill="#dcdcdc" stroke="#a8a8a8" stroke-width="0.9"/><path d="M2.4,0.4 L5.6,0.1 L5.7,1.8 L2.5,2.1Z" fill="#b4b4b4"/><path d="M3.4,5 L5.6,4.8 L5.7,8.2 L3.6,8.4Z" fill="#f2f2f2" stroke="#b0b0b0" stroke-width="0.5"/></g>
<g transform="translate(124.3 31)"><circle cx="5.8" cy="6.1" r="5.4" fill="#f4f4f4" stroke="#a6a6a6" stroke-width="1"/><path d="M2.3,2.6 L9.3,9.6 M9.3,2.6 L2.3,9.6" stroke="#a6a6a6" stroke-width="1"/></g>
<line x1="140.5" y1="29.5" x2="140.5" y2="45" stroke="#b4b4b4" stroke-width="1"/>
<g transform="translate(146.4 31)"><path d="M11.6,8.6 C11.8,4.6 9,2.8 5.6,3.1 L5.6,0.2 L0,4.4 L5.6,8.2 L5.6,5.6 C8,5.5 9,6.8 8.4,8.4 Z" fill="#1b7be0"/><path d="M8.4,8.4 C7.6,10 6.6,10.8 5,11.2 C7.4,12.2 11,11.6 11.6,8.6 C11,7.4 9.4,7.4 8.4,8.4Z" fill="#4e5a3a"/></g>
<g transform="translate(164 31)"><path d="M0.2,8.6 C0,4.6 2.8,2.8 6.2,3.1 L6.2,0.2 L11.8,4.4 L6.2,8.2 L6.2,5.6 C3.8,5.5 2.8,6.8 3.4,8.4 Z" fill="#c2c2c2"/><path d="M3.4,8.4 C4.2,10 5.2,10.8 6.8,11.2 C4.4,12.2 0.8,11.6 0.2,8.6 C0.8,7.4 2.4,7.4 3.4,8.4Z" fill="#b0b0b0"/></g>
<line x1="180.6" y1="29.5" x2="180.6" y2="45" stroke="#b4b4b4" stroke-width="1"/>
<g transform="translate(186.2 31)"><path d="M4.4,1 L10.4,0.2 L12.2,3.6 L6.4,4.8 Z" fill="#f6f6f6" stroke="#999" stroke-width="0.4"/><path d="M0,5 L4.6,1.8 L6.6,5 L12.8,3.8 L12.4,8.2 L6.2,11.6 L0.6,9.6 Z" fill="#2b2b2b"/><path d="M1.8,8.6 L5.6,9.8 L5.4,11.2 L1.6,10 Z" fill="#e8e8e8"/><path d="M6.6,5 L12.8,3.8 L12.6,5.2 L6.6,6.6Z" fill="#4a4a4a"/></g>
<line x1="203.5" y1="29.5" x2="203.5" y2="45" stroke="#b4b4b4" stroke-width="1"/>
<g transform="translate(209 31)"><path d="M0.5,1 L6,0 L11,2.5 L9.5,9.5 L3,11 Z" fill="#e2132b"/><path d="M3,3.2 L8,2.6 L7.8,4 L4.6,4.4 L4.8,5.4 L7.6,5 L7.2,8.2 L3.4,8.8" fill="none" stroke="#fff" stroke-width="1.1"/><circle cx="8.6" cy="8.8" r="3.4" fill="#1650a8" stroke="#0c2c66" stroke-width="0.5"/><path d="M8.6,7.9 V10.8" stroke="#fff" stroke-width="1.2"/><circle cx="8.6" cy="6.8" r="0.7" fill="#fff"/></g>
<line x1="225" y1="29" x2="225" y2="46" stroke="#c9c9c9" stroke-width="1" stroke-dasharray="1 1"/>
<line x1="227.9" y1="29" x2="227.9" y2="46" stroke="#c9c9c9" stroke-width="1" stroke-dasharray="1 1"/>
<g transform="translate(234.1 31)"><path d="M3.2,8.4 L9.6,5.6 L12,8.6 L5.6,12 Z" fill="#161616"/><path d="M0.2,3.4 L6,0.2 L9.8,5 L3.6,8.6 Z" fill="#fdfdfd" stroke="#222" stroke-width="0.8"/><path d="M3.6,8.6 L9.8,5 L10,6.6 L4.2,10Z" fill="#222"/></g>
<defs><linearGradient id="gMon" x1="0" x2="1" y1="0" y2="0"><stop offset="0" stop-color="#fff8e0"/><stop offset="0.2" stop-color="#ffd870"/><stop offset="0.44" stop-color="#f6a000"/><stop offset="0.47" stop-color="#ff5a00"/><stop offset="0.72" stop-color="#ff0a0a"/><stop offset="0.9" stop-color="#ff9aa0"/><stop offset="1" stop-color="#ffe6e6"/></linearGradient><linearGradient id="gTime" x1="0" x2="1" y1="0" y2="0"><stop offset="0" stop-color="#ffffff"/><stop offset="0.3" stop-color="#bcd4ee"/><stop offset="0.58" stop-color="#5c8fe2"/><stop offset="0.62" stop-color="#4a63f2"/><stop offset="0.8" stop-color="#2a2e9a"/><stop offset="1" stop-color="#000000"/></linearGradient></defs>
<rect x="253" y="31.2" width="98" height="3.3" fill="url(#gMon)"/><rect x="253" y="31" width="98" height="0.8" fill="#7a7a7a" opacity="0.8"/><rect x="253" y="31" width="0.8" height="4.2" fill="#8a8a8a"/>
<rect x="296.6" y="29.4" width="2.4" height="8" rx="0.8" fill="#fff" stroke="#b0b0b0" stroke-width="0.5"/>
<g font-family="Liberation Sans, sans-serif" font-weight="bold" font-size="5.4" fill="#2c2c44" text-anchor="middle"><text x="256.8" y="40.3">J</text><text x="265.4" y="40.3">F</text><text x="273.3" y="40.3">M</text><text x="281.3" y="40.3">A</text><text x="289.5" y="40.3">M</text><text x="296.9" y="40.3">J</text><text x="305.3" y="40.3">J</text><text x="312.9" y="40.3">A</text><text x="321.4" y="40.3">S</text><text x="329.3" y="40.3">O</text><text x="337.5" y="40.3">N</text><text x="345.3" y="40.3">D</text></g>
<rect x="361.5" y="31.2" width="98" height="3.3" fill="url(#gTime)"/><rect x="361.5" y="31" width="98" height="0.8" fill="#6a6a6a" opacity="0.8"/><rect x="361.5" y="31" width="0.8" height="4.2" fill="#8a8a8a"/>
<rect x="419" y="29.4" width="2.4" height="8" rx="0.8" fill="#fff" stroke="#b0b0b0" stroke-width="0.5"/>
<text x="411.2" y="40.2" font-family="Liberation Sans, sans-serif" font-weight="bold" font-size="5.2" fill="#2c2c44" text-anchor="middle">Noon</text>
<line x1="466.4" y1="29" x2="466.4" y2="46" stroke="#c9c9c9" stroke-width="1" stroke-dasharray="1 1"/>
<line x1="469.4" y1="29" x2="469.4" y2="46" stroke="#c9c9c9" stroke-width="1" stroke-dasharray="1 1"/>
<g transform="translate(475.2 31)"><path d="M0.6,3.6 L7.4,0.2 L11.8,4.6 L10.4,9 L4.8,11.6 Z" fill="#6fa0cc" stroke="#2c3e50" stroke-width="0.9" stroke-linejoin="round"/><path d="M0.6,3.6 L5.6,6.2 L11.8,4.6 M5.6,6.2 L4.8,11.6" fill="none" stroke="#3a5a7a" stroke-width="0.6"/></g>
<g transform="translate(493.6 31)"><path d="M0.6,3.6 L7.4,0.2 L11.8,4.6 L10.4,9 L4.8,11.6 Z" fill="#fbfbfb" stroke="#a8a8a8" stroke-width="0.8" stroke-linejoin="round"/><path d="M0.6,3.6 L5.6,6.2 L11.8,4.6 M5.6,6.2 L4.8,11.6" fill="none" stroke="#c4c4c4" stroke-width="0.6" stroke-dasharray="1 0.8"/></g>
<line x1="509.5" y1="29.5" x2="509.5" y2="45" stroke="#b4b4b4" stroke-width="1"/>
<g transform="translate(515.8 31)"><path d="M0.6,3.6 L7.4,0.2 L11.8,4.6 L10.4,9 L4.8,11.6 Z" fill="none" stroke="#4a4a4a" stroke-width="0.8" stroke-linejoin="round"/><path d="M0.6,3.6 L5.6,6.2 L11.8,4.6 M5.6,6.2 L4.8,11.6 M7.4,0.2 L6.4,5.4 L10.4,9 M6.4,5.4 L0.6,3.6" fill="none" stroke="#4a4a4a" stroke-width="0.7"/></g>
<g transform="translate(534.2 31)"><path d="M0.6,3.6 L7.4,0.2 L11.8,4.6 L10.4,9 L4.8,11.6 Z" fill="#fdfdfd" stroke="#333" stroke-width="0.9" stroke-linejoin="round"/><path d="M0.6,3.6 L5.6,6.2 L11.8,4.6 M5.6,6.2 L4.8,11.6" fill="none" stroke="#555" stroke-width="0.6"/></g>
<g transform="translate(552.2 31)"><path d="M0.6,3.6 L7.4,0.2 L11.8,4.6 L10.4,9 L4.8,11.6 Z" fill="#8e8c7c" stroke="#5a584c" stroke-width="0.7" stroke-linejoin="round"/><path d="M0.6,3.6 L7.4,0.2 L11.8,4.6 L5.6,6.2Z" fill="#a6a494"/><path d="M0.6,3.6 L5.6,6.2 L4.8,11.6Z" fill="#6e6c5e"/></g>
<rect x="567" y="28.2" width="18.2" height="17.8" fill="#cce4f7"/>
<g transform="translate(570.8 31)"><path d="M0.6,3.6 L7.4,0.2 L11.8,4.6 L10.4,9 L4.8,11.6 Z" fill="#262626" stroke="#1a1a1a" stroke-width="0.7" stroke-linejoin="round"/><path d="M1.6,5.2 L6,7.4 L11,6 M1.2,7.4 L5.4,9.6 L10.6,8" stroke="#c8c4b0" stroke-width="1.1" fill="none"/><path d="M0.6,3.6 L7.4,0.2 L11.8,4.6 L5.6,6.2Z" fill="#3a3a3a"/></g>
<g transform="translate(588.4 31)"><path d="M0.6,3.6 L7.4,0.2 L11.8,4.6 L10.4,9 L4.8,11.6 Z" fill="#a09a8a" stroke="#6a6a6a" stroke-width="0.5" stroke-linejoin="round"/><path d="M0.6,3.6 L7.4,0.2 L11.8,4.6 L5.6,6.2Z" fill="#2a8be2"/><path d="M5.6,6.2 L11.8,4.6 L10.4,9 L4.8,11.6Z" fill="#1f6fc0"/><path d="M0.6,3.6 L5.6,6.2 L4.8,11.6Z" fill="#b4ad9c"/></g>
<line x1="604.5" y1="29" x2="604.5" y2="46" stroke="#c9c9c9" stroke-width="1" stroke-dasharray="1 1"/>
<line x1="606.9" y1="29" x2="606.9" y2="46" stroke="#c9c9c9" stroke-width="1" stroke-dasharray="1 1"/>
<rect x="609.8" y="28.6" width="17.6" height="16.8" fill="#dfe0f4"/>
<defs><radialGradient id="gDome" cx="0.45" cy="0.35" r="0.7"><stop offset="0" stop-color="#a8b8cc"/><stop offset="1" stop-color="#56687e"/></radialGradient></defs>
<circle cx="618.6" cy="35.6" r="5.6" fill="url(#gDome)"/>
<path d="M610.5,38.4 h4.2 v1.6 h-4.2z M622.6,38.4 h4.2 v1.6 h-4.2z M612.4,41 h12.6 v1.5 h-12.6z M610.5,43.6 h4.4 v1.6 h-4.4z M622.4,43.6 h4.4 v1.6 h-4.4z" fill="#141414"/><path d="M610.5,40 h16.4 v1 h-16.4z M610.5,42.5 h16.4 v1.1 h-16.4z" fill="#f4f4f4"/>
<line x1="629.8" y1="29.5" x2="629.8" y2="45" stroke="#b4b4b4" stroke-width="1"/>
<defs><linearGradient id="gGr" x1="0" x2="0.3" y1="0" y2="1"><stop offset="0" stop-color="#9a9a9a"/><stop offset="1" stop-color="#2e2e2e"/></linearGradient></defs>
<path d="M638,32.6 L644.8,32.2 L645.2,40.4 L642.6,40.8 L642.4,39.4 L638.6,39.6 Z" fill="url(#gGr)"/>
<line x1="651.8" y1="29.5" x2="651.8" y2="45" stroke="#b4b4b4" stroke-width="1"/>
<g transform="translate(656.7 30)"><path d="M0.4,8 L2.8,2.6 L6,4 L4,10.6Z" fill="#f58ad0"/><path d="M1.6,6.6 L3.6,1.6 L7,2.6 L5,9.4Z" fill="#38d838"/><path d="M3.2,5.4 L4.6,1 L8,1.6 L6.6,8.6Z" fill="#f8f020"/><path d="M5.2,5 L6,0.6 L9,1 L8.2,8Z" fill="#3c6cf0"/><path d="M7.4,0.4 L13.6,2.2 L11,12 L5.6,10.2 Z" fill="#f21622"/></g>
<line x1="674.2" y1="29.5" x2="674.2" y2="45" stroke="#b4b4b4" stroke-width="1"/>
<g transform="translate(679.4 31)"><circle cx="6.2" cy="6" r="4.6" fill="#d2d2d2" stroke="#c0c0c0" stroke-width="1.6" stroke-dasharray="1.8 1.2"/><circle cx="6.2" cy="6" r="1.8" fill="#ececec" stroke="#c4c4c4" stroke-width="0.6"/><path d="M6.2,6 L9.4,4" stroke="#e8e8e8" stroke-width="0.8"/></g>
<line x1="696.4" y1="29.5" x2="696.4" y2="45" stroke="#b4b4b4" stroke-width="1"/>
<g transform="translate(702.6 31)"><path d="M1.2,11 L10.6,2" stroke="#bdbdbd" stroke-width="2.4" stroke-linecap="round"/><path d="M1.6,10.6 L10.2,2.4" stroke="#ededed" stroke-width="1"/><circle cx="11" cy="1.8" r="1.6" fill="#d2d2d2"/></g>
<line x1="718.4" y1="29.5" x2="718.4" y2="45" stroke="#b4b4b4" stroke-width="1"/>
<g transform="translate(723.9 30.5)"><path d="M1,4.6 L6,0.4 L13.6,6.6 L7.6,13.4 L2,10.4 Z" fill="#bf8f52"/><path d="M1,4.6 L6,0.4 L8,2 L3,6.4Z" fill="#a87a42"/><path d="M7.6,13.4 L13.6,6.6 L13.8,8 L8,14.2Z" fill="#8e6636"/><circle cx="6.6" cy="6.4" r="2.6" fill="#8c8cf0"/><circle cx="3.8" cy="6" r="1.1" fill="#f4e020"/><circle cx="9.6" cy="6.4" r="1.2" fill="#e82030"/></g>
<g transform="translate(744 30)"><path d="M4.8,0 C8.6,0 10.2,3.6 8.6,6.4 C7.6,8.2 7.4,9 7.2,10.6 L2.8,10.6 C2.6,9 2.2,8.2 1.2,6.4 C-0.6,3.6 1.2,0 4.8,0Z" fill="#f2f020" stroke="#c8c430" stroke-width="0.5"/><rect x="3" y="10.8" width="4" height="2.6" rx="0.8" fill="#c9c9a8" stroke="#9a9a8a" stroke-width="0.4"/></g>
<line x1="758.5" y1="29" x2="758.5" y2="46" stroke="#c9c9c9" stroke-width="1" stroke-dasharray="1 1"/>
<line x1="761.4" y1="29" x2="761.4" y2="46" stroke="#c9c9c9" stroke-width="1" stroke-dasharray="1 1"/>
<g transform="translate(767.9 31)"><rect x="0" y="0.2" width="11" height="11.2" fill="#2e4a2a"/><rect x="0.8" y="1" width="4" height="9.6" fill="#5d8a3a"/><path d="M6,1.4 h3.4 v4 h1.2 l-2.9,3.8 l-2.9,-3.8 h1.2z" fill="#1f8cf0"/><rect x="1.4" y="7.4" width="3" height="2.4" fill="#c8b040"/><rect x="1.6" y="2" width="1.6" height="3" fill="#28401e"/></g>
<g transform="translate(785.2 31)"><path d="M0.2,2.6 L7,1.2 L11.8,5.6 L6,11.4 Z" fill="#cfcfcf" stroke="#bcbcbc" stroke-width="0.6"/><path d="M2.4,3.6 L6.4,8.6 M4.6,2.6 L8.4,7 M6.8,2 L10,5.8" stroke="#e4e4e4" stroke-width="0.6"/></g>
<g transform="translate(803.2 30.7)"><path d="M2.6,0.6 L5.2,0.2 L5.8,8.8 L8,10.6 L8,12 L0.4,12.2 L0.4,10.8 L2.4,9 Z" fill="#cccccc" stroke="#bababa" stroke-width="0.4"/><path d="M8,2.6 h2.6 v3.4 h1.4 l-2.7,3 l-2.7,-3 h1.4z" fill="#c4c4c4"/></g>
<line x1="819.2" y1="28.5" x2="819.2" y2="46.5" stroke="#c6c6c6" stroke-width="1"/>
<line x1="822.1" y1="29" x2="822.1" y2="46" stroke="#c9c9c9" stroke-width="1" stroke-dasharray="1 1"/>
<g transform="translate(827.8 31)"><path d="M1.4,9.6 C3,8.6 8.6,8.6 11.4,9.4 L11,11.6 C8,12.4 3.6,12.4 1.6,11.6Z" fill="#6ad040"/><ellipse cx="6.6" cy="7.2" rx="3.8" ry="2.6" fill="#f4f4f4" stroke="#999" stroke-width="0.4"/><ellipse cx="3" cy="6.6" rx="2.4" ry="1.8" fill="#1e1e1e"/><ellipse cx="8" cy="3.6" rx="2.6" ry="2.2" fill="#2a2a2a"/><path d="M5.6,2 L7.6,0.4 L8.8,2.4Z" fill="#d8783a"/><circle cx="9.6" cy="7.8" r="1" fill="#222"/></g>
<path d="M843.5,28 V47.2 M3,47.2 H843.5" stroke="#d6d6d6" stroke-width="1" stroke-dasharray="1 1" fill="none"/>
<path d="M958.6,8.2 h7" stroke="#333" stroke-width="0.9"/><rect x="984.2" y="5.2" width="5.4" height="5.4" fill="none" stroke="#333" stroke-width="0.9"/><path d="M1008.6,5.2 l5.4,5.4 M1014,5.2 l-5.4,5.4" stroke="#333" stroke-width="0.9"/>
<path d="M7.6,5 L12.4,4.2 L14.9,5.2 L14,10.8 L9.6,12 L8,11 Z" fill="#e2132b"/><path d="M9.6,6.6 L13.2,6 L13.1,7 L10.8,7.4 L10.9,8 L12.9,7.7 L12.6,10 L9.8,10.5" fill="none" stroke="#fff" stroke-width="0.85"/>
<line x1="5.5" y1="94.4" x2="39" y2="94.4" stroke="#cdcdcd" stroke-width="1"/>
<line x1="5.5" y1="189.4" x2="39" y2="189.4" stroke="#cdcdcd" stroke-width="1"/>
<line x1="5.5" y1="248.2" x2="39" y2="248.2" stroke="#cdcdcd" stroke-width="1"/>
<line x1="5.5" y1="306.6" x2="39" y2="306.6" stroke="#cdcdcd" stroke-width="1"/>
<line x1="5.5" y1="365.8" x2="39" y2="365.8" stroke="#cdcdcd" stroke-width="1"/>
<line x1="5.5" y1="405.6" x2="39" y2="405.6" stroke="#cdcdcd" stroke-width="1"/>
<line x1="5.5" y1="445" x2="39" y2="445" stroke="#cdcdcd" stroke-width="1"/>
<rect x="3.6" y="57.2" width="18.2" height="17.8" fill="#cce4f7"/>
<g transform="translate(12.7 66.4)"><path d="M-1.6,-4.6 L-1.6,3.6 L0.3,1.9 L1.8,5.2 L3.2,4.6 L1.7,1.4 L4.2,1.2 Z" fill="#111"/></g>
<g transform="translate(31 66.4)"><path d="M-5.4,-2.6 L0.8,-5 L5.2,-1.8 L3.8,3.4 L-2.4,5.2 Z" fill="#e6e6e6" stroke="#b4b4b4" stroke-width="0.9"/><path d="M-5.4,-2.6 L-0.8,0.4 L5.2,-1.8 M-0.8,0.4 L-2.4,5.2" fill="none" stroke="#b8b8b8" stroke-width="0.8"/></g>
<g transform="translate(12.7 84.4)"><ellipse cx="1.6" cy="0.6" rx="4.4" ry="4.6" fill="#8a8a7c" stroke="#222" stroke-width="0.9"/><ellipse cx="1.2" cy="-2.6" rx="3.6" ry="1.8" fill="#3a3a34" stroke="#111" stroke-width="0.6"/><path d="M-5.8,0.4 C-5,-3.6 -1.6,-5.2 1.6,-4 C-1,-2.6 -2.6,0.6 -2.2,4.8 C-4.6,4.8 -6.2,3 -5.8,0.4Z" fill="#f2c81e" stroke="#4a3c08" stroke-width="0.5"/><circle cx="3.2" cy="1.6" r="1" fill="#222"/></g>
<g transform="translate(31 84.4)"><path d="M-6,1.2 L2,-5 L6.4,-3.2 L6,-0.4 L-1.6,5.6 L-5.8,3.8 Z" fill="#f08fb0" stroke="#c05c80" stroke-width="0.5"/><path d="M-6,1.2 L2,-5 L6.4,-3.2 L-1.6,3 Z" fill="#f7b4cb"/></g>
<g transform="translate(12.7 107)"><path d="M-5,5.4 L-3.8,2.4 L3.8,-5.2 L5.4,-3.6 L-2,3.8 Z" fill="#d8202c" stroke="#7a1018" stroke-width="0.4"/><path d="M-5,5.4 L-3.8,2.4 L-2,3.8Z" fill="#3a2a1a"/><path d="M3.8,-5.2 L5.4,-3.6 L4.4,-2.6 L2.8,-4.2Z" fill="#444"/></g>
<g transform="translate(31 107)"><path d="M-5.6,5.6 C-6,1 -3,-0.6 -1.8,1.6 C-0.6,4 2.2,4.6 2.8,2 C3.4,-0.6 0.8,-1.8 1.6,-4 C2.4,-6 5.6,-5.6 5.8,-2.6" fill="none" stroke="#e2132b" stroke-width="1.1"/><circle cx="-5.6" cy="5.6" r="0.9" fill="#e2132b"/></g>
<g transform="translate(12.7 125)"><rect x="-4.8" y="-5.4" width="10.2" height="10.8" fill="#8c8a7a"/><path d="M-4.8,5.4 L5.4,-5.4" stroke="#f06a78" stroke-width="0.9"/><circle cx="-4.8" cy="5.4" r="0.9" fill="#e2132b"/><circle cx="5.4" cy="-5.4" r="0.9" fill="#e2132b"/></g>
<g transform="translate(31 125)"><rect x="-4.6" y="-5.4" width="9.4" height="10.8" fill="#8c8a7a"/><path d="M-4.6,-5.4 C0,-4.6 3.6,-1 4.8,5.4" fill="none" stroke="#f06a78" stroke-width="0.9"/><path d="M-4.6,-5.4 V5.4" stroke="#e2132b" stroke-width="0.9" stroke-dasharray="1.4 1"/><circle cx="-4.6" cy="5.4" r="0.9" fill="#e2132b"/><circle cx="-4.6" cy="-5.4" r="0.9" fill="#e2132b"/></g>
<g transform="translate(12.7 143)"><circle r="5.8" fill="#8c8a7a" stroke="#5e5c50" stroke-width="0.6"/><path d="M0,0 L4.2,-4" stroke="#f06a78" stroke-width="0.9"/><circle r="0.9" fill="#e2132b"/></g>
<g transform="translate(31 143)"><path d="M-2.4,-5.6 L2.6,-5.6 L5.8,-2 L5.6,2.6 L2.2,5.6 L-2.6,5.4 L-5.8,2 L-5.6,-2.4 Z" fill="#8c8a7a" stroke="#e2132b" stroke-width="0.8"/><path d="M0,0 L4,-3.8" stroke="#f06a78" stroke-width="0.9"/><circle r="0.9" fill="#e2132b"/></g>
<g transform="translate(12.7 161)"><path d="M-5.2,5 C1.6,4.6 5.4,0 5.6,-5.2" fill="none" stroke="#333" stroke-width="0.9"/><path d="M-5.2,-5.2 L5.6,-5.2 L-5.2,5" fill="none" stroke="#f06a78" stroke-width="0.8"/><circle cx="-5.2" cy="-5.2" r="0.9" fill="#e2132b"/><circle cx="5.6" cy="-5.2" r="0.9" fill="#e2132b"/><circle cx="-5.2" cy="5" r="0.9" fill="#e2132b"/></g>
<g transform="translate(31 161)"><path d="M-5,5 C-5.6,-1 -1,-5.4 5.4,-3.4" fill="none" stroke="#333" stroke-width="0.9"/><path d="M-5,5 L5.4,-3.4 M-1.8,-2.8 L0.4,0.6" fill="none" stroke="#e2132b" stroke-width="0.8"/><circle cx="-5" cy="5" r="0.9" fill="#e2132b"/><circle cx="5.4" cy="-3.4" r="0.9" fill="#e2132b"/><circle cx="-1.8" cy="-2.8" r="0.8" fill="#e2132b"/></g>
<g transform="translate(12.7 179)"><path d="M-3.6,-4.6 C2,-7 7.4,-1 4.4,4.6 " fill="none" stroke="#333" stroke-width="0.9"/><path d="M-5,2.6 C-2.6,5.8 1.6,6.2 4.4,4.6" fill="none" stroke="#333" stroke-width="0.9"/><path d="M-3.6,-4.6 L4.4,4.6 L-5,2.6" fill="none" stroke="#e2132b" stroke-width="0.8"/><circle cx="-3.6" cy="-4.6" r="0.9" fill="#e2132b"/><circle cx="4.4" cy="4.6" r="0.9" fill="#e2132b"/><circle cx="-5" cy="2.6" r="0.9" fill="#e2132b"/></g>
<g transform="translate(31 179)"><path d="M-5.4,-5 L5.6,-5 C5.4,1.6 1,5.2 -5.4,5.4 Z" fill="#8c8a7a" stroke="#55534a" stroke-width="0.6"/><path d="M-5.4,5.4 L5.6,-5 M-5.4,-5 V5.4" stroke="#f06a78" stroke-width="0.8" fill="none"/><circle cx="-5.4" cy="-5" r="0.9" fill="#e2132b"/><circle cx="5.6" cy="-5" r="0.9" fill="#e2132b"/><circle cx="-5.4" cy="5.4" r="0.9" fill="#e2132b"/></g>
<g transform="translate(12.7 201.5)"><path d="M0,-6 L2.2,-3 L0.9,-3 L0.9,-0.9 L3,-0.9 L3,-2.2 L6,0 L3,2.2 L3,0.9 L0.9,0.9 L0.9,3 L2.2,3 L0,6 L-2.2,3 L-0.9,3 L-0.9,0.9 L-3,0.9 L-3,2.2 L-6,0 L-3,-2.2 L-3,-0.9 L-0.9,-0.9 L-0.9,-3 L-2.2,-3 Z" fill="#e2132b" stroke="#a00c1c" stroke-width="0.3"/></g>
<g transform="translate(31 201.5)"><path d="M-6,1.6 L0,-1.2 L6,1.6 L0,4.8 Z" fill="#6f6d60"/><path d="M-6,1.6 L0,4.8 L0,6.4 L-6,3.2Z" fill="#3e3d36"/><path d="M6,1.6 L0,4.8 L0,6.4 L6,3.2Z" fill="#55534a"/><path d="M0,-6.4 L2.6,-2.6 L1,-2.6 L1,2 L-1,2 L-1,-2.6 L-2.6,-2.6 Z" fill="#e2132b"/></g>
<g transform="translate(12.7 220)"><path d="M-5,-0.6 C-4.6,-4.4 0.6,-6 3.4,-3.4" fill="none" stroke="#e2132b" stroke-width="2"/><path d="M1.6,-1.8 L5.6,-1.2 L5.2,-5.6 Z" fill="#e2132b"/><path d="M5,0.6 C4.6,4.4 -0.6,6 -3.4,3.4" fill="none" stroke="#e2132b" stroke-width="2"/><path d="M-1.6,1.8 L-5.6,1.2 L-5.2,5.6 Z" fill="#e2132b"/></g>
<g transform="translate(31 220)"><path d="M-5.6,3.6 C-6.4,-2.6 -1,-6.4 5.4,-4.2 L5.8,-0.6 C1.4,-2.6 -1.6,-0.6 -1.2,4 L-3.4,5.6 Z" fill="#333029" stroke="#111" stroke-width="0.5"/><path d="M-2.6,2.6 C-2.4,-0.8 0.4,-2.6 3,-2" fill="none" stroke="#e2132b" stroke-width="1.8"/><path d="M2.2,-4.4 L5.8,-1.4 L1.6,0.4Z" fill="#e2132b"/><path d="M-3.4,5.6 L-1.2,4 L1,5 L-1.4,6.4Z" fill="#77756a"/></g>
<g transform="translate(12.7 238)"><rect x="-6" y="-5.6" width="12" height="11.6" fill="none" stroke="#f4a0aa" stroke-width="0.8"/><rect x="-5.6" y="-2.2" width="8.4" height="8" fill="#8c8a7a" stroke="#55534a" stroke-width="0.4"/><path d="M-0.4,0.2 L2.8,-3 L1.2,-4.6 L6.6,-6.2 L5.2,-0.6 L3.8,-2 L0.8,1.4Z" fill="#e2132b"/></g>
<g transform="translate(31 238)"><path d="M-5.6,-1.6 C-2,-6.6 5,-5 6,2 C6.2,4 5.6,5.4 5,6.2" fill="none" stroke="#f08a96" stroke-width="0.9"/><path d="M-4.6,1.2 C-2.6,-2.6 1.6,-1.6 2.2,2.6" fill="none" stroke="#e2132b" stroke-width="0.9"/><path d="M-2.2,2.2 L1.6,-2.4 L0.4,-3.4 L4.6,-5 L3.8,-0.6 L2.8,-1.6 L-1,3Z" fill="#e2132b"/><path d="M-3.4,3.2 C-1.6,0.8 0.6,1.6 0.6,4.6" fill="none" stroke="#222" stroke-width="0.8"/></g>
<g transform="translate(12.7 259.5)"><path d="M-5.6,4 L-0.6,0.6 L0.8,2 L-4,5.6Z" fill="#e8d020" stroke="#222" stroke-width="0.6"/><ellipse cx="2.2" cy="-1.8" rx="3.8" ry="2.8" transform="rotate(-40 2.2 -1.8)" fill="#d8c628" stroke="#1a1a1a" stroke-width="1.1"/><ellipse cx="2.4" cy="-2" rx="1.6" ry="1" transform="rotate(-40 2.4 -2)" fill="#f4ec90"/></g>
<g transform="translate(31 259.5)"><path d="M-4.6,-1.4 L2.6,-5 M-2.4,4.4 L4.8,0.8 M-3.6,-3.4 L-0.6,3.6 M-5.4,-3.6 L-2.2,-2.2 M-3.6,2.6 L-0.4,4" stroke="#333" stroke-width="0.7" fill="none"/><circle cx="3.4" cy="-3.6" r="0.9" fill="#28c040"/><circle cx="5.2" cy="2.4" r="0.9" fill="#28c040"/><text x="-1.6" y="-3.6" font-family="Liberation Sans, sans-serif" font-size="3.2" fill="#444">3</text></g>
<g transform="translate(12.7 277)"><path d="M-5.8,4.6 C-5.4,-1.6 -0.6,-5 5.8,-4.2 L5,5 Z" fill="#d8c820" stroke="#3a3408" stroke-width="0.7"/><path d="M-2.6,3 C-2.4,0 0,-1.8 3,-1.6 L2.8,3.2Z" fill="#f0f0f0" stroke="#3a3408" stroke-width="0.5"/></g>
<g transform="translate(31 277)"><rect x="-1.4" y="-5.6" width="8" height="7.4" fill="#fafafa" stroke="#555" stroke-width="0.6"/><text x="2.6" y="0.2" font-family="Liberation Sans, sans-serif" font-size="5.2" font-weight="bold" fill="#222" text-anchor="middle">A1</text><path d="M-1.4,-1 L-3.8,1.4 L-3.8,4" stroke="#777" stroke-width="0.6" fill="none"/><circle cx="-3.8" cy="5" r="1" fill="#111"/></g>
<g transform="translate(12.7 296)"><path d="M0,0.6 L-0.6,-5.6" stroke="#2a4ae0" stroke-width="1"/><path d="M0,0.6 L4.8,3.4" stroke="#e0202c" stroke-width="1.1"/><path d="M0,0.6 L4.4,-2.4" stroke="#20a838" stroke-width="1"/><path d="M0,0.6 L-3.8,-1.6 M0,0.6 L-3.6,3.4 M0,0.6 L0.4,5.6" stroke="#9aa" stroke-width="0.6" stroke-dasharray="1 0.8"/><path d="M3.4,1.8 L5.6,3.9 L3,4.2Z" fill="#e0202c"/></g>
<g transform="translate(31 296)"><path d="M-1.6,-5.6 L1.2,-5.8 L4.6,3.6 L5.6,5.6 L-1,5.8 L-4.8,3.6 Z" fill="#55534a"/><path d="M-1.6,-5.6 L-4.8,3.6 L-1,5.8 L-0.2,-2Z" fill="#36352f"/><path d="M0,0 L1.4,3 L-0.8,3Z" fill="#8c8a7a"/></g>
<g transform="translate(12.7 318.5)"><ellipse cx="0" cy="0.6" rx="5.8" ry="3.2" fill="none" stroke="#c81828" stroke-width="2.2"/><path d="M0.6,-6 C4,-3 4,4 0.6,6.4" fill="none" stroke="#2aa048" stroke-width="2.2"/><path d="M-0.6,-6 C-3.4,-3 -3.4,3 -0.6,6.2" fill="none" stroke="#7a1a20" stroke-width="1.4"/><path d="M-1.6,-6.6 L2,-5.6 L-0.6,-3.2Z" fill="#2aa048"/><path d="M-5.6,3.4 L-1.8,3 L-3.4,6Z" fill="#c81828"/></g>
<g transform="translate(31 318.5)"><path d="M-5.6,2 C-5,-1 -3,-3.6 -0.6,-5 L4.4,-5.8 C6,-5.6 6,-4 4.6,-3.6 L5.8,-3 C6.6,-1.6 5.4,-0.8 4.4,-1 C5,0.4 3.8,1.2 2.8,0.8 C3.2,2.6 1.6,3.6 0,2.6 L-1.6,5.2 C-3.6,6 -5.8,4.6 -5.6,2Z" fill="#f0dcaa" stroke="#b09a6a" stroke-width="0.6"/></g>
<g transform="translate(12.7 336.5)"><path d="M0.3999999999999999,-0.3999999999999999 L-4.8,5.6" stroke="#1a1a1a" stroke-width="1.8" stroke-linecap="round"/><circle cx="2.4" cy="-2.4" r="3.2" fill="#9cc8f0" stroke="#2a4a7a" stroke-width="0.8"/><circle cx="1.7999999999999998" cy="-3.2" r="1.2" fill="#d8ecfc"/></g>
<g transform="translate(31 336.5)"><rect x="-5.6" y="-5.4" width="11.4" height="11" fill="#fdf4f4" stroke="#e2132b" stroke-width="1"/><path d="M0.3999999999999999,-0.3999999999999999 L-4.8,5.6" stroke="#1a1a1a" stroke-width="1.8" stroke-linecap="round"/><circle cx="2.4" cy="-2.4" r="3.2" fill="#9cc8f0" stroke="#2a4a7a" stroke-width="0.8"/><circle cx="1.7999999999999998" cy="-3.2" r="1.2" fill="#d8ecfc"/></g>
<g transform="translate(12.7 354.5)"><path d="M-6,-5.6 L-1.8,-4.6 L-4.8,-1.6Z M6,-5.6 L1.8,-4.6 L4.8,-1.6Z M-6,6 L-1.8,4.8 L-4.8,1.8Z M6,6 L1.8,4.8 L4.8,1.8Z" fill="#e2132b"/><path d="M-4,-3.6 L4,4 M4,-3.6 L-4,4" stroke="#e2132b" stroke-width="1.3"/><circle cx="0" cy="0" r="2.8" fill="#9cc8f0" stroke="#2a4a7a" stroke-width="0.8"/></g>
<g transform="translate(31 354.5)"><path d="M1.8,1.6 L5.4,5.8" stroke="#1a1a1a" stroke-width="1.8" stroke-linecap="round"/><circle cx="-1" cy="-1.6" r="3.4" fill="#9cc8f0" stroke="#2a4a7a" stroke-width="0.8"/><path d="M-5.2,-1.4 L-1.6,-4.6 L-1.6,-3 C2,-3.4 4.6,-1.4 4.6,2.6 C3.2,0.2 1.4,-0.2 -1.6,0 L-1.6,1.8Z" fill="#1b6cd8" stroke="#0c3c8a" stroke-width="0.4"/></g>
<g transform="translate(12.7 377.2)"><circle cx="0" cy="-4.8" r="1.3" fill="#fff" stroke="#b8b8b8" stroke-width="0.7"/><path d="M-1.8,-3 h3.6 l0.6,5.6 h-4.8z" fill="#fff" stroke="#b8b8b8" stroke-width="0.7"/><path d="M-2.6,3 L2.6,6 M2.6,3 L-2.6,6" stroke="#e2132b" stroke-width="0.9"/></g>
<g transform="translate(31 377.2)"><path d="M-6,0.8 C-3,-3.6 3,-3.8 6,-0.2 C3,3 -3,3.4 -6,0.8Z" fill="#fff" stroke="#111" stroke-width="0.9"/><circle cx="0.4" cy="0" r="2.4" fill="#222"/><path d="M-6,-1.8 C-3,-5.4 3,-5.6 6,-2.6" fill="none" stroke="#111" stroke-width="1.2"/><circle cx="1.2" cy="-0.8" r="0.7" fill="#fff"/></g>
<g transform="translate(12.7 395)"><ellipse cx="-2.8" cy="-0.4" rx="1.9" ry="3.2" transform="rotate(12 -2.8 -0.4)" fill="#111"/><ellipse cx="-3.6" cy="4.8" rx="1.4" ry="1.2" fill="#111"/><ellipse cx="3" cy="-2.6" rx="1.9" ry="3.2" transform="rotate(14 3 -2.6)" fill="#111"/><ellipse cx="2" cy="2.6" rx="1.4" ry="1.2" fill="#111"/></g>
<g transform="translate(31 395)"><circle r="3.6" fill="#fff" stroke="#111" stroke-width="0.9"/><path d="M-6.4,0 H6.4 M0,-4.6 V4.6" stroke="#111" stroke-width="0.7"/><path d="M4.4,-2.8 L6.8,0 L4.4,2.8Z M-4.4,-2.8 L-6.8,0 L-4.4,2.8Z" fill="#111"/><path d="M0,-6 L-1.6,-4 L1.6,-4Z M0,6 L-1.6,4 L1.6,4Z" fill="#111"/></g>
<g transform="translate(12.7 417)"><path d="M-6,-1 L-1,-4.6 L6,-2.6 L5.6,2 L0.4,5.6 L-5.6,3Z" fill="#3a3a3a"/><path d="M-4.6,-0.8 L-0.8,-3.4 L4.6,-2 L0.6,1.2Z" fill="#c8141e"/><circle cx="0" cy="-1" r="2" fill="#f04a54"/><path d="M-5.6,3 L0.4,5.6 L5.6,2" fill="none" stroke="#8a8a8a" stroke-width="0.8"/></g>
<g transform="translate(31 417)"><path d="M-6,-1 L-1,-4.6 L6,-2.6 L5.6,2 L0.4,5.6 L-5.6,3Z" fill="#3a3a3a"/><path d="M-4.6,-0.8 L-0.8,-3.4 L4.6,-2 L0.6,1.2Z" fill="#c8141e"/><path d="M-3,-1 L0,-3 L3,-1.6 L0.2,0.6Z" fill="#f0444e"/><path d="M-5.6,3 L0.4,5.6 L5.6,2" fill="none" stroke="#8a8a8a" stroke-width="0.8"/></g>
<g transform="translate(12.7 435.6)"><path d="M-5.6,-5.4 L2.4,-6 L3.2,4.4 L-5,5.4Z" fill="#e2132b"/><path d="M-3.6,-3 L1,-3.6 M-3.4,-1 L1.2,-1.6 M-3.2,1 L0,0.6" stroke="#fff" stroke-width="1.1"/><path d="M-1.6,2 L3.2,1.6 L3.2,0 L6.6,3 L3.2,6.2 L3.2,4.6 L-1.6,5Z" fill="#1b7be0" stroke="#0c3c8a" stroke-width="0.3"/></g>
<g transform="translate(31 435.6)"><path d="M-6,-2.6 L-2.4,-5.6 L3.6,-5.4 L6.4,-2.2 L0.8,5 Z" fill="#c4101c"/><path d="M-6,-2.6 L6.4,-2.2 L0.8,5Z" fill="#8a0a14"/><path d="M-2.4,-5.6 L0,-2.4 L3.6,-5.4" fill="none" stroke="#f06a72" stroke-width="0.7"/><circle cx="4" cy="4" r="2" fill="#fff" stroke="#8a0a14" stroke-width="0.8"/><circle cx="4" cy="4" r="0.8" fill="#c4101c"/></g>
<circle cx="9.6" cy="545.6" r="3.7" fill="#4a4a4a" stroke="#8a8a8a" stroke-width="0.7"/><path d="M8.2,544.2 C8.4,542.6 10.8,542.6 11,544.2 C11,545.4 10,546.4 9.6,547.8 C9.2,546.4 8.2,545.4 8.2,544.2Z" fill="#d8202c"/>
<circle cx="25.7" cy="545.6" r="3.5" fill="#fbfbfb" stroke="#a8a8a8" stroke-width="0.9"/><path d="M25.7,545 V547.6" stroke="#9a9a9a" stroke-width="0.9"/><circle cx="25.7" cy="543.8" r="0.5" fill="#9a9a9a"/>
<path d="M36.6,542.6 V548.6" stroke="#bdbdbd" stroke-width="0.8"/><path d="M848.4,541.6 V548" stroke="#aaa" stroke-width="0.8"/>
<path d="M1019,552 l2.5,-2.5 M1016.5,552 l5,-5" stroke="#b8b8b8" stroke-width="0.8"/>
</svg>
  <div class="abs" style="left:0;top:0;width:1024px;height:1px;background:#a2a2a2"></div>
  <div class="abs" style="left:0;top:0;width:2px;height:553px;background:#d2d5d8"></div>
  <div class="abs" style="left:2px;top:0;width:1px;height:553px;background:#bcbfc2"></div>
  <div class="abs" style="left:3px;top:1px;width:1px;height:552px;background:#f9f9f9"></div>
  <div class="abs" style="left:1022px;top:0;width:1px;height:553px;background:#b4b4b4"></div>
  <div class="abs" style="left:1023px;top:0;width:1px;height:553px;background:#808080"></div>
</div>
</body>
</html>
